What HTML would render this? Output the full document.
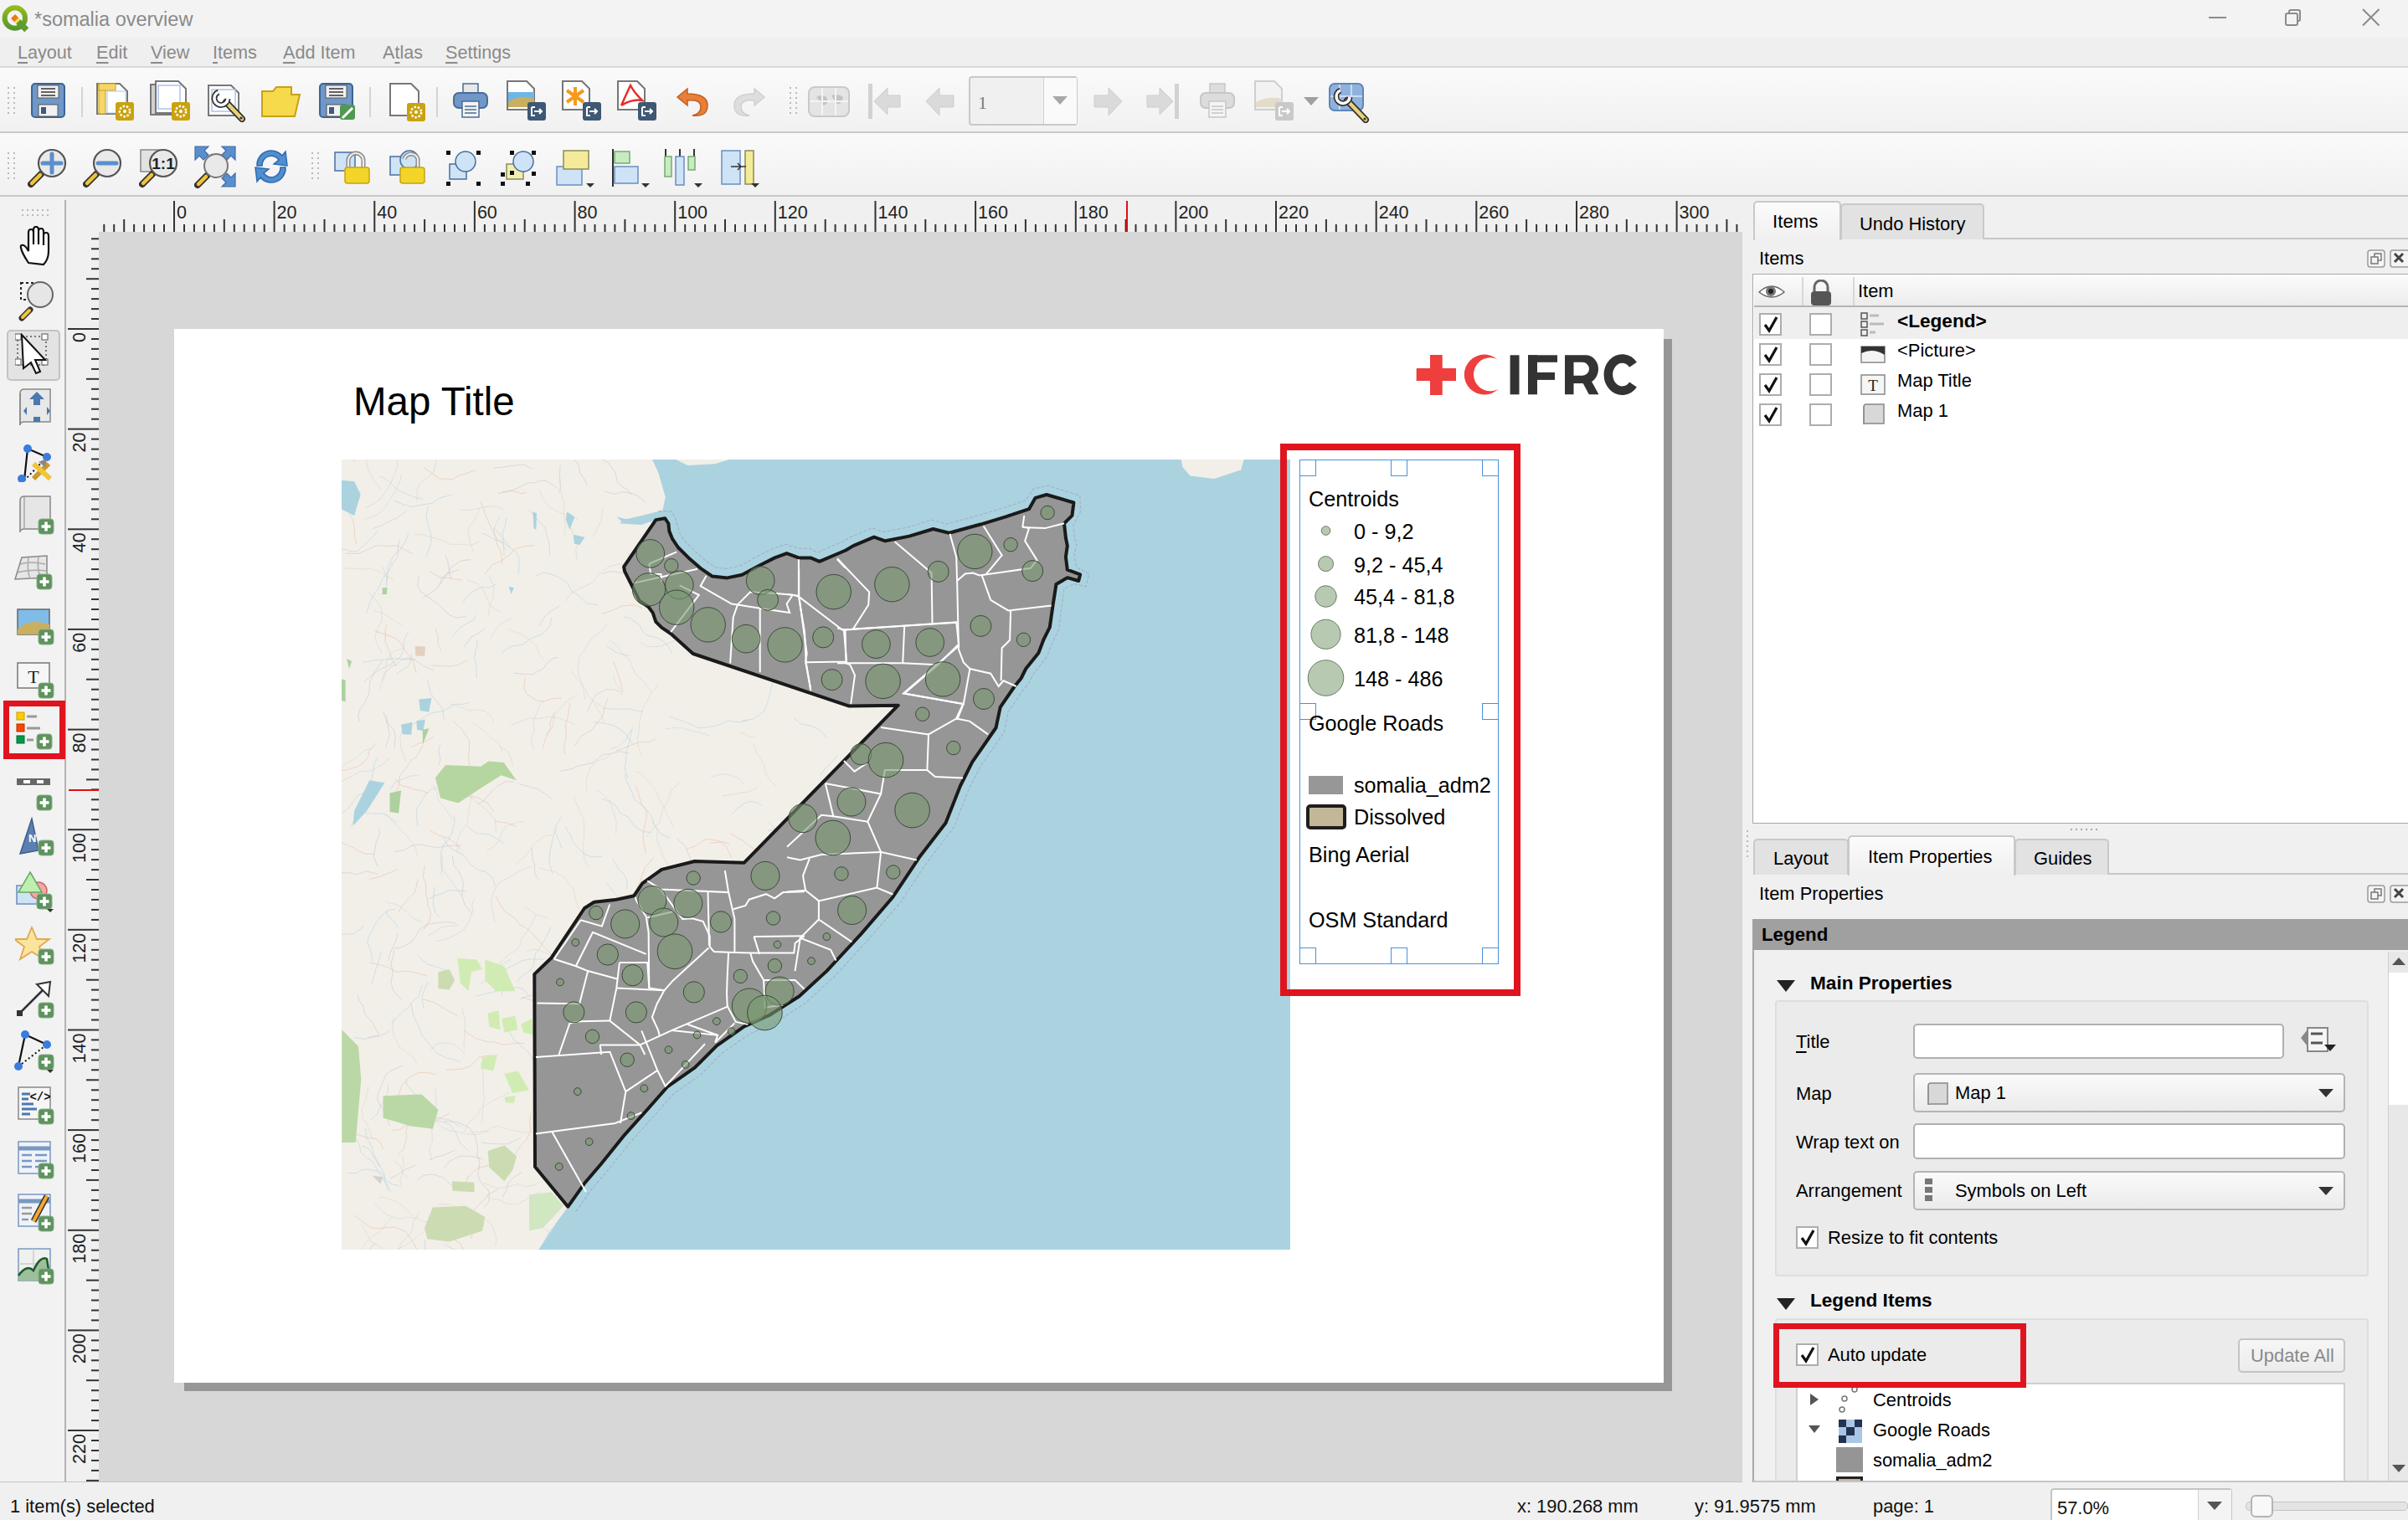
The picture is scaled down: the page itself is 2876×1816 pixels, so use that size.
<!DOCTYPE html>
<html><head><meta charset="utf-8"><title>somalia overview</title>
<style>
html,body{margin:0;padding:0;width:2876px;height:1816px;overflow:hidden;background:#f0f0f0;font-family:"Liberation Sans",sans-serif;}
u{text-decoration:underline;text-underline-offset:4px;text-decoration-thickness:1.5px;}
</style></head><body>
<div style="position:absolute;left:0px;top:0px;width:2876px;height:45px;background:#f3f3f3"></div><div style="position:absolute;left:0px;top:45px;width:2876px;height:36px;background:#efefef;border-bottom:2px solid #d8d8d8;box-sizing:border-box"></div><div style="position:absolute;left:0px;top:81px;width:2876px;height:78px;background:linear-gradient(#fafafa,#f1f1f1);border-bottom:2px solid #c9c9c9;box-sizing:border-box"></div><div style="position:absolute;left:0px;top:159px;width:2876px;height:76px;background:linear-gradient(#fafafa,#f1f1f1);border-bottom:2px solid #c9c9c9;box-sizing:border-box"></div><svg style="position:absolute;left:0px;top:0px;" width="40" height="45" viewBox="0 0 40 45"><defs><linearGradient id="qg" x1="0" y1="0" x2="0" y2="1"><stop offset="0" stop-color="#93b91c"/><stop offset="1" stop-color="#589632"/></linearGradient></defs><circle cx="17.8" cy="21.5" r="12.2" fill="none" stroke="url(#qg)" stroke-width="6"/><g transform="translate(15.5,19.5) rotate(45)"><rect x="0" y="-3.6" width="6" height="7.2" fill="#ee7913"/><rect x="6" y="-3.6" width="3" height="7.2" fill="#f3e04a"/><rect x="9" y="-3.6" width="14" height="7.2" fill="#5d9c2f"/></g></svg><div style="position:absolute;left:41px;top:11.8px;font-size:23.5px;line-height:1;color:#8a8a8a;font-weight:400;white-space:nowrap;">*somalia overview</div><div style="position:absolute;left:2638px;top:20px;width:21px;height:2px;background:#8a8a8a"></div><svg style="position:absolute;left:2727px;top:9px;" width="26" height="24" viewBox="0 0 26 24"><rect x="3" y="7" width="14" height="14" rx="2" fill="none" stroke="#8a8a8a" stroke-width="2"/><path d="M7 7 V5 a2 2 0 0 1 2 -2 H18 a2 2 0 0 1 2 2 V14 a2 2 0 0 1 -2 2 H17" fill="none" stroke="#8a8a8a" stroke-width="2"/></svg><svg style="position:absolute;left:2820px;top:9px;" width="24" height="24" viewBox="0 0 24 24"><path d="M2 2 L21.5 21.5 M21.5 2 L2 21.5" stroke="#8a8a8a" stroke-width="2"/></svg><div style="position:absolute;left:21px;top:51.8px;font-size:21.6px;line-height:1;color:#8a8a8a;font-weight:400;white-space:nowrap;"><u>L</u>ayout</div><div style="position:absolute;left:115px;top:51.8px;font-size:21.6px;line-height:1;color:#8a8a8a;font-weight:400;white-space:nowrap;"><u>E</u>dit</div><div style="position:absolute;left:180px;top:51.8px;font-size:21.6px;line-height:1;color:#8a8a8a;font-weight:400;white-space:nowrap;"><u>V</u>iew</div><div style="position:absolute;left:254px;top:51.8px;font-size:21.6px;line-height:1;color:#8a8a8a;font-weight:400;white-space:nowrap;"><u>I</u>tems</div><div style="position:absolute;left:338px;top:51.8px;font-size:21.6px;line-height:1;color:#8a8a8a;font-weight:400;white-space:nowrap;"><u>A</u>dd Item</div><div style="position:absolute;left:457px;top:51.8px;font-size:21.6px;line-height:1;color:#8a8a8a;font-weight:400;white-space:nowrap;">A<u>t</u>las</div><div style="position:absolute;left:532px;top:51.8px;font-size:21.6px;line-height:1;color:#8a8a8a;font-weight:400;white-space:nowrap;"><u>S</u>ettings</div><svg style="position:absolute;left:9px;top:104px;" width="14" height="36" viewBox="0 0 14 36"><rect x="0" y="0" width="2" height="2" fill="#b9b9b9"/><rect x="7" y="0" width="2" height="2" fill="#b9b9b9"/><rect x="0" y="6" width="2" height="2" fill="#b9b9b9"/><rect x="7" y="6" width="2" height="2" fill="#b9b9b9"/><rect x="0" y="12" width="2" height="2" fill="#b9b9b9"/><rect x="7" y="12" width="2" height="2" fill="#b9b9b9"/><rect x="0" y="18" width="2" height="2" fill="#b9b9b9"/><rect x="7" y="18" width="2" height="2" fill="#b9b9b9"/><rect x="0" y="24" width="2" height="2" fill="#b9b9b9"/><rect x="7" y="24" width="2" height="2" fill="#b9b9b9"/><rect x="0" y="30" width="2" height="2" fill="#b9b9b9"/><rect x="7" y="30" width="2" height="2" fill="#b9b9b9"/></svg><svg style="position:absolute;left:37px;top:99px;" width="45" height="46" viewBox="0 0 45 46"><rect x="1" y="1" width="39" height="40" rx="4" fill="#6f98c8" stroke="#3c6496" stroke-width="2"/><rect x="8" y="3" width="25" height="15" fill="#f1f1f1" stroke="#555" stroke-width="1"/><path d="M12 7 H29 M12 11 H29 M12 15 H29" stroke="#333" stroke-width="1.5"/><rect x="9" y="26" width="23" height="14" fill="#f1f1f1" stroke="#555" stroke-width="1"/><rect x="12" y="29" width="6" height="8" fill="#3c5a82"/></svg><div style="position:absolute;left:97px;top:104px;width:2px;height:36px;background:#d4d4d4"></div><svg style="position:absolute;left:115px;top:99px;" width="50" height="46" viewBox="0 0 50 46"><path d="M1 1 H28 L37 10 V37 H1 Z" fill="#fff" stroke="#777" stroke-width="2"/><rect x="3" y="1" width="8" height="36" fill="#f5d66a" stroke="#c9a20f"/><rect x="3" y="1" width="20" height="8" fill="#f5d66a" stroke="#c9a20f"/><rect x="13" y="10" width="22" height="26" fill="none" stroke="#a8c4f0"/><rect x="23" y="23" width="22" height="22" rx="3" fill="#c9a20f"/><circle cx="34.0" cy="34.0" r="6.16" fill="none" stroke="#fff" stroke-width="2.5" stroke-dasharray="2.5 1.8"/><circle cx="34.0" cy="34.0" r="2" fill="#fff"/></svg><svg style="position:absolute;left:179px;top:96px;" width="50" height="50" viewBox="0 0 50 50"><rect x="1" y="5" width="28" height="36" fill="#d0d0d0" stroke="#777" stroke-width="2"/><g transform="translate(6,0)"><path d="M1 1 H28 L37 10 V39 H1 Z" fill="#fff" stroke="#777" stroke-width="2"/><rect x="4" y="6" width="26" height="28" fill="none" stroke="#a8c4f0" stroke-width="1.5"/></g><rect x="26" y="26" width="22" height="22" rx="3" fill="#c9a20f"/><circle cx="37.0" cy="37.0" r="6.16" fill="none" stroke="#fff" stroke-width="2.5" stroke-dasharray="2.5 1.8"/><circle cx="37.0" cy="37.0" r="2" fill="#fff"/></svg><svg style="position:absolute;left:248px;top:101px;" width="50" height="48" viewBox="0 0 50 48"><path d="M1 1 H28 L37 10 V37 H1 Z" fill="#fff" stroke="#777" stroke-width="2"/><rect x="5" y="6" width="28" height="26" fill="none" stroke="#a8c4f0" stroke-width="1.5"/><path d="M22 21 L41 41" stroke="#333" stroke-width="8" stroke-linecap="round"/><path d="M22 21 L41 41" stroke="#e8d27a" stroke-width="4.5" stroke-linecap="round"/><circle cx="40" cy="40" r="1.6" fill="#333"/><path d="M13 9 A8 8 0 1 0 24 17" fill="none" stroke="#333" stroke-width="7"/><path d="M13 9 A8 8 0 1 0 24 17" fill="none" stroke="#fff" stroke-width="3.5"/></svg><svg style="position:absolute;left:312px;top:103px;" width="48" height="38" viewBox="0 0 48 38"><path d="M1 6 H14 L18 1 H36 V10 H46 L40 36 H1 Z" fill="#f7d94c" stroke="#c6a11a" stroke-width="2"/></svg><svg style="position:absolute;left:381px;top:99px;" width="45" height="46" viewBox="0 0 45 46"><rect x="1" y="1" width="39" height="40" rx="4" fill="#6f98c8" stroke="#3c6496" stroke-width="2"/><rect x="8" y="3" width="25" height="15" fill="#f1f1f1" stroke="#555" stroke-width="1"/><path d="M12 7 H29 M12 11 H29 M12 15 H29" stroke="#333" stroke-width="1.5"/><rect x="9" y="26" width="23" height="14" fill="#f1f1f1" stroke="#555" stroke-width="1"/><rect x="12" y="29" width="6" height="8" fill="#3c5a82"/><rect x="25" y="26" width="18" height="18" rx="3" fill="#4f9a51"/><path d="M28 42 L40 30" stroke="#fff" stroke-width="3"/></svg><div style="position:absolute;left:441px;top:104px;width:2px;height:36px;background:#d4d4d4"></div><svg style="position:absolute;left:465px;top:99px;" width="46" height="46" viewBox="0 0 46 46"><path d="M1 1 H26 L35 10 V39 H1 Z" fill="#fff" stroke="#777" stroke-width="2"/><rect x="21" y="24" width="22" height="22" rx="3" fill="#c9a20f"/><circle cx="32.0" cy="35.0" r="6.16" fill="none" stroke="#fff" stroke-width="2.5" stroke-dasharray="2.5 1.8"/><circle cx="32.0" cy="35.0" r="2" fill="#fff"/></svg><div style="position:absolute;left:521px;top:104px;width:2px;height:36px;background:#d4d4d4"></div><svg style="position:absolute;left:541px;top:99px;" width="44" height="44" viewBox="0 0 44 44"><rect x="12" y="1" width="18" height="12" fill="#e8e8e8" stroke="#4a6c96" stroke-width="1.5"/><rect x="1" y="12" width="40" height="18" rx="6" fill="#6f98c8" stroke="#4a6c96" stroke-width="2"/><rect x="11" y="22" width="20" height="19" fill="#f4f4f4" stroke="#4a6c96" stroke-width="1.5"/><path d="M14 28 H28 M14 32 H28 M14 36 H28" stroke="#4a6c96" stroke-width="1.5"/></svg><svg style="position:absolute;left:605px;top:96px;" width="50" height="50" viewBox="0 0 50 50"><path d="M1 1 H24 L33 10 V35 H1 Z" fill="#fff" stroke="#777" stroke-width="2"/><rect x="2" y="14" width="31" height="18" fill="#6fb6e8"/><path d="M2 32 L2 26 Q16 16 33 22 V32 Z" fill="#c8b060"/><rect x="25" y="26" width="22" height="22" rx="3" fill="#3f5873"/><path d="M30 32 H34 M30 32 V42 H34 M33 37 H42 M39 34 L42 37 L39 40" stroke="#fff" stroke-width="2" fill="none"/></svg><svg style="position:absolute;left:671px;top:96px;" width="50" height="50" viewBox="0 0 50 50"><path d="M1 1 H24 L33 10 V35 H1 Z" fill="#fff" stroke="#777" stroke-width="2"/><path d="M16 8 V30 M6 12 L26 26 M26 12 L6 26" stroke="#f59a1d" stroke-width="4"/><rect x="25" y="26" width="22" height="22" rx="3" fill="#3f5873"/><path d="M30 32 H34 M30 32 V42 H34 M33 37 H42 M39 34 L42 37 L39 40" stroke="#fff" stroke-width="2" fill="none"/></svg><svg style="position:absolute;left:737px;top:96px;" width="50" height="50" viewBox="0 0 50 50"><path d="M1 1 H24 L33 10 V35 H1 Z" fill="#fff" stroke="#777" stroke-width="2"/><path d="M5 30 Q14 10 16 6 Q20 14 30 24 Q18 22 5 30" fill="none" stroke="#e62e25" stroke-width="2.5"/><rect x="25" y="26" width="22" height="22" rx="3" fill="#3f5873"/><path d="M30 32 H34 M30 32 V42 H34 M33 37 H42 M39 34 L42 37 L39 40" stroke="#fff" stroke-width="2" fill="none"/></svg><svg style="position:absolute;left:807px;top:102px;" width="42" height="40" viewBox="0 0 42 40"><path d="M14 4 L2 14 L14 24 V18 Q30 16 30 26 Q30 34 20 36 Q38 38 38 24 Q38 10 14 10 Z" fill="#e77f3a" stroke="#c45e1c" stroke-width="1.5"/></svg><svg style="position:absolute;left:873px;top:102px;" width="42" height="40" viewBox="0 0 42 40"><path d="M28 4 L40 14 L28 24 V18 Q12 16 12 26 Q12 34 22 36 Q4 38 4 24 Q4 10 28 10 Z" fill="#dedede" stroke="#cfcfcf" stroke-width="1.5"/></svg><svg style="position:absolute;left:943px;top:104px;" width="14" height="36" viewBox="0 0 14 36"><rect x="0" y="0" width="2" height="2" fill="#b9b9b9"/><rect x="7" y="0" width="2" height="2" fill="#b9b9b9"/><rect x="0" y="6" width="2" height="2" fill="#b9b9b9"/><rect x="7" y="6" width="2" height="2" fill="#b9b9b9"/><rect x="0" y="12" width="2" height="2" fill="#b9b9b9"/><rect x="7" y="12" width="2" height="2" fill="#b9b9b9"/><rect x="0" y="18" width="2" height="2" fill="#b9b9b9"/><rect x="7" y="18" width="2" height="2" fill="#b9b9b9"/><rect x="0" y="24" width="2" height="2" fill="#b9b9b9"/><rect x="7" y="24" width="2" height="2" fill="#b9b9b9"/><rect x="0" y="30" width="2" height="2" fill="#b9b9b9"/><rect x="7" y="30" width="2" height="2" fill="#b9b9b9"/></svg><svg style="position:absolute;left:965px;top:102px;" width="52" height="40" viewBox="0 0 52 40"><rect x="1" y="2" width="48" height="35" rx="7" fill="#e4e4e4" stroke="#c9c9c9" stroke-width="2"/><path d="M10 14 q6 -4 12 0 q4 8 -4 10 Z M28 12 q8 -3 14 2 q-2 10 -8 8 Z" fill="#c4c4c4"/><path d="M17 3 V36 M33 3 V36 M2 19 H48" stroke="#f4f4f4" stroke-width="2"/></svg><svg style="position:absolute;left:1036px;top:99px;" width="42" height="44" viewBox="0 0 42 44"><rect x="1" y="1" width="5" height="42" fill="#d2d2d2"/><path d="M8 22 L24 6 V15 H39 V29 H24 V38 Z" fill="#dadada" stroke="#cdcdcd"/></svg><svg style="position:absolute;left:1105px;top:104px;" width="36" height="36" viewBox="0 0 36 36"><path d="M1 17 L17 1 V10 H34 V24 H17 V34 Z" fill="#dadada" stroke="#cdcdcd"/></svg><div style="position:absolute;left:1157px;top:91px;width:130px;height:59px;background:#f0f0f0;border:2px solid #c9c9c9;border-radius:4px;box-sizing:border-box"></div><div style="position:absolute;left:1246px;top:93px;width:40px;height:55px;background:#fafafa;border-left:1px solid #d0d0d0;box-sizing:border-box"></div><svg style="position:absolute;left:1257px;top:115px;" width="18" height="10" viewBox="0 0 18 10"><path d="M0 0 H18 L9 10 Z" fill="#a8a8a8"/></svg><div style="position:absolute;left:1168px;top:111.6px;font-size:22px;line-height:1;color:#7a7a7a;font-weight:400;white-space:nowrap;font-family:'Liberation Serif',serif;">1</div><svg style="position:absolute;left:1305px;top:104px;" width="36" height="36" viewBox="0 0 36 36"><path d="M35 17 L19 1 V10 H2 V24 H19 V34 Z" fill="#dadada" stroke="#cdcdcd"/></svg><svg style="position:absolute;left:1368px;top:99px;" width="42" height="44" viewBox="0 0 42 44"><rect x="35" y="1" width="5" height="42" fill="#d2d2d2"/><path d="M33 22 L17 6 V15 H2 V29 H17 V38 Z" fill="#dadada" stroke="#cdcdcd"/></svg><svg style="position:absolute;left:1433px;top:99px;" width="44" height="44" viewBox="0 0 44 44"><rect x="12" y="1" width="18" height="12" fill="#ddd" stroke="#c6c6c6" stroke-width="1.5"/><rect x="1" y="12" width="40" height="18" rx="6" fill="#dcdcdc" stroke="#c6c6c6" stroke-width="2"/><rect x="11" y="22" width="20" height="19" fill="#f4f4f4" stroke="#c6c6c6" stroke-width="1.5"/><path d="M14 28 H28 M14 32 H28 M14 36 H28" stroke="#c6c6c6" stroke-width="1.5"/></svg><svg style="position:absolute;left:1498px;top:96px;" width="50" height="50" viewBox="0 0 50 50"><path d="M1 1 H24 L33 10 V35 H1 Z" fill="#f2f2f2" stroke="#cfcfcf" stroke-width="2"/><path d="M2 32 L2 26 Q16 18 33 22 V32 Z" fill="#e2dcc8"/><rect x="25" y="26" width="22" height="22" rx="3" fill="#c9c9c9"/><path d="M30 32 H34 M30 32 V42 H34 M33 37 H42 M39 34 L42 37 L39 40" stroke="#fff" stroke-width="2" fill="none"/></svg><svg style="position:absolute;left:1557px;top:116px;" width="18" height="10" viewBox="0 0 18 10"><path d="M0 0 H18 L9 10 Z" fill="#a0a0a0"/></svg><svg style="position:absolute;left:1587px;top:99px;" width="52" height="48" viewBox="0 0 52 48"><rect x="1" y="1" width="40" height="32" rx="6" fill="#8fb1dc" stroke="#5f86b8" stroke-width="2"/><path d="M13 2 V32 M27 2 V32 M2 16 H40" stroke="#c9dcf2" stroke-width="2"/><path d="M22 21 L44 44" stroke="#333" stroke-width="8" stroke-linecap="round"/><path d="M22 21 L44 44" stroke="#e8d27a" stroke-width="4.5" stroke-linecap="round"/><circle cx="43" cy="43" r="1.6" fill="#333"/><path d="M14 9 A8 8 0 1 0 25 17" fill="none" stroke="#333" stroke-width="7"/><path d="M14 9 A8 8 0 1 0 25 17" fill="none" stroke="#fff" stroke-width="3.5"/></svg><svg style="position:absolute;left:9px;top:182px;" width="14" height="36" viewBox="0 0 14 36"><rect x="0" y="0" width="2" height="2" fill="#b9b9b9"/><rect x="7" y="0" width="2" height="2" fill="#b9b9b9"/><rect x="0" y="6" width="2" height="2" fill="#b9b9b9"/><rect x="7" y="6" width="2" height="2" fill="#b9b9b9"/><rect x="0" y="12" width="2" height="2" fill="#b9b9b9"/><rect x="7" y="12" width="2" height="2" fill="#b9b9b9"/><rect x="0" y="18" width="2" height="2" fill="#b9b9b9"/><rect x="7" y="18" width="2" height="2" fill="#b9b9b9"/><rect x="0" y="24" width="2" height="2" fill="#b9b9b9"/><rect x="7" y="24" width="2" height="2" fill="#b9b9b9"/><rect x="0" y="30" width="2" height="2" fill="#b9b9b9"/><rect x="7" y="30" width="2" height="2" fill="#b9b9b9"/></svg><svg style="position:absolute;left:33px;top:176px;" width="50" height="50" viewBox="0 0 50 50"><path d="M4 44 L16 32" stroke="#333" stroke-width="8" stroke-linecap="round"/><path d="M5 43 L15 33" stroke="#f2c43a" stroke-width="4.5" stroke-linecap="round"/><circle cx="29" cy="19" r="16" fill="#e9e9e9" stroke="#555" stroke-width="2.2"/><path d="M29 8 V30 M18 19 H40" stroke="#5b8fcc" stroke-width="5" stroke-linecap="round"/></svg><svg style="position:absolute;left:99px;top:176px;" width="50" height="50" viewBox="0 0 50 50"><path d="M4 44 L16 32" stroke="#333" stroke-width="8" stroke-linecap="round"/><path d="M5 43 L15 33" stroke="#f2c43a" stroke-width="4.5" stroke-linecap="round"/><circle cx="29" cy="19" r="16" fill="#e9e9e9" stroke="#555" stroke-width="2.2"/><path d="M18 19 H40" stroke="#5b8fcc" stroke-width="5" stroke-linecap="round"/></svg><svg style="position:absolute;left:166px;top:176px;" width="50" height="50" viewBox="0 0 50 50"><rect x="2" y="3" width="22" height="26" fill="#e2e2e2" stroke="#888" stroke-width="1.5"/><path d="M4 44 L16 32" stroke="#333" stroke-width="8" stroke-linecap="round"/><path d="M5 43 L15 33" stroke="#f2c43a" stroke-width="4.5" stroke-linecap="round"/><circle cx="29" cy="19" r="16" fill="#e9e9e9" stroke="#555" stroke-width="2.2"/><text x="29" y="26" font-size="19" font-weight="700" text-anchor="middle" fill="#222" font-family="Liberation Sans">1:1</text></svg><svg style="position:absolute;left:232px;top:174px;" width="52" height="52" viewBox="0 0 52 52"><path d="M1 1 H17 L12 6 L17 11 L11 17 L6 12 L1 17 Z" fill="#5b8fcc" stroke="#3f6ea8" stroke-width="1.2"/><path d="M49 1 H33 L38 6 L33 11 L39 17 L44 12 L49 17 Z" fill="#5b8fcc" stroke="#3f6ea8" stroke-width="1.2"/><path d="M49 49 H33 L38 44 L33 39 L39 33 L44 38 L49 33 Z" fill="#5b8fcc" stroke="#3f6ea8" stroke-width="1.2"/><path d="M4 47 L15 36" stroke="#333" stroke-width="8" stroke-linecap="round"/><path d="M5 46 L14 37" stroke="#f2c43a" stroke-width="4.5" stroke-linecap="round"/><circle cx="26" cy="24" r="14" fill="#e9e9e9" stroke="#777" stroke-width="2"/></svg><svg style="position:absolute;left:301px;top:176px;" width="46" height="46" viewBox="0 0 46 46"><path d="M6 22 A17 17 0 0 1 36 10 L40 5 L42 22 L26 20 L32 15 A11 11 0 0 0 12 22 Z" fill="#4f8fd0" stroke="#2f6aae" stroke-width="1.5"/><path d="M40 24 A17 17 0 0 1 10 36 L6 41 L4 24 L20 26 L14 31 A11 11 0 0 0 34 24 Z" fill="#4f8fd0" stroke="#2f6aae" stroke-width="1.5"/></svg><svg style="position:absolute;left:372px;top:182px;" width="14" height="36" viewBox="0 0 14 36"><rect x="0" y="0" width="2" height="2" fill="#b9b9b9"/><rect x="7" y="0" width="2" height="2" fill="#b9b9b9"/><rect x="0" y="6" width="2" height="2" fill="#b9b9b9"/><rect x="7" y="6" width="2" height="2" fill="#b9b9b9"/><rect x="0" y="12" width="2" height="2" fill="#b9b9b9"/><rect x="7" y="12" width="2" height="2" fill="#b9b9b9"/><rect x="0" y="18" width="2" height="2" fill="#b9b9b9"/><rect x="7" y="18" width="2" height="2" fill="#b9b9b9"/><rect x="0" y="24" width="2" height="2" fill="#b9b9b9"/><rect x="7" y="24" width="2" height="2" fill="#b9b9b9"/><rect x="0" y="30" width="2" height="2" fill="#b9b9b9"/><rect x="7" y="30" width="2" height="2" fill="#b9b9b9"/></svg><svg style="position:absolute;left:399px;top:178px;" width="50" height="50" viewBox="0 0 50 50"><rect x="1" y="4" width="24" height="22" fill="#cfe3f6" stroke="#4a6f9c" stroke-width="1.5"/><path d="M17 24 V14 a9 9 0 0 1 18 0 V24" fill="none" stroke="#888" stroke-width="5"/><path d="M17 24 V14 a9 9 0 0 1 18 0 V24" fill="none" stroke="#eee" stroke-width="2.2"/><rect x="13" y="22" width="29" height="19" rx="3" fill="#f2d528" stroke="#c9a20f" stroke-width="1.5"/></svg><svg style="position:absolute;left:465px;top:178px;" width="50" height="50" viewBox="0 0 50 50"><rect x="1" y="9" width="24" height="22" fill="#cfe3f6" stroke="#4a6f9c" stroke-width="1.5"/><circle cx="24" cy="13" r="11" fill="#cfe3f6" stroke="#4a6f9c" stroke-width="1.5"/><path d="M18 12 a8 7 0 0 1 16 2 V24" fill="none" stroke="#888" stroke-width="5"/><path d="M18 12 a8 7 0 0 1 16 2 V24" fill="none" stroke="#eee" stroke-width="2.2"/><rect x="13" y="22" width="29" height="19" rx="3" fill="#f2d528" stroke="#c9a20f" stroke-width="1.5"/></svg><svg style="position:absolute;left:531px;top:178px;" width="46" height="48" viewBox="0 0 46 48"><rect x="2" y="2" width="5" height="5" fill="#111"/><rect x="38" y="2" width="5" height="5" fill="#111"/><rect x="2" y="39" width="5" height="5" fill="#111"/><rect x="38" y="39" width="5" height="5" fill="#111"/><rect x="6" y="18" width="20" height="18" fill="#cfe3f6" stroke="#4a6f9c" stroke-width="1.5"/><circle cx="25" cy="15" r="12" fill="#cfe3f6" stroke="#4a6f9c" stroke-width="1.5"/></svg><svg style="position:absolute;left:598px;top:178px;" width="46" height="48" viewBox="0 0 46 48"><rect x="0" y="28" width="5" height="5" fill="#111"/><rect x="11" y="2" width="5" height="5" fill="#111"/><rect x="37" y="2" width="5" height="5" fill="#111"/><rect x="0" y="39" width="5" height="5" fill="#111"/><rect x="30" y="39" width="5" height="5" fill="#111"/><rect x="37" y="27" width="5" height="5" fill="#111"/><rect x="7" y="18" width="20" height="18" fill="#f2eeb0" stroke="#8a8a5a" stroke-width="1.5"/><circle cx="27" cy="15" r="12" fill="#cfe3f6" stroke="#4a6f9c" stroke-width="1.5"/><rect x="11" y="26" width="5" height="5" fill="#111"/></svg><svg style="position:absolute;left:664px;top:177px;" width="50" height="50" viewBox="0 0 50 50"><rect x="1" y="22" width="30" height="22" fill="#cfe3f6" stroke="#6a8fbf" stroke-width="1.5"/><rect x="9" y="3" width="30" height="22" fill="#f4eb9a" stroke="#8a8a5a" stroke-width="1.5"/><path d="M36 42 H46 L41 47 Z" fill="#333"/></svg><svg style="position:absolute;left:730px;top:177px;" width="50" height="50" viewBox="0 0 50 50"><path d="M2 1 V46" stroke="#333" stroke-width="2"/><rect x="4" y="4" width="18" height="14" fill="#c6ecc0" stroke="#7aa874" stroke-width="1.5"/><rect x="4" y="22" width="28" height="20" fill="#cfe3f6" stroke="#6a8fbf" stroke-width="1.5"/><path d="M36 42 H46 L41 47 Z" fill="#333"/></svg><svg style="position:absolute;left:793px;top:177px;" width="50" height="50" viewBox="0 0 50 50"><path d="M2 1 V12 M19 1 V12 M36 1 V12" stroke="#333" stroke-width="2"/><rect x="1" y="10" width="8" height="24" fill="#c6ecc0" stroke="#7aa874" stroke-width="1.5"/><rect x="14" y="10" width="10" height="34" fill="#cfe3f6" stroke="#6a8fbf" stroke-width="1.5"/><rect x="29" y="10" width="8" height="16" fill="#c6ecc0" stroke="#7aa874" stroke-width="1.5"/><path d="M36 42 H46 L41 47 Z" fill="#333"/></svg><svg style="position:absolute;left:861px;top:177px;" width="50" height="50" viewBox="0 0 50 50"><rect x="1" y="3" width="22" height="40" fill="#cfe3f6" stroke="#6a8fbf" stroke-width="1.5"/><rect x="29" y="3" width="10" height="40" fill="#f4eb9a" stroke="#8a8a5a" stroke-width="1.5"/><path d="M12 22 H24 M20 18 L24 22 L20 26 M30 22 H18" stroke="#333" stroke-width="1.5" fill="none"/><path d="M36 42 H46 L41 47 Z" fill="#333"/></svg><div style="position:absolute;left:0px;top:235px;width:78px;height:1536px;background:#f2f2f2"></div><svg style="position:absolute;left:26px;top:250px;" width="36" height="12" viewBox="0 0 36 12"><rect x="0" y="0" width="2" height="2" fill="#b9b9b9"/><rect x="6" y="0" width="2" height="2" fill="#b9b9b9"/><rect x="12" y="0" width="2" height="2" fill="#b9b9b9"/><rect x="18" y="0" width="2" height="2" fill="#b9b9b9"/><rect x="24" y="0" width="2" height="2" fill="#b9b9b9"/><rect x="30" y="0" width="2" height="2" fill="#b9b9b9"/><rect x="0" y="6" width="2" height="2" fill="#b9b9b9"/><rect x="6" y="6" width="2" height="2" fill="#b9b9b9"/><rect x="12" y="6" width="2" height="2" fill="#b9b9b9"/><rect x="18" y="6" width="2" height="2" fill="#b9b9b9"/><rect x="24" y="6" width="2" height="2" fill="#b9b9b9"/><rect x="30" y="6" width="2" height="2" fill="#b9b9b9"/></svg><div style="position:absolute;left:78px;top:235px;width:2003px;height:42px;background:#f0f0f0"></div><div style="position:absolute;left:78px;top:235px;width:40px;height:1536px;background:#f0f0f0"></div><div style="position:absolute;left:77px;top:239px;width:2px;height:1532px;background:#b4b4b4"></div><div style="position:absolute;left:118px;top:277px;width:1963px;height:1494px;background:#d7d7d7"></div><div style="position:absolute;left:0px;top:1770px;width:2081px;height:1px;background:#c4c4c4"></div><div style="position:absolute;left:2081px;top:235px;width:12px;height:1536px;background:#f0f0f0"></div><svg style="position:absolute;left:78px;top:235px;" width="2003" height="42" viewBox="0 0 2003 42"><rect x="45.3" y="33" width="2" height="9" fill="#333"/><rect x="57.2" y="33" width="2" height="9" fill="#333"/><rect x="69.2" y="27" width="2" height="15" fill="#333"/><rect x="81.1" y="33" width="2" height="9" fill="#333"/><rect x="93.1" y="33" width="2" height="9" fill="#333"/><rect x="105.1" y="33" width="2" height="9" fill="#333"/><rect x="117.0" y="33" width="2" height="9" fill="#333"/><rect x="129.0" y="5" width="2" height="37" fill="#333"/><text x="133.0" y="25.5" font-size="21.5" fill="#222" font-family="Liberation Sans">0</text><rect x="141.0" y="33" width="2" height="9" fill="#333"/><rect x="152.9" y="33" width="2" height="9" fill="#333"/><rect x="164.9" y="33" width="2" height="9" fill="#333"/><rect x="176.9" y="33" width="2" height="9" fill="#333"/><rect x="188.8" y="27" width="2" height="15" fill="#333"/><rect x="200.8" y="33" width="2" height="9" fill="#333"/><rect x="212.7" y="33" width="2" height="9" fill="#333"/><rect x="224.7" y="33" width="2" height="9" fill="#333"/><rect x="236.7" y="33" width="2" height="9" fill="#333"/><rect x="248.6" y="5" width="2" height="37" fill="#333"/><text x="252.6" y="25.5" font-size="21.5" fill="#222" font-family="Liberation Sans">20</text><rect x="260.6" y="33" width="2" height="9" fill="#333"/><rect x="272.6" y="33" width="2" height="9" fill="#333"/><rect x="284.5" y="33" width="2" height="9" fill="#333"/><rect x="296.5" y="33" width="2" height="9" fill="#333"/><rect x="308.5" y="27" width="2" height="15" fill="#333"/><rect x="320.4" y="33" width="2" height="9" fill="#333"/><rect x="332.4" y="33" width="2" height="9" fill="#333"/><rect x="344.4" y="33" width="2" height="9" fill="#333"/><rect x="356.3" y="33" width="2" height="9" fill="#333"/><rect x="368.3" y="5" width="2" height="37" fill="#333"/><text x="372.3" y="25.5" font-size="21.5" fill="#222" font-family="Liberation Sans">40</text><rect x="380.2" y="33" width="2" height="9" fill="#333"/><rect x="392.2" y="33" width="2" height="9" fill="#333"/><rect x="404.2" y="33" width="2" height="9" fill="#333"/><rect x="416.1" y="33" width="2" height="9" fill="#333"/><rect x="428.1" y="27" width="2" height="15" fill="#333"/><rect x="440.1" y="33" width="2" height="9" fill="#333"/><rect x="452.0" y="33" width="2" height="9" fill="#333"/><rect x="464.0" y="33" width="2" height="9" fill="#333"/><rect x="476.0" y="33" width="2" height="9" fill="#333"/><rect x="487.9" y="5" width="2" height="37" fill="#333"/><text x="491.9" y="25.5" font-size="21.5" fill="#222" font-family="Liberation Sans">60</text><rect x="499.9" y="33" width="2" height="9" fill="#333"/><rect x="511.8" y="33" width="2" height="9" fill="#333"/><rect x="523.8" y="33" width="2" height="9" fill="#333"/><rect x="535.8" y="33" width="2" height="9" fill="#333"/><rect x="547.7" y="27" width="2" height="15" fill="#333"/><rect x="559.7" y="33" width="2" height="9" fill="#333"/><rect x="571.7" y="33" width="2" height="9" fill="#333"/><rect x="583.6" y="33" width="2" height="9" fill="#333"/><rect x="595.6" y="33" width="2" height="9" fill="#333"/><rect x="607.6" y="5" width="2" height="37" fill="#333"/><text x="611.6" y="25.5" font-size="21.5" fill="#222" font-family="Liberation Sans">80</text><rect x="619.5" y="33" width="2" height="9" fill="#333"/><rect x="631.5" y="33" width="2" height="9" fill="#333"/><rect x="643.5" y="33" width="2" height="9" fill="#333"/><rect x="655.4" y="33" width="2" height="9" fill="#333"/><rect x="667.4" y="27" width="2" height="15" fill="#333"/><rect x="679.3" y="33" width="2" height="9" fill="#333"/><rect x="691.3" y="33" width="2" height="9" fill="#333"/><rect x="703.3" y="33" width="2" height="9" fill="#333"/><rect x="715.2" y="33" width="2" height="9" fill="#333"/><rect x="727.2" y="5" width="2" height="37" fill="#333"/><text x="731.2" y="25.5" font-size="21.5" fill="#222" font-family="Liberation Sans">100</text><rect x="739.2" y="33" width="2" height="9" fill="#333"/><rect x="751.1" y="33" width="2" height="9" fill="#333"/><rect x="763.1" y="33" width="2" height="9" fill="#333"/><rect x="775.1" y="33" width="2" height="9" fill="#333"/><rect x="787.0" y="27" width="2" height="15" fill="#333"/><rect x="799.0" y="33" width="2" height="9" fill="#333"/><rect x="810.9" y="33" width="2" height="9" fill="#333"/><rect x="822.9" y="33" width="2" height="9" fill="#333"/><rect x="834.9" y="33" width="2" height="9" fill="#333"/><rect x="846.8" y="5" width="2" height="37" fill="#333"/><text x="850.8" y="25.5" font-size="21.5" fill="#222" font-family="Liberation Sans">120</text><rect x="858.8" y="33" width="2" height="9" fill="#333"/><rect x="870.8" y="33" width="2" height="9" fill="#333"/><rect x="882.7" y="33" width="2" height="9" fill="#333"/><rect x="894.7" y="33" width="2" height="9" fill="#333"/><rect x="906.7" y="27" width="2" height="15" fill="#333"/><rect x="918.6" y="33" width="2" height="9" fill="#333"/><rect x="930.6" y="33" width="2" height="9" fill="#333"/><rect x="942.6" y="33" width="2" height="9" fill="#333"/><rect x="954.5" y="33" width="2" height="9" fill="#333"/><rect x="966.5" y="5" width="2" height="37" fill="#333"/><text x="970.5" y="25.5" font-size="21.5" fill="#222" font-family="Liberation Sans">140</text><rect x="978.4" y="33" width="2" height="9" fill="#333"/><rect x="990.4" y="33" width="2" height="9" fill="#333"/><rect x="1002.4" y="33" width="2" height="9" fill="#333"/><rect x="1014.3" y="33" width="2" height="9" fill="#333"/><rect x="1026.3" y="27" width="2" height="15" fill="#333"/><rect x="1038.3" y="33" width="2" height="9" fill="#333"/><rect x="1050.2" y="33" width="2" height="9" fill="#333"/><rect x="1062.2" y="33" width="2" height="9" fill="#333"/><rect x="1074.2" y="33" width="2" height="9" fill="#333"/><rect x="1086.1" y="5" width="2" height="37" fill="#333"/><text x="1090.1" y="25.5" font-size="21.5" fill="#222" font-family="Liberation Sans">160</text><rect x="1098.1" y="33" width="2" height="9" fill="#333"/><rect x="1110.0" y="33" width="2" height="9" fill="#333"/><rect x="1122.0" y="33" width="2" height="9" fill="#333"/><rect x="1134.0" y="33" width="2" height="9" fill="#333"/><rect x="1145.9" y="27" width="2" height="15" fill="#333"/><rect x="1157.9" y="33" width="2" height="9" fill="#333"/><rect x="1169.9" y="33" width="2" height="9" fill="#333"/><rect x="1181.8" y="33" width="2" height="9" fill="#333"/><rect x="1193.8" y="33" width="2" height="9" fill="#333"/><rect x="1205.8" y="5" width="2" height="37" fill="#333"/><text x="1209.8" y="25.5" font-size="21.5" fill="#222" font-family="Liberation Sans">180</text><rect x="1217.7" y="33" width="2" height="9" fill="#333"/><rect x="1229.7" y="33" width="2" height="9" fill="#333"/><rect x="1241.7" y="33" width="2" height="9" fill="#333"/><rect x="1253.6" y="33" width="2" height="9" fill="#333"/><rect x="1265.6" y="27" width="2" height="15" fill="#333"/><rect x="1277.5" y="33" width="2" height="9" fill="#333"/><rect x="1289.5" y="33" width="2" height="9" fill="#333"/><rect x="1301.5" y="33" width="2" height="9" fill="#333"/><rect x="1313.4" y="33" width="2" height="9" fill="#333"/><rect x="1325.4" y="5" width="2" height="37" fill="#333"/><text x="1329.4" y="25.5" font-size="21.5" fill="#222" font-family="Liberation Sans">200</text><rect x="1337.4" y="33" width="2" height="9" fill="#333"/><rect x="1349.3" y="33" width="2" height="9" fill="#333"/><rect x="1361.3" y="33" width="2" height="9" fill="#333"/><rect x="1373.3" y="33" width="2" height="9" fill="#333"/><rect x="1385.2" y="27" width="2" height="15" fill="#333"/><rect x="1397.2" y="33" width="2" height="9" fill="#333"/><rect x="1409.1" y="33" width="2" height="9" fill="#333"/><rect x="1421.1" y="33" width="2" height="9" fill="#333"/><rect x="1433.1" y="33" width="2" height="9" fill="#333"/><rect x="1445.0" y="5" width="2" height="37" fill="#333"/><text x="1449.0" y="25.5" font-size="21.5" fill="#222" font-family="Liberation Sans">220</text><rect x="1457.0" y="33" width="2" height="9" fill="#333"/><rect x="1469.0" y="33" width="2" height="9" fill="#333"/><rect x="1480.9" y="33" width="2" height="9" fill="#333"/><rect x="1492.9" y="33" width="2" height="9" fill="#333"/><rect x="1504.9" y="27" width="2" height="15" fill="#333"/><rect x="1516.8" y="33" width="2" height="9" fill="#333"/><rect x="1528.8" y="33" width="2" height="9" fill="#333"/><rect x="1540.8" y="33" width="2" height="9" fill="#333"/><rect x="1552.7" y="33" width="2" height="9" fill="#333"/><rect x="1564.7" y="5" width="2" height="37" fill="#333"/><text x="1568.7" y="25.5" font-size="21.5" fill="#222" font-family="Liberation Sans">240</text><rect x="1576.6" y="33" width="2" height="9" fill="#333"/><rect x="1588.6" y="33" width="2" height="9" fill="#333"/><rect x="1600.6" y="33" width="2" height="9" fill="#333"/><rect x="1612.5" y="33" width="2" height="9" fill="#333"/><rect x="1624.5" y="27" width="2" height="15" fill="#333"/><rect x="1636.5" y="33" width="2" height="9" fill="#333"/><rect x="1648.4" y="33" width="2" height="9" fill="#333"/><rect x="1660.4" y="33" width="2" height="9" fill="#333"/><rect x="1672.4" y="33" width="2" height="9" fill="#333"/><rect x="1684.3" y="5" width="2" height="37" fill="#333"/><text x="1688.3" y="25.5" font-size="21.5" fill="#222" font-family="Liberation Sans">260</text><rect x="1696.3" y="33" width="2" height="9" fill="#333"/><rect x="1708.2" y="33" width="2" height="9" fill="#333"/><rect x="1720.2" y="33" width="2" height="9" fill="#333"/><rect x="1732.2" y="33" width="2" height="9" fill="#333"/><rect x="1744.1" y="27" width="2" height="15" fill="#333"/><rect x="1756.1" y="33" width="2" height="9" fill="#333"/><rect x="1768.1" y="33" width="2" height="9" fill="#333"/><rect x="1780.0" y="33" width="2" height="9" fill="#333"/><rect x="1792.0" y="33" width="2" height="9" fill="#333"/><rect x="1804.0" y="5" width="2" height="37" fill="#333"/><text x="1808.0" y="25.5" font-size="21.5" fill="#222" font-family="Liberation Sans">280</text><rect x="1815.9" y="33" width="2" height="9" fill="#333"/><rect x="1827.9" y="33" width="2" height="9" fill="#333"/><rect x="1839.9" y="33" width="2" height="9" fill="#333"/><rect x="1851.8" y="33" width="2" height="9" fill="#333"/><rect x="1863.8" y="27" width="2" height="15" fill="#333"/><rect x="1875.7" y="33" width="2" height="9" fill="#333"/><rect x="1887.7" y="33" width="2" height="9" fill="#333"/><rect x="1899.7" y="33" width="2" height="9" fill="#333"/><rect x="1911.6" y="33" width="2" height="9" fill="#333"/><rect x="1923.6" y="5" width="2" height="37" fill="#333"/><text x="1927.6" y="25.5" font-size="21.5" fill="#222" font-family="Liberation Sans">300</text><rect x="1935.6" y="33" width="2" height="9" fill="#333"/><rect x="1947.5" y="33" width="2" height="9" fill="#333"/><rect x="1959.5" y="33" width="2" height="9" fill="#333"/><rect x="1971.5" y="33" width="2" height="9" fill="#333"/><rect x="1983.4" y="27" width="2" height="15" fill="#333"/><rect x="1995.4" y="33" width="2" height="9" fill="#333"/></svg><svg style="position:absolute;left:78px;top:277px;" width="40" height="1494" viewBox="0 0 40 1494"><rect x="31" y="7.3" width="9" height="2" fill="#333"/><rect x="31" y="19.3" width="9" height="2" fill="#333"/><rect x="31" y="31.3" width="9" height="2" fill="#333"/><rect x="31" y="43.2" width="9" height="2" fill="#333"/><rect x="25" y="55.2" width="15" height="2" fill="#333"/><rect x="31" y="67.1" width="9" height="2" fill="#333"/><rect x="31" y="79.1" width="9" height="2" fill="#333"/><rect x="31" y="91.1" width="9" height="2" fill="#333"/><rect x="31" y="103.0" width="9" height="2" fill="#333"/><rect x="3" y="115.0" width="37" height="2" fill="#333"/><text transform="translate(24,120.0) rotate(-90)" text-anchor="end" font-size="21.5" fill="#222" font-family="Liberation Sans">0</text><rect x="31" y="127.0" width="9" height="2" fill="#333"/><rect x="31" y="138.9" width="9" height="2" fill="#333"/><rect x="31" y="150.9" width="9" height="2" fill="#333"/><rect x="31" y="162.9" width="9" height="2" fill="#333"/><rect x="25" y="174.8" width="15" height="2" fill="#333"/><rect x="31" y="186.8" width="9" height="2" fill="#333"/><rect x="31" y="198.7" width="9" height="2" fill="#333"/><rect x="31" y="210.7" width="9" height="2" fill="#333"/><rect x="31" y="222.7" width="9" height="2" fill="#333"/><rect x="3" y="234.6" width="37" height="2" fill="#333"/><text transform="translate(24,239.6) rotate(-90)" text-anchor="end" font-size="21.5" fill="#222" font-family="Liberation Sans">20</text><rect x="31" y="246.6" width="9" height="2" fill="#333"/><rect x="31" y="258.6" width="9" height="2" fill="#333"/><rect x="31" y="270.5" width="9" height="2" fill="#333"/><rect x="31" y="282.5" width="9" height="2" fill="#333"/><rect x="25" y="294.5" width="15" height="2" fill="#333"/><rect x="31" y="306.4" width="9" height="2" fill="#333"/><rect x="31" y="318.4" width="9" height="2" fill="#333"/><rect x="31" y="330.4" width="9" height="2" fill="#333"/><rect x="31" y="342.3" width="9" height="2" fill="#333"/><rect x="3" y="354.3" width="37" height="2" fill="#333"/><text transform="translate(24,359.3) rotate(-90)" text-anchor="end" font-size="21.5" fill="#222" font-family="Liberation Sans">40</text><rect x="31" y="366.2" width="9" height="2" fill="#333"/><rect x="31" y="378.2" width="9" height="2" fill="#333"/><rect x="31" y="390.2" width="9" height="2" fill="#333"/><rect x="31" y="402.1" width="9" height="2" fill="#333"/><rect x="25" y="414.1" width="15" height="2" fill="#333"/><rect x="31" y="426.1" width="9" height="2" fill="#333"/><rect x="31" y="438.0" width="9" height="2" fill="#333"/><rect x="31" y="450.0" width="9" height="2" fill="#333"/><rect x="31" y="462.0" width="9" height="2" fill="#333"/><rect x="3" y="473.9" width="37" height="2" fill="#333"/><text transform="translate(24,478.9) rotate(-90)" text-anchor="end" font-size="21.5" fill="#222" font-family="Liberation Sans">60</text><rect x="31" y="485.9" width="9" height="2" fill="#333"/><rect x="31" y="497.8" width="9" height="2" fill="#333"/><rect x="31" y="509.8" width="9" height="2" fill="#333"/><rect x="31" y="521.8" width="9" height="2" fill="#333"/><rect x="25" y="533.7" width="15" height="2" fill="#333"/><rect x="31" y="545.7" width="9" height="2" fill="#333"/><rect x="31" y="557.7" width="9" height="2" fill="#333"/><rect x="31" y="569.6" width="9" height="2" fill="#333"/><rect x="31" y="581.6" width="9" height="2" fill="#333"/><rect x="3" y="593.6" width="37" height="2" fill="#333"/><text transform="translate(24,598.6) rotate(-90)" text-anchor="end" font-size="21.5" fill="#222" font-family="Liberation Sans">80</text><rect x="31" y="605.5" width="9" height="2" fill="#333"/><rect x="31" y="617.5" width="9" height="2" fill="#333"/><rect x="31" y="629.5" width="9" height="2" fill="#333"/><rect x="31" y="641.4" width="9" height="2" fill="#333"/><rect x="25" y="653.4" width="15" height="2" fill="#333"/><rect x="31" y="665.3" width="9" height="2" fill="#333"/><rect x="31" y="677.3" width="9" height="2" fill="#333"/><rect x="31" y="689.3" width="9" height="2" fill="#333"/><rect x="31" y="701.2" width="9" height="2" fill="#333"/><rect x="3" y="713.2" width="37" height="2" fill="#333"/><text transform="translate(24,718.2) rotate(-90)" text-anchor="end" font-size="21.5" fill="#222" font-family="Liberation Sans">100</text><rect x="31" y="725.2" width="9" height="2" fill="#333"/><rect x="31" y="737.1" width="9" height="2" fill="#333"/><rect x="31" y="749.1" width="9" height="2" fill="#333"/><rect x="31" y="761.1" width="9" height="2" fill="#333"/><rect x="25" y="773.0" width="15" height="2" fill="#333"/><rect x="31" y="785.0" width="9" height="2" fill="#333"/><rect x="31" y="796.9" width="9" height="2" fill="#333"/><rect x="31" y="808.9" width="9" height="2" fill="#333"/><rect x="31" y="820.9" width="9" height="2" fill="#333"/><rect x="3" y="832.8" width="37" height="2" fill="#333"/><text transform="translate(24,837.8) rotate(-90)" text-anchor="end" font-size="21.5" fill="#222" font-family="Liberation Sans">120</text><rect x="31" y="844.8" width="9" height="2" fill="#333"/><rect x="31" y="856.8" width="9" height="2" fill="#333"/><rect x="31" y="868.7" width="9" height="2" fill="#333"/><rect x="31" y="880.7" width="9" height="2" fill="#333"/><rect x="25" y="892.7" width="15" height="2" fill="#333"/><rect x="31" y="904.6" width="9" height="2" fill="#333"/><rect x="31" y="916.6" width="9" height="2" fill="#333"/><rect x="31" y="928.6" width="9" height="2" fill="#333"/><rect x="31" y="940.5" width="9" height="2" fill="#333"/><rect x="3" y="952.5" width="37" height="2" fill="#333"/><text transform="translate(24,957.5) rotate(-90)" text-anchor="end" font-size="21.5" fill="#222" font-family="Liberation Sans">140</text><rect x="31" y="964.4" width="9" height="2" fill="#333"/><rect x="31" y="976.4" width="9" height="2" fill="#333"/><rect x="31" y="988.4" width="9" height="2" fill="#333"/><rect x="31" y="1000.3" width="9" height="2" fill="#333"/><rect x="25" y="1012.3" width="15" height="2" fill="#333"/><rect x="31" y="1024.3" width="9" height="2" fill="#333"/><rect x="31" y="1036.2" width="9" height="2" fill="#333"/><rect x="31" y="1048.2" width="9" height="2" fill="#333"/><rect x="31" y="1060.2" width="9" height="2" fill="#333"/><rect x="3" y="1072.1" width="37" height="2" fill="#333"/><text transform="translate(24,1077.1) rotate(-90)" text-anchor="end" font-size="21.5" fill="#222" font-family="Liberation Sans">160</text><rect x="31" y="1084.1" width="9" height="2" fill="#333"/><rect x="31" y="1096.0" width="9" height="2" fill="#333"/><rect x="31" y="1108.0" width="9" height="2" fill="#333"/><rect x="31" y="1120.0" width="9" height="2" fill="#333"/><rect x="25" y="1131.9" width="15" height="2" fill="#333"/><rect x="31" y="1143.9" width="9" height="2" fill="#333"/><rect x="31" y="1155.9" width="9" height="2" fill="#333"/><rect x="31" y="1167.8" width="9" height="2" fill="#333"/><rect x="31" y="1179.8" width="9" height="2" fill="#333"/><rect x="3" y="1191.8" width="37" height="2" fill="#333"/><text transform="translate(24,1196.8) rotate(-90)" text-anchor="end" font-size="21.5" fill="#222" font-family="Liberation Sans">180</text><rect x="31" y="1203.7" width="9" height="2" fill="#333"/><rect x="31" y="1215.7" width="9" height="2" fill="#333"/><rect x="31" y="1227.7" width="9" height="2" fill="#333"/><rect x="31" y="1239.6" width="9" height="2" fill="#333"/><rect x="25" y="1251.6" width="15" height="2" fill="#333"/><rect x="31" y="1263.5" width="9" height="2" fill="#333"/><rect x="31" y="1275.5" width="9" height="2" fill="#333"/><rect x="31" y="1287.5" width="9" height="2" fill="#333"/><rect x="31" y="1299.4" width="9" height="2" fill="#333"/><rect x="3" y="1311.4" width="37" height="2" fill="#333"/><text transform="translate(24,1316.4) rotate(-90)" text-anchor="end" font-size="21.5" fill="#222" font-family="Liberation Sans">200</text><rect x="31" y="1323.4" width="9" height="2" fill="#333"/><rect x="31" y="1335.3" width="9" height="2" fill="#333"/><rect x="31" y="1347.3" width="9" height="2" fill="#333"/><rect x="31" y="1359.3" width="9" height="2" fill="#333"/><rect x="25" y="1371.2" width="15" height="2" fill="#333"/><rect x="31" y="1383.2" width="9" height="2" fill="#333"/><rect x="31" y="1395.1" width="9" height="2" fill="#333"/><rect x="31" y="1407.1" width="9" height="2" fill="#333"/><rect x="31" y="1419.1" width="9" height="2" fill="#333"/><rect x="3" y="1431.0" width="37" height="2" fill="#333"/><text transform="translate(24,1436.0) rotate(-90)" text-anchor="end" font-size="21.5" fill="#222" font-family="Liberation Sans">220</text><rect x="31" y="1443.0" width="9" height="2" fill="#333"/><rect x="31" y="1455.0" width="9" height="2" fill="#333"/><rect x="31" y="1466.9" width="9" height="2" fill="#333"/><rect x="31" y="1478.9" width="9" height="2" fill="#333"/><rect x="25" y="1490.9" width="15" height="2" fill="#333"/></svg><div style="position:absolute;left:1345px;top:240px;width:2px;height:37px;background:#e01010"></div><div style="position:absolute;left:82px;top:943px;width:36px;height:2px;background:#e01010"></div><div style="position:absolute;left:220px;top:405px;width:1777px;height:1257px;background:#979797"></div><div style="position:absolute;left:208px;top:393px;width:1779px;height:1259px;background:#fff"></div><svg style="position:absolute;left:22px;top:270px;" width="42" height="48" viewBox="0 0 42 48"><path d="M12 44 Q4 32 3 26 Q2 22 6 23 Q9 24 12 30 V8 Q12 4 15 4 Q18 4 18 8 V22 V5 Q18 1 21 1 Q24 1 24 5 V22 V6 Q24 3 27 3 Q30 3 30 7 V23 V11 Q30 8 33 8 Q36 8 36 12 V30 Q36 40 30 46 Z" fill="#fff" stroke="#111" stroke-width="2.2"/></svg><svg style="position:absolute;left:22px;top:334px;" width="44" height="50" viewBox="0 0 44 50"><rect x="3" y="4" width="20" height="20" fill="none" stroke="#222" stroke-width="2" stroke-dasharray="3 3"/><circle cx="26" cy="18" r="15" fill="#e6e6e6" stroke="#666" stroke-width="2"/><path d="M4 46 L14 36" stroke="#333" stroke-width="7" stroke-linecap="round"/><path d="M5 45 L13 37" stroke="#f2c43a" stroke-width="4" stroke-linecap="round"/></svg><div style="position:absolute;left:8px;top:394px;width:64px;height:61px;background:#e3e3e3;border:2px solid #c3c3c3;border-radius:5px;box-sizing:border-box"></div><svg style="position:absolute;left:18px;top:398px;" width="44" height="52" viewBox="0 0 44 52"><rect x="3" y="4" width="34" height="34" fill="none" stroke="#777" stroke-width="2" stroke-dasharray="2 3"/><rect x="0" y="1" width="7" height="7" fill="#fff" stroke="#555"/><rect x="32" y="1" width="7" height="7" fill="#fff" stroke="#555"/><rect x="0" y="31" width="7" height="7" fill="#fff" stroke="#555"/><rect x="32" y="31" width="7" height="7" fill="#fff" stroke="#555"/><path d="M8 2 L36 32 L24 32 L30 46 L25 48 L19 35 L10 42 Z" fill="#fff" stroke="#111" stroke-width="2"/></svg><svg style="position:absolute;left:20px;top:464px;" width="44" height="46" viewBox="0 0 44 46"><path d="M4 6 Q4 1 9 1 H40 V40 H9 Q4 40 4 44 Z" fill="#e8e8e8" stroke="#888" stroke-width="1.5"/><path d="M4 6 V44" stroke="#888" stroke-width="1.5"/><path d="M24 4 L33 13 H28 V20 H20 V13 H15 Z M12 22 L8 27 L12 32 Z M36 22 L40 27 L36 32 Z M20 34 H28 V40 H20 Z" fill="#4a78b0"/></svg><svg style="position:absolute;left:18px;top:528px;" width="46" height="48" viewBox="0 0 46 48"><path d="M11 46 L15 8 L38 18" fill="none" stroke="#111" stroke-width="2.2"/><path d="M11 46 L38 18" stroke="#111" stroke-width="2" stroke-dasharray="2 3"/><circle cx="15" cy="8" r="5" fill="#3a7be0"/><circle cx="38" cy="18" r="5" fill="#3a7be0"/><circle cx="8" cy="44" r="5" fill="#3a7be0"/><path d="M22 44 L40 26" stroke="#c99a2a" stroke-width="6"/><path d="M22 26 L42 44" stroke="#f2c43a" stroke-width="6"/><path d="M28 24 L38 20 L36 30 Z" fill="#888"/></svg><svg style="position:absolute;left:20px;top:592px;" width="48" height="50" viewBox="0 0 48 50"><path d="M4 6 Q4 1 9 1 H40 V40 H9 Q4 40 4 44 Z" fill="#e6e6e6" stroke="#888" stroke-width="1.5"/><path d="M4 6 V44 M9 1 V40" stroke="#999" stroke-width="1.2"/><rect x="26" y="28" width="18" height="18" rx="3.5" fill="#5e925e" stroke="#86b086" stroke-width="1"/><path d="M35.0 31.5 V42.5 M29.5 37.0 H40.5" stroke="#fff" stroke-width="3.6"/></svg><svg style="position:absolute;left:16px;top:660px;" width="50" height="48" viewBox="0 0 50 48"><path d="M2 32 L10 6 L40 4 L40 30 Z" fill="#e6e6e6" stroke="#888" stroke-width="1.5"/><path d="M8 14 Q20 10 38 14 M5 24 Q20 20 40 22 M18 6 Q16 20 20 32 M30 5 Q28 18 32 30" stroke="#aaa" fill="none" stroke-width="1.5"/><rect x="28" y="26" width="18" height="18" rx="3.5" fill="#5e925e" stroke="#86b086" stroke-width="1"/><path d="M37.0 29.5 V40.5 M31.5 35.0 H42.5" stroke="#fff" stroke-width="3.6"/></svg><svg style="position:absolute;left:20px;top:726px;" width="48" height="48" viewBox="0 0 48 48"><rect x="1" y="2" width="38" height="30" fill="#7fbde8" stroke="#666" stroke-width="1.5"/><path d="M1 32 V26 Q14 12 39 20 V32 Z" fill="#c8b060"/><rect x="26" y="26" width="18" height="18" rx="3.5" fill="#5e925e" stroke="#86b086" stroke-width="1"/><path d="M35.0 29.5 V40.5 M29.5 35.0 H40.5" stroke="#fff" stroke-width="3.6"/></svg><svg style="position:absolute;left:20px;top:790px;" width="48" height="48" viewBox="0 0 48 48"><rect x="1" y="2" width="38" height="30" fill="#f6f6f6" stroke="#777" stroke-width="1.5"/><text x="20" y="26" font-size="22" text-anchor="middle" font-family="Liberation Serif" fill="#222">T</text><rect x="26" y="26" width="18" height="18" rx="3.5" fill="#5e925e" stroke="#86b086" stroke-width="1"/><path d="M35.0 29.5 V40.5 M29.5 35.0 H40.5" stroke="#fff" stroke-width="3.6"/></svg><div style="position:absolute;left:4px;top:837px;width:74px;height:70px;border:7px solid #e0141e;box-sizing:border-box"></div><svg style="position:absolute;left:18px;top:849px;" width="46" height="48" viewBox="0 0 46 48"><rect x="2" y="2" width="9" height="9" fill="#ffcc00" stroke="#c90" /><rect x="2" y="16" width="9" height="9" fill="#ff4400" stroke="#a30"/><rect x="2" y="30" width="9" height="9" fill="#009944" stroke="#063"/><path d="M14 7 H26 M14 21 H30 M14 35 H22" stroke="#999" stroke-width="3"/><rect x="26" y="28" width="18" height="18" rx="3.5" fill="#5e925e" stroke="#86b086" stroke-width="1"/><path d="M35.0 31.5 V42.5 M29.5 37.0 H40.5" stroke="#fff" stroke-width="3.6"/></svg><svg style="position:absolute;left:18px;top:928px;" width="48" height="48" viewBox="0 0 48 48"><rect x="2" y="2" width="40" height="8" fill="#666"/><rect x="10" y="4" width="8" height="4" fill="#fff"/><rect x="26" y="4" width="8" height="4" fill="#fff"/><rect x="26" y="22" width="18" height="18" rx="3.5" fill="#5e925e" stroke="#86b086" stroke-width="1"/><path d="M35.0 25.5 V36.5 M29.5 31.0 H40.5" stroke="#fff" stroke-width="3.6"/></svg><svg style="position:absolute;left:20px;top:976px;" width="48" height="50" viewBox="0 0 48 50"><path d="M4 44 L18 2 L26 40 Z" fill="#5b7fb0" stroke="#3e5e8a" stroke-width="1.5"/><text x="14" y="30" font-size="13" font-weight="700" fill="#fff" font-family="Liberation Sans">N</text><rect x="26" y="28" width="18" height="18" rx="3.5" fill="#5e925e" stroke="#86b086" stroke-width="1"/><path d="M35.0 31.5 V42.5 M29.5 37.0 H40.5" stroke="#fff" stroke-width="3.6"/></svg><svg style="position:absolute;left:18px;top:1040px;" width="50" height="50" viewBox="0 0 50 50"><rect x="2" y="18" width="30" height="22" fill="#cfe3f6" stroke="#6a8fbf" stroke-width="1.5"/><circle cx="28" cy="24" r="10" fill="#f4a8a8" stroke="#c66" stroke-width="1.5"/><path d="M18 2 L32 26 H4 Z" fill="#bdf0b0" stroke="#6aa860" stroke-width="1.5"/><rect x="26" y="28" width="18" height="18" rx="3.5" fill="#5e925e" stroke="#86b086" stroke-width="1"/><path d="M35.0 31.5 V42.5 M29.5 37.0 H40.5" stroke="#fff" stroke-width="3.6"/><path d="M38 46 H46 L42 50 Z" fill="#333"/></svg><svg style="position:absolute;left:18px;top:1106px;" width="50" height="50" viewBox="0 0 50 50"><path d="M20 2 L26 16 L41 16 L29 25 L34 40 L20 31 L6 40 L11 25 L-1 16 L14 16 Z" fill="#fbe49c" stroke="#e0a850" stroke-width="1.8"/><rect x="28" y="28" width="18" height="18" rx="3.5" fill="#5e925e" stroke="#86b086" stroke-width="1"/><path d="M37.0 31.5 V42.5 M31.5 37.0 H42.5" stroke="#fff" stroke-width="3.6"/></svg><svg style="position:absolute;left:18px;top:1170px;" width="50" height="50" viewBox="0 0 50 50"><path d="M6 40 L38 8" stroke="#333" stroke-width="2.5"/><path d="M26 6 L42 3 L40 20 Z" fill="#fff" stroke="#333" stroke-width="2"/><rect x="2" y="37" width="7" height="7" fill="#333"/><rect x="28" y="28" width="18" height="18" rx="3.5" fill="#5e925e" stroke="#86b086" stroke-width="1"/><path d="M37.0 31.5 V42.5 M31.5 37.0 H42.5" stroke="#fff" stroke-width="3.6"/></svg><svg style="position:absolute;left:16px;top:1230px;" width="52" height="52" viewBox="0 0 52 52"><path d="M6 44 L14 6 L40 18" fill="none" stroke="#111" stroke-width="2.2"/><path d="M6 44 L40 18" stroke="#111" stroke-width="2" stroke-dasharray="2 3"/><circle cx="14" cy="6" r="5" fill="#3a7be0"/><circle cx="40" cy="18" r="5" fill="#3a7be0"/><circle cx="6" cy="44" r="5" fill="#3a7be0"/><rect x="30" y="30" width="18" height="18" rx="3.5" fill="#5e925e" stroke="#86b086" stroke-width="1"/><path d="M39.0 33.5 V44.5 M33.5 39.0 H44.5" stroke="#fff" stroke-width="3.6"/><path d="M40 48 H48 L44 52 Z" fill="#333"/></svg><svg style="position:absolute;left:20px;top:1297px;" width="48" height="50" viewBox="0 0 48 50"><rect x="2" y="2" width="38" height="38" fill="#f6f6f6" stroke="#888" stroke-width="1.5"/><path d="M6 10 H16 M6 16 H14 M6 22 H20 M6 28 H24 M6 34 H16" stroke="#4a78b0" stroke-width="3"/><text x="28" y="18" font-size="14" text-anchor="middle" font-family="Liberation Mono" font-weight="700" fill="#111">&lt;/&gt;</text><rect x="26" y="28" width="18" height="18" rx="3.5" fill="#5e925e" stroke="#86b086" stroke-width="1"/><path d="M35.0 31.5 V42.5 M29.5 37.0 H40.5" stroke="#fff" stroke-width="3.6"/></svg><svg style="position:absolute;left:20px;top:1362px;" width="48" height="50" viewBox="0 0 48 50"><rect x="2" y="2" width="38" height="38" fill="#eef3fa" stroke="#7a98c0" stroke-width="1.5"/><path d="M2 10 H40" stroke="#7a98c0" stroke-width="5"/><path d="M6 18 H18 M22 18 H36 M6 25 H18 M22 25 H36 M6 32 H18 M22 32 H36" stroke="#7a98c0" stroke-width="2.5"/><rect x="26" y="28" width="18" height="18" rx="3.5" fill="#5e925e" stroke="#86b086" stroke-width="1"/><path d="M35.0 31.5 V42.5 M29.5 37.0 H40.5" stroke="#fff" stroke-width="3.6"/></svg><svg style="position:absolute;left:20px;top:1425px;" width="48" height="50" viewBox="0 0 48 50"><rect x="2" y="2" width="38" height="38" fill="#eef3fa" stroke="#7a98c0" stroke-width="1.5"/><path d="M2 10 H40" stroke="#7a98c0" stroke-width="5"/><path d="M6 18 H18 M6 25 H18 M6 32 H14" stroke="#999" stroke-width="2.5"/><path d="M20 34 L36 4" stroke="#333" stroke-width="7"/><path d="M20 34 L36 4" stroke="#f2a92e" stroke-width="4"/><rect x="26" y="28" width="18" height="18" rx="3.5" fill="#5e925e" stroke="#86b086" stroke-width="1"/><path d="M35.0 31.5 V42.5 M29.5 37.0 H40.5" stroke="#fff" stroke-width="3.6"/></svg><svg style="position:absolute;left:20px;top:1490px;" width="48" height="48" viewBox="0 0 48 48"><rect x="2" y="2" width="38" height="38" fill="#eef1ee" stroke="#7a98c0" stroke-width="1.5"/><path d="M2 20 H40 M20 2 V40" stroke="#ccc" stroke-width="1.5"/><path d="M2 34 Q12 20 20 28 Q28 10 36 14 L40 40 H2 Z" fill="#9cc09c"/><path d="M2 34 Q12 20 20 28 Q28 10 36 14 L40 40" fill="none" stroke="#1d5a2a" stroke-width="2.5"/><rect x="26" y="26" width="18" height="18" rx="3.5" fill="#5e925e" stroke="#86b086" stroke-width="1"/><path d="M35.0 29.5 V40.5 M29.5 35.0 H40.5" stroke="#fff" stroke-width="3.6"/></svg><div style="position:absolute;left:422px;top:455.5px;font-size:47.5px;line-height:1;color:#000;font-weight:400;white-space:nowrap;">Map Title</div><svg style="position:absolute;left:408px;top:549px;overflow:hidden" width="1133" height="944" viewBox="0 0 1133 944"><rect x="0" y="0" width="1133" height="944" fill="#aad3df"/><path d="M0.0 0.0 L371.0 0.0 L378.5 16.3 L386.7 44.7 L383.5 60.5 L364.6 65.5 L338.0 71.8 L331.7 76.2 L358.3 78.1 L375.3 72.1 L337.1 128.1 L338.0 133.4 L346.9 151.2 L355.8 168.9 L366.4 176.0 L371.7 183.1 L375.3 193.8 L382.4 200.9 L393.1 208.0 L419.7 232.0 L606.2 294.6 L664.7 293.7 L480.8 481.7 L421.7 480.0 L382.2 489.9 L359.2 506.4 L349.3 521.2 L326.3 526.1 L301.6 528.7 L290.1 536.0 L250.7 595.2 L230.3 614.9 L231.0 845.0 L270.4 892.7 L257.0 911.0 L232.0 949.0 L0.0 949.0 Z" fill="#f2efe9"/><path d="M378.4 61.5 L393.4 61.9 L398.7 69.3 L401.3 80.9 L404.3 88.7 L410.4 97.9 L421.9 109.4 L434.4 120.5 L446.2 129.1 L460.0 130.4 L475.2 127.3 L495.5 116.1 L514.2 106.9 L530.0 101.2 L546.8 106.4 L559.5 106.4 L568.4 111.1 L598.6 98.1 L607.8 92.6 L633.5 81.8 L647.0 86.6 L677.3 80.6 L704.6 72.2 L723.4 77.0 L761.5 66.5 L788.2 58.5 L816.5 49.1 L826.4 35.0 L843.6 31.1 L881.8 43.3 L882.6 62.3 L873.9 78.0 L875.8 95.2 L877.8 102.3 L875.1 112.4 L877.3 128.4 L893.0 136.6 L888.9 151.8 L875.0 148.6 L862.8 154.7 L859.9 177.6 L856.5 203.1 L848.3 220.0 L842.0 236.3 L826.5 255.8 L820.5 267.8 L813.6 276.0 L796.2 301.3 L791.2 325.8 L763.1 366.3 L748.4 395.6 L731.0 439.8 L699.0 481.4 L667.0 529.6 L628.7 574.1 L587.0 619.1 L553.4 649.8 L516.6 673.3 L487.0 686.5 L454.3 709.4 L428.9 735.1 L396.5 757.6 L373.6 783.7 L344.6 816.1 L318.3 848.8 L298.8 871.6 L279.1 899.4" fill="none" stroke="#a7a2c6" stroke-width="1.1" stroke-dasharray="4 2" opacity="0.8"/><path d="M1002.7 -0.1 L1077.7 -0.1 L1074.1 12.4 L1042.0 23.1 L1013.4 19.6 L1004.5 8.9 Z" fill="#f2efe9"/><path d="M399.1 -0.1 L463.4 -0.1 L445.6 5.3 L413.4 7.1 Z" fill="#f2efe9"/><clipPath id="landclip"><path d="M0.0 0.0 L371.0 0.0 L378.5 16.3 L386.7 44.7 L383.5 60.5 L364.6 65.5 L338.0 71.8 L331.7 76.2 L358.3 78.1 L375.3 72.1 L337.1 128.1 L338.0 133.4 L346.9 151.2 L355.8 168.9 L366.4 176.0 L371.7 183.1 L375.3 193.8 L382.4 200.9 L393.1 208.0 L419.7 232.0 L606.2 294.6 L664.7 293.7 L480.8 481.7 L421.7 480.0 L382.2 489.9 L359.2 506.4 L349.3 521.2 L326.3 526.1 L301.6 528.7 L290.1 536.0 L250.7 595.2 L230.3 614.9 L231.0 845.0 L270.4 892.7 L257.0 911.0 L232.0 949.0 L0.0 949.0 Z"/></clipPath><g clip-path="url(#landclip)"><path d="M130.4 142.4 L128.8 135.7 L126.7 120.7 L123.6 114.6" fill="none" stroke="#c9b8cf" stroke-width="0.8" opacity="0.6"/><path d="M42.4 85.6 L37.4 92.2 L26.3 103.0 L18.6 109.3 L12.2 110.0 L3.7 107.2 L-3.4 107.9 L-16.8 112.6" fill="none" stroke="#a9cde0" stroke-width="0.8" opacity="0.6"/><path d="M53.1 539.2 L55.3 545.5 L61.4 550.7 L67.6 558.9" fill="none" stroke="#a9cde0" stroke-width="0.8" opacity="0.6"/><path d="M187.0 871.7 L175.7 878.1 L167.7 886.8 L157.4 897.3 L149.7 901.7" fill="none" stroke="#e9b394" stroke-width="0.8" opacity="0.6"/><path d="M58.1 394.7 L63.5 386.1 L69.6 383.1 L82.5 377.9 L91.9 377.9" fill="none" stroke="#a9cde0" stroke-width="0.8" opacity="0.6"/><path d="M245.3 547.4 L234.9 544.7 L229.0 541.8 L219.5 533.8" fill="none" stroke="#cfcfcf" stroke-width="0.8" opacity="0.6"/><path d="M378.5 268.7 L368.9 280.7 L363.2 291.4 L359.3 298.6 L356.2 311.6 L354.6 326.7 L353.7 334.3 L353.8 343.1 L358.3 352.4" fill="none" stroke="#d8d0c4" stroke-width="0.8" opacity="0.6"/><path d="M113.6 392.0 L106.5 394.5 L100.3 400.1 L94.9 409.5 L89.8 416.4 L89.4 426.6 L90.8 438.2" fill="none" stroke="#a9cde0" stroke-width="0.8" opacity="0.6"/><path d="M295.3 486.6 L289.8 477.6 L288.2 462.1 L289.6 450.6 L289.6 440.7 L289.3 430.7 L283.1 416.1 L279.9 409.7 L277.5 403.1" fill="none" stroke="#d8d0c4" stroke-width="0.8" opacity="0.6"/><path d="M69.1 95.8 L67.5 103.7 L66.9 116.0 L60.2 126.0" fill="none" stroke="#c9b8cf" stroke-width="0.8" opacity="0.6"/><path d="M59.6 801.4 L68.7 800.8 L80.6 794.4 L91.2 792.2 L102.3 792.5 L117.0 787.4 L128.4 781.3" fill="none" stroke="#e9b394" stroke-width="0.8" opacity="0.6"/><path d="M335.2 281.4 L331.6 273.6 L327.3 267.3 L324.3 256.3" fill="none" stroke="#d8d0c4" stroke-width="0.8" opacity="0.6"/><path d="M132.6 210.6 L142.4 200.2 L149.5 196.0 L157.8 191.4 L160.8 185.9" fill="none" stroke="#a9cde0" stroke-width="0.8" opacity="0.6"/><path d="M189.8 182.8 L177.1 174.2 L171.2 159.8 L166.9 152.8 L160.8 147.7 L149.3 143.6" fill="none" stroke="#d8d0c4" stroke-width="0.8" opacity="0.6"/><path d="M392.5 452.6 L381.2 447.0 L373.2 435.7 L369.8 425.5 L360.9 414.9 L349.9 406.2 L346.6 396.8 L339.8 382.9 L338.4 375.3" fill="none" stroke="#a9cde0" stroke-width="0.8" opacity="0.6"/><path d="M26.6 557.7 L15.1 566.3 L2.6 567.1 L-8.6 569.9 L-13.3 573.8 L-25.7 575.3 L-41.0 576.7 L-55.5 579.2 L-63.4 577.5" fill="none" stroke="#a9cde0" stroke-width="0.8" opacity="0.6"/><path d="M90.2 473.1 L88.1 463.1 L79.0 451.1 L71.3 443.8 L61.4 432.5 L50.3 422.2" fill="none" stroke="#d8d0c4" stroke-width="0.8" opacity="0.6"/><path d="M62.3 143.3 L51.1 138.6 L45.5 133.7 L33.9 130.1 L27.3 131.1 L16.1 130.4 L2.3 129.8" fill="none" stroke="#d8d0c4" stroke-width="0.8" opacity="0.6"/><path d="M38.1 180.6 L49.3 183.7 L61.9 192.1 L72.5 198.1" fill="none" stroke="#d8d0c4" stroke-width="0.8" opacity="0.6"/><path d="M251.1 188.2 L248.8 198.8 L240.1 208.4 L225.7 214.1 L216.6 221.2 L202.4 223.2 L196.3 227.1 L190.9 231.1" fill="none" stroke="#a9cde0" stroke-width="0.8" opacity="0.6"/><path d="M171.5 200.8 L166.0 206.0 L155.0 212.1 L146.1 224.0" fill="none" stroke="#c9b8cf" stroke-width="0.8" opacity="0.6"/><path d="M92.6 899.2 L86.2 910.1 L83.7 922.9 L76.5 930.0 L70.4 937.4 L68.5 946.8 L68.4 957.4" fill="none" stroke="#cfcfcf" stroke-width="0.8" opacity="0.6"/><path d="M21.5 312.9 L19.8 306.0 L22.0 298.0 L26.5 292.8 L32.9 279.2 L33.7 265.7 L39.9 252.6 L49.3 240.3" fill="none" stroke="#c9b8cf" stroke-width="0.8" opacity="0.6"/><path d="M68.5 867.7 L59.9 865.6 L53.4 861.2 L49.3 853.6 L43.2 850.4 L31.4 848.0 L22.8 849.1 L17.7 852.5 L7.5 852.4" fill="none" stroke="#a9cde0" stroke-width="0.8" opacity="0.6"/><path d="M258.9 40.8 L261.5 32.6 L260.3 17.3 L261.3 6.0" fill="none" stroke="#a9cde0" stroke-width="0.8" opacity="0.6"/><path d="M117.8 472.1 L119.2 488.0 L123.0 492.9 L132.4 505.6 L137.3 512.5 L145.2 522.2" fill="none" stroke="#cfcfcf" stroke-width="0.8" opacity="0.6"/><path d="M173.0 467.3 L181.1 463.1 L186.8 457.1 L192.5 443.4 L197.0 437.6 L212.1 432.7 L218.2 433.2" fill="none" stroke="#cfcfcf" stroke-width="0.8" opacity="0.6"/><path d="M324.6 241.3 L327.9 250.5 L333.1 265.3 L336.0 277.9" fill="none" stroke="#e9b394" stroke-width="0.8" opacity="0.6"/><path d="M184.4 148.7 L176.3 153.2 L167.1 152.5 L153.9 159.3 L148.6 165.0 L145.0 170.9" fill="none" stroke="#a9cde0" stroke-width="0.8" opacity="0.6"/><path d="M203.0 189.7 L190.3 196.0 L182.9 205.2 L178.1 212.9" fill="none" stroke="#cfcfcf" stroke-width="0.8" opacity="0.6"/><path d="M97.2 552.8 L85.0 548.0 L78.3 540.7 L65.4 531.5 L52.4 528.9" fill="none" stroke="#cfcfcf" stroke-width="0.8" opacity="0.6"/><path d="M66.9 778.7 L66.0 765.4 L68.3 758.3 L71.9 747.9 L81.4 737.5 L92.1 732.4 L104.9 732.8 L112.9 735.0" fill="none" stroke="#e9b394" stroke-width="0.8" opacity="0.6"/><path d="M32.7 601.4 L44.2 603.2 L55.9 606.8 L65.4 612.2 L79.3 611.1 L90.1 613.5 L102.2 616.8" fill="none" stroke="#e9b394" stroke-width="0.8" opacity="0.6"/><path d="M327.5 447.3 L328.3 433.8 L324.9 421.7 L320.4 408.0 L309.3 397.7 L303.6 394.7" fill="none" stroke="#cfcfcf" stroke-width="0.8" opacity="0.6"/><path d="M269.6 73.1 L275.4 84.7 L277.7 91.7 L281.3 101.9 L279.7 108.7 L280.9 119.6" fill="none" stroke="#cfcfcf" stroke-width="0.8" opacity="0.6"/><path d="M209.1 438.6 L198.5 434.4 L191.7 433.3 L182.9 432.2" fill="none" stroke="#e9b394" stroke-width="0.8" opacity="0.6"/><path d="M377.0 913.9 L363.4 920.5 L356.7 920.1 L344.4 925.7 L337.1 932.0 L326.9 938.9" fill="none" stroke="#a9cde0" stroke-width="0.8" opacity="0.6"/><path d="M431.6 664.0 L433.4 671.3 L429.7 683.6 L427.3 696.6 L426.5 706.4 L429.9 715.0 L435.0 722.9" fill="none" stroke="#c9b8cf" stroke-width="0.8" opacity="0.6"/><path d="M58.7 874.5 L54.2 865.9 L45.0 852.8 L40.3 844.4 L35.4 837.2 L29.1 834.2 L23.1 827.6 L21.4 819.3 L16.1 809.5" fill="none" stroke="#a9cde0" stroke-width="0.8" opacity="0.6"/><path d="M344.9 741.2 L332.6 742.2 L318.5 735.9 L306.8 729.9" fill="none" stroke="#e9b394" stroke-width="0.8" opacity="0.6"/><path d="M480.2 387.9 L474.6 381.0 L460.3 375.7 L449.6 376.7 L441.0 379.2" fill="none" stroke="#cfcfcf" stroke-width="0.8" opacity="0.6"/><path d="M323.3 616.3 L315.4 624.8 L311.0 631.1 L309.3 639.0 L302.3 647.4" fill="none" stroke="#a9cde0" stroke-width="0.8" opacity="0.6"/><path d="M181.7 314.2 L178.8 306.8 L171.6 300.7 L163.4 298.9 L151.8 299.8 L139.3 294.7 L129.5 291.8" fill="none" stroke="#d8d0c4" stroke-width="0.8" opacity="0.6"/><path d="M89.2 255.1 L85.3 239.9 L78.2 231.5 L70.5 219.0 L63.8 213.5 L54.5 209.8 L39.7 205.0" fill="none" stroke="#e9b394" stroke-width="0.8" opacity="0.6"/><path d="M61.1 401.4 L67.7 392.7 L69.7 377.5 L76.6 368.6 L82.6 360.0 L89.3 355.2 L97.3 341.6" fill="none" stroke="#e9b394" stroke-width="0.8" opacity="0.6"/><path d="M490.1 681.3 L477.6 675.6 L470.4 676.8 L464.1 677.4 L448.7 674.7 L438.0 671.2 L424.8 667.8" fill="none" stroke="#e9b394" stroke-width="0.8" opacity="0.6"/><path d="M42.5 495.1 L29.0 491.8 L18.4 495.9 L9.8 493.9 L-4.6 493.7 L-15.3 497.1 L-21.5 498.6" fill="none" stroke="#c9b8cf" stroke-width="0.8" opacity="0.6"/><path d="M303.2 290.2 L313.5 297.2 L321.8 298.0 L331.5 298.1 L344.4 298.0 L353.7 300.5 L359.8 301.3" fill="none" stroke="#a9cde0" stroke-width="0.8" opacity="0.6"/><path d="M323.5 476.6 L330.4 489.0 L336.5 494.6 L340.9 502.3 L340.6 513.3" fill="none" stroke="#a9cde0" stroke-width="0.8" opacity="0.6"/><path d="M440.6 457.9 L448.1 457.7 L456.1 456.5 L462.9 459.5" fill="none" stroke="#e9b394" stroke-width="0.8" opacity="0.6"/><path d="M306.2 173.8 L293.0 171.9 L281.7 161.5 L275.0 157.5 L268.4 145.8 L257.3 139.8 L248.1 136.4 L240.5 135.3 L232.6 139.1" fill="none" stroke="#a9cde0" stroke-width="0.8" opacity="0.6"/><path d="M168.1 835.6 L154.8 832.3 L140.8 832.2 L129.3 838.3 L121.7 846.8" fill="none" stroke="#c9b8cf" stroke-width="0.8" opacity="0.6"/><path d="M83.3 343.9 L90.8 339.9 L100.3 336.5 L109.7 331.5" fill="none" stroke="#e9b394" stroke-width="0.8" opacity="0.6"/><path d="M105.9 705.4 L112.4 698.7 L118.6 697.1 L131.5 697.6 L139.1 702.2 L147.3 710.9" fill="none" stroke="#cfcfcf" stroke-width="0.8" opacity="0.6"/><path d="M496.7 61.7 L503.4 47.6 L511.7 42.2 L518.2 34.3" fill="none" stroke="#c9b8cf" stroke-width="0.8" opacity="0.6"/><path d="M62.9 468.7 L75.6 466.4 L82.5 461.7 L93.0 459.9 L104.8 462.0 L114.5 463.9 L124.3 461.7 L135.1 461.2 L142.7 461.3" fill="none" stroke="#c9b8cf" stroke-width="0.8" opacity="0.6"/><path d="M428.5 932.5 L431.1 942.4 L426.0 957.3 L426.4 964.6" fill="none" stroke="#c9b8cf" stroke-width="0.8" opacity="0.6"/><path d="M258.2 636.4 L262.2 623.2 L262.7 614.4 L260.7 606.1 L255.6 597.0 L249.1 591.8 L235.3 585.7 L228.7 585.4 L220.5 587.5" fill="none" stroke="#d8d0c4" stroke-width="0.8" opacity="0.6"/><path d="M96.7 763.2 L87.2 758.1 L77.9 747.1 L76.6 740.9" fill="none" stroke="#a9cde0" stroke-width="0.8" opacity="0.6"/><path d="M97.3 47.6 L90.7 45.8 L83.3 43.7 L70.6 38.3 L65.6 34.8 L56.2 25.8 L50.9 22.2 L44.9 19.8" fill="none" stroke="#a9cde0" stroke-width="0.8" opacity="0.6"/><path d="M31.3 691.2 L41.3 689.6 L52.9 685.9 L57.2 681.3" fill="none" stroke="#c9b8cf" stroke-width="0.8" opacity="0.6"/><path d="M223.4 59.7 L228.5 65.3 L236.5 74.9 L242.9 80.9 L245.8 93.2 L247.9 99.4 L248.5 114.2" fill="none" stroke="#c9b8cf" stroke-width="0.8" opacity="0.6"/><path d="M166.6 815.8 L176.4 817.3 L191.8 817.9 L199.4 817.6 L205.4 814.3 L214.3 810.4" fill="none" stroke="#a9cde0" stroke-width="0.8" opacity="0.6"/><path d="M62.0 48.8 L73.2 53.6 L84.0 56.3 L92.6 54.7 L107.7 52.4 L116.6 46.1 L131.7 42.1" fill="none" stroke="#a9cde0" stroke-width="0.8" opacity="0.6"/><path d="M122.1 790.4 L134.2 791.0 L140.9 792.5 L152.4 798.3 L159.7 808.3 L162.2 820.3 L162.7 828.2" fill="none" stroke="#c9b8cf" stroke-width="0.8" opacity="0.6"/><path d="M79.9 205.9 L75.0 214.2 L73.3 229.8 L69.6 236.8 L57.9 245.2 L46.3 250.4 L38.3 256.2 L27.1 265.3" fill="none" stroke="#a9cde0" stroke-width="0.8" opacity="0.6"/><path d="M272.9 291.0 L271.0 301.2 L270.3 307.4 L267.5 318.0 L268.4 331.6 L265.5 341.8 L266.7 352.4" fill="none" stroke="#e9b394" stroke-width="0.8" opacity="0.6"/><path d="M41.5 338.5 L33.1 347.9 L31.8 355.1 L26.0 362.1 L20.5 366.1 L6.3 370.8 L-7.4 372.6" fill="none" stroke="#e9b394" stroke-width="0.8" opacity="0.6"/><path d="M405.7 940.3 L398.4 926.3 L391.1 912.6 L391.2 904.9" fill="none" stroke="#cfcfcf" stroke-width="0.8" opacity="0.6"/><path d="M476.7 61.8 L473.4 76.4 L474.0 90.6 L479.1 100.4 L478.8 108.5 L481.6 119.2" fill="none" stroke="#a9cde0" stroke-width="0.8" opacity="0.6"/><path d="M149.0 187.8 L136.3 188.9 L129.2 185.9 L123.9 181.1 L115.0 172.5 L102.8 164.2 L93.6 156.9 L90.6 150.5 L92.4 138.4" fill="none" stroke="#c9b8cf" stroke-width="0.8" opacity="0.6"/><path d="M322.8 350.7 L315.3 356.8 L305.6 360.5 L295.9 369.8 L292.1 383.5 L292.4 395.8" fill="none" stroke="#d8d0c4" stroke-width="0.8" opacity="0.6"/><path d="M474.3 845.6 L469.6 839.7 L464.4 830.7 L457.1 817.7 L450.4 812.9 L446.0 808.4 L436.7 806.5 L427.5 809.0 L417.7 815.7" fill="none" stroke="#d8d0c4" stroke-width="0.8" opacity="0.6"/><path d="M63.2 345.7 L64.1 330.4 L62.2 323.1 L53.9 314.0 L49.9 300.7" fill="none" stroke="#c9b8cf" stroke-width="0.8" opacity="0.6"/><path d="M371.0 913.0 L379.1 921.7 L386.4 931.3 L392.9 940.1 L398.0 943.2 L404.3 943.3 L411.4 940.5 L418.4 941.4" fill="none" stroke="#d8d0c4" stroke-width="0.8" opacity="0.6"/><path d="M224.7 888.2 L232.3 898.1 L237.0 907.1 L240.7 917.5 L250.0 925.5" fill="none" stroke="#cfcfcf" stroke-width="0.8" opacity="0.6"/><path d="M351.3 675.3 L361.4 678.8 L369.9 685.0 L376.7 687.0 L383.1 686.9 L396.2 683.9 L410.7 684.0" fill="none" stroke="#cfcfcf" stroke-width="0.8" opacity="0.6"/><path d="M36.7 600.3 L35.6 589.1 L31.0 577.5 L32.4 569.5 L36.0 564.5 L38.9 556.7 L48.1 544.3 L55.6 538.8 L64.7 537.1" fill="none" stroke="#a9cde0" stroke-width="0.8" opacity="0.6"/><path d="M151.8 804.2 L163.2 803.3 L174.4 802.0 L179.2 797.9 L187.4 796.6 L200.7 800.7 L212.3 802.7 L219.8 804.6 L226.6 802.4" fill="none" stroke="#d8d0c4" stroke-width="0.8" opacity="0.6"/><path d="M474.8 325.6 L481.8 327.9 L487.5 331.0 L493.9 330.9" fill="none" stroke="#d8d0c4" stroke-width="0.8" opacity="0.6"/><path d="M337.5 188.2 L344.1 189.4 L356.4 198.2 L359.2 204.7 L364.1 209.8 L378.2 213.4 L388.2 220.6 L394.7 231.0" fill="none" stroke="#a9cde0" stroke-width="0.8" opacity="0.6"/><path d="M191.9 125.2 L191.1 116.1 L190.0 110.0 L185.9 102.1 L183.9 92.7 L177.3 78.4 L171.3 65.2 L169.6 59.2 L165.7 49.6" fill="none" stroke="#e9b394" stroke-width="0.8" opacity="0.6"/><path d="M139.2 665.2 L126.6 658.4 L119.2 653.5 L109.4 648.1 L96.3 644.7" fill="none" stroke="#e9b394" stroke-width="0.8" opacity="0.6"/><path d="M10.6 463.3 L0.1 457.5 L-5.4 447.8 L-8.5 440.9 L-9.1 425.5" fill="none" stroke="#a9cde0" stroke-width="0.8" opacity="0.6"/><path d="M201.1 103.8 L190.5 91.9 L186.3 86.3 L181.0 81.7" fill="none" stroke="#c9b8cf" stroke-width="0.8" opacity="0.6"/><path d="M436.2 703.5 L432.3 710.5 L428.9 725.1 L426.6 734.7 L421.3 741.1 L414.6 750.2 L403.6 758.1 L395.0 762.2 L389.0 766.8" fill="none" stroke="#c9b8cf" stroke-width="0.8" opacity="0.6"/><path d="M279.8 700.4 L282.1 708.7 L287.4 716.4 L292.8 728.2 L296.4 736.1 L298.0 750.3 L297.7 763.5" fill="none" stroke="#a9cde0" stroke-width="0.8" opacity="0.6"/><path d="M314.0 569.1 L310.8 576.4 L299.7 583.7 L292.2 597.4 L291.9 607.2" fill="none" stroke="#a9cde0" stroke-width="0.8" opacity="0.6"/><path d="M359.4 692.2 L349.7 703.9 L343.5 717.4 L341.2 723.0 L333.7 730.2" fill="none" stroke="#a9cde0" stroke-width="0.8" opacity="0.6"/><path d="M202.0 597.0 L190.4 603.6 L186.7 611.2 L176.7 619.5 L166.3 626.4" fill="none" stroke="#a9cde0" stroke-width="0.8" opacity="0.6"/><path d="M282.9 615.9 L295.4 608.6 L307.2 604.8 L315.8 601.5 L322.6 600.0 L335.7 595.8 L348.0 595.1 L357.6 591.5 L368.8 586.7" fill="none" stroke="#c9b8cf" stroke-width="0.8" opacity="0.6"/><path d="M209.9 624.1 L213.2 618.9 L225.6 610.3 L229.6 602.8 L231.6 589.8 L236.7 583.7 L243.8 571.1 L247.4 563.9 L250.0 558.3" fill="none" stroke="#a9cde0" stroke-width="0.8" opacity="0.6"/><path d="M211.4 387.4 L219.0 389.4 L233.7 393.6 L244.1 400.0 L250.5 405.6" fill="none" stroke="#c9b8cf" stroke-width="0.8" opacity="0.6"/><path d="M159.9 12.6 L147.9 17.0 L141.1 18.9 L132.3 23.6 L116.6 22.9 L104.1 13.6 L97.7 9.3" fill="none" stroke="#e9b394" stroke-width="0.8" opacity="0.6"/><path d="M369.6 598.8 L355.5 597.8 L343.6 602.2 L329.7 601.6 L313.7 602.5 L301.6 599.4 L292.7 593.5 L287.7 586.9" fill="none" stroke="#cfcfcf" stroke-width="0.8" opacity="0.6"/><path d="M150.6 239.4 L138.1 245.9 L128.6 247.1 L119.4 246.6 L107.2 246.1" fill="none" stroke="#e9b394" stroke-width="0.8" opacity="0.6"/><path d="M278.3 342.1 L286.2 330.3 L298.4 323.7 L307.1 312.3 L311.5 308.1 L314.9 292.9 L318.3 285.1" fill="none" stroke="#e9b394" stroke-width="0.8" opacity="0.6"/><path d="M237.7 806.3 L241.9 812.6 L243.3 826.4 L250.5 839.5 L255.5 852.4 L258.0 867.1 L255.5 881.3" fill="none" stroke="#a9cde0" stroke-width="0.8" opacity="0.6"/><path d="M199.4 201.2 L204.9 205.8 L214.8 208.2 L223.4 214.6 L231.7 221.6 L236.5 233.7 L241.4 239.6" fill="none" stroke="#d8d0c4" stroke-width="0.8" opacity="0.6"/><path d="M410.5 6.2 L418.4 -1.4 L424.1 -10.4 L431.4 -24.6 L436.3 -30.7 L442.5 -41.5 L442.1 -48.0" fill="none" stroke="#cfcfcf" stroke-width="0.8" opacity="0.6"/><path d="M477.8 312.0 L491.3 310.1 L498.1 305.8 L503.9 301.3 L509.0 289.9 L512.2 276.4 L516.6 262.0 L517.0 252.6" fill="none" stroke="#a9cde0" stroke-width="0.8" opacity="0.6"/><path d="M226.2 780.4 L224.5 791.3 L225.8 802.3 L220.4 813.6 L213.7 820.1 L208.7 827.6 L200.9 837.2" fill="none" stroke="#e9b394" stroke-width="0.8" opacity="0.6"/><path d="M159.6 523.3 L155.7 531.4 L156.9 539.2 L152.7 550.5 L145.6 562.4 L135.1 568.6 L123.8 573.4 L112.0 575.3" fill="none" stroke="#cfcfcf" stroke-width="0.8" opacity="0.6"/><path d="M46.6 37.3 L43.8 30.8 L39.2 26.4 L32.3 12.9 L29.6 3.6 L31.1 -10.2 L32.6 -18.6 L32.0 -28.8 L29.2 -38.8" fill="none" stroke="#cfcfcf" stroke-width="0.8" opacity="0.6"/><path d="M237.6 862.7 L231.5 866.5 L220.0 868.8 L210.0 865.6 L200.5 868.3 L185.3 870.8 L175.5 866.5 L168.8 864.4" fill="none" stroke="#cfcfcf" stroke-width="0.8" opacity="0.6"/><path d="M189.8 845.6 L177.2 843.0 L162.1 846.9 L151.3 856.9 L149.0 862.6 L143.9 869.4 L137.6 874.1" fill="none" stroke="#e9b394" stroke-width="0.8" opacity="0.6"/><path d="M146.5 705.4 L146.1 698.6 L147.1 685.5 L147.7 670.2 L143.7 655.1" fill="none" stroke="#cfcfcf" stroke-width="0.8" opacity="0.6"/><path d="M28.6 57.2 L35.0 54.8 L46.1 47.5 L54.3 35.4 L57.8 29.9 L62.6 19.1 L66.9 7.1 L65.7 -6.8 L62.6 -18.9" fill="none" stroke="#cfcfcf" stroke-width="0.8" opacity="0.6"/><path d="M364.2 450.3 L373.2 439.8 L379.5 433.5 L383.6 418.3 L390.6 405.8 L394.2 394.3 L405.2 385.2" fill="none" stroke="#d8d0c4" stroke-width="0.8" opacity="0.6"/><path d="M386.5 551.9 L398.8 548.2 L413.5 545.6 L422.2 547.3 L430.1 543.9" fill="none" stroke="#c9b8cf" stroke-width="0.8" opacity="0.6"/><path d="M71.1 869.0 L69.9 861.7 L74.6 846.5 L72.6 830.9" fill="none" stroke="#d8d0c4" stroke-width="0.8" opacity="0.6"/><path d="M292.0 862.6 L285.4 871.2 L278.6 883.3 L267.4 894.5" fill="none" stroke="#a9cde0" stroke-width="0.8" opacity="0.6"/><path d="M251.5 639.7 L240.1 636.3 L230.7 639.2 L219.7 641.9 L213.6 644.6" fill="none" stroke="#c9b8cf" stroke-width="0.8" opacity="0.6"/><path d="M238.2 846.7 L244.8 837.8 L247.0 830.0 L244.0 816.2 L238.7 805.7 L230.5 794.6 L228.8 786.3 L232.0 775.9" fill="none" stroke="#e9b394" stroke-width="0.8" opacity="0.6"/><path d="M148.8 437.5 L156.4 443.1 L161.4 446.8 L177.2 448.3 L186.5 453.8 L193.6 458.8" fill="none" stroke="#a9cde0" stroke-width="0.8" opacity="0.6"/><path d="M170.5 893.5 L175.8 886.8 L176.6 878.8 L174.8 872.2 L166.4 864.3 L162.6 854.4 L165.1 839.5 L161.0 828.3" fill="none" stroke="#c9b8cf" stroke-width="0.8" opacity="0.6"/><path d="M467.1 666.8 L477.0 674.3 L481.8 686.0 L486.9 695.2 L499.3 704.7 L501.9 712.5" fill="none" stroke="#e9b394" stroke-width="0.8" opacity="0.6"/><path d="M490.4 888.5 L499.8 899.3 L513.0 903.6 L523.5 910.3 L526.2 916.3 L536.4 925.2 L540.4 937.4 L546.7 947.4" fill="none" stroke="#cfcfcf" stroke-width="0.8" opacity="0.6"/><path d="M53.9 305.8 L54.9 315.5 L57.4 329.4 L52.7 343.5" fill="none" stroke="#c9b8cf" stroke-width="0.8" opacity="0.6"/><path d="M310.5 184.2 L322.2 180.8 L334.4 175.1 L349.9 173.6 L359.0 177.6" fill="none" stroke="#e9b394" stroke-width="0.8" opacity="0.6"/><path d="M262.2 427.0 L256.0 437.6 L255.1 445.7 L260.5 457.7 L263.1 464.7" fill="none" stroke="#a9cde0" stroke-width="0.8" opacity="0.6"/><path d="M109.2 388.7 L113.6 396.6 L114.8 405.1 L120.9 413.7 L125.3 419.8 L132.5 429.8" fill="none" stroke="#cfcfcf" stroke-width="0.8" opacity="0.6"/><path d="M470.6 528.6 L472.5 520.8 L473.8 505.0 L483.4 493.1" fill="none" stroke="#e9b394" stroke-width="0.8" opacity="0.6"/><path d="M156.1 392.4 L155.9 399.8 L153.9 410.0 L151.7 420.9 L149.9 434.7 L144.5 441.7 L141.4 447.3 L138.1 455.4 L138.1 469.9" fill="none" stroke="#d8d0c4" stroke-width="0.8" opacity="0.6"/><path d="M343.1 671.8 L342.2 686.6 L337.7 699.5 L338.1 706.8" fill="none" stroke="#cfcfcf" stroke-width="0.8" opacity="0.6"/><path d="M305.0 766.1 L292.1 767.0 L277.7 767.6 L267.7 762.7 L259.2 760.3" fill="none" stroke="#cfcfcf" stroke-width="0.8" opacity="0.6"/><path d="M411.9 465.4 L423.8 461.2 L433.1 454.2 L439.5 453.8 L451.0 455.9 L458.9 461.4 L465.6 475.5" fill="none" stroke="#e9b394" stroke-width="0.8" opacity="0.6"/><path d="M58.9 674.6 L69.0 663.9 L80.2 653.9 L84.1 648.0 L92.2 641.3 L96.3 627.9" fill="none" stroke="#a9cde0" stroke-width="0.8" opacity="0.6"/><path d="M23.0 913.3 L27.9 921.0 L35.3 934.6 L48.7 941.9 L54.8 948.0" fill="none" stroke="#d8d0c4" stroke-width="0.8" opacity="0.6"/><path d="M266.6 438.0 L274.2 450.5 L276.1 456.7 L283.5 464.7 L289.4 471.2 L298.8 474.9 L310.7 474.2" fill="none" stroke="#a9cde0" stroke-width="0.8" opacity="0.6"/><path d="M67.8 540.8 L70.8 535.4 L78.9 525.3 L87.5 516.9 L91.2 501.6" fill="none" stroke="#e9b394" stroke-width="0.8" opacity="0.6"/><path d="M347.3 319.6 L344.5 333.7 L340.2 349.0 L339.6 359.0 L338.3 368.2 L342.0 380.4" fill="none" stroke="#a9cde0" stroke-width="0.8" opacity="0.6"/><path d="M103.1 398.5 L95.7 395.7 L87.8 394.5 L80.1 391.6 L70.4 389.0 L63.6 381.0" fill="none" stroke="#e9b394" stroke-width="0.8" opacity="0.6"/><path d="M369.4 834.8 L381.1 831.4 L393.0 834.0 L406.2 839.1" fill="none" stroke="#e9b394" stroke-width="0.8" opacity="0.6"/><path d="M258.6 236.5 L252.4 237.7 L244.8 243.5 L241.6 249.2 L228.2 256.6 L221.4 256.7 L206.1 255.3" fill="none" stroke="#c9b8cf" stroke-width="0.8" opacity="0.6"/><path d="M60.0 124.0 L56.9 132.2 L48.7 142.8 L44.7 152.6 L39.9 159.2 L34.4 169.3 L29.6 183.4" fill="none" stroke="#a9cde0" stroke-width="0.8" opacity="0.6"/><path d="M254.4 442.7 L253.0 450.5 L249.3 465.7 L247.6 480.9 L252.1 495.7" fill="none" stroke="#a9cde0" stroke-width="0.8" opacity="0.6"/><path d="M227.4 463.9 L227.8 477.6 L230.6 483.6 L230.5 494.0 L235.4 502.6" fill="none" stroke="#c9b8cf" stroke-width="0.8" opacity="0.6"/><path d="M142.0 720.1 L135.1 717.1 L125.8 715.0 L114.8 709.9 L105.4 699.2 L96.8 688.9 L91.5 676.4 L85.6 663.8 L82.8 649.0" fill="none" stroke="#a9cde0" stroke-width="0.8" opacity="0.6"/><path d="M165.2 97.6 L155.4 102.4 L143.7 101.3 L129.9 101.4 L119.0 96.2 L108.9 93.1 L96.1 89.8 L86.2 89.8" fill="none" stroke="#d8d0c4" stroke-width="0.8" opacity="0.6"/><path d="M245.8 611.9 L255.7 616.8 L262.9 619.8 L270.3 621.0 L281.7 623.9 L296.5 620.3 L309.4 613.9 L325.0 613.1 L334.4 609.1" fill="none" stroke="#e9b394" stroke-width="0.8" opacity="0.6"/><path d="M25.6 242.2 L39.2 240.1 L55.1 238.5 L66.2 237.6 L76.0 238.9 L87.9 238.6" fill="none" stroke="#a9cde0" stroke-width="0.8" opacity="0.6"/><path d="M181.7 9.8 L191.4 9.3 L202.9 7.3 L217.6 6.1 L227.3 11.1" fill="none" stroke="#c9b8cf" stroke-width="0.8" opacity="0.6"/><path d="M341.1 848.8 L329.3 841.0 L320.3 839.2 L310.0 829.4 L304.9 824.4 L300.9 812.1 L301.9 796.3 L307.1 787.5 L308.2 778.6" fill="none" stroke="#d8d0c4" stroke-width="0.8" opacity="0.6"/><path d="M88.5 843.1 L77.3 847.8 L63.9 856.4 L58.0 858.9" fill="none" stroke="#c9b8cf" stroke-width="0.8" opacity="0.6"/><path d="M16.6 2.6 L9.8 -3.4 L4.9 -14.2 L3.0 -21.9 L0.4 -33.1 L-5.8 -44.0 L-13.1 -58.2 L-16.9 -67.6" fill="none" stroke="#e9b394" stroke-width="0.8" opacity="0.6"/><path d="M67.1 489.4 L60.1 492.5 L46.9 498.0 L33.3 501.6" fill="none" stroke="#e9b394" stroke-width="0.8" opacity="0.6"/><path d="M273.4 646.2 L266.5 639.7 L258.4 636.7 L243.4 638.5 L234.0 638.8" fill="none" stroke="#c9b8cf" stroke-width="0.8" opacity="0.6"/><path d="M260.0 18.5 L261.4 34.0 L263.4 46.0 L266.2 51.8 L265.4 66.3 L267.9 81.1 L266.0 89.9" fill="none" stroke="#d8d0c4" stroke-width="0.8" opacity="0.6"/><path d="M104.0 837.2 L113.0 833.0 L121.1 831.5 L134.7 825.7" fill="none" stroke="#c9b8cf" stroke-width="0.8" opacity="0.6"/><path d="M24.0 819.6 L31.3 822.5 L36.5 829.7 L40.2 835.8 L45.0 844.4" fill="none" stroke="#c9b8cf" stroke-width="0.8" opacity="0.6"/><path d="M274.1 907.4 L265.1 911.5 L256.6 915.7 L249.1 920.2 L242.8 932.8 L241.7 940.0" fill="none" stroke="#a9cde0" stroke-width="0.8" opacity="0.6"/><path d="M110.4 788.2 L120.5 797.9 L129.2 802.1 L139.2 803.2 L150.6 806.3 L161.4 806.6 L175.1 801.9" fill="none" stroke="#cfcfcf" stroke-width="0.8" opacity="0.6"/><path d="M62.3 666.9 L60.7 676.4 L62.2 688.4 L69.0 701.5 L77.9 708.2 L84.6 713.7 L89.8 722.1" fill="none" stroke="#cfcfcf" stroke-width="0.8" opacity="0.6"/><path d="M311.1 136.9 L318.2 133.9 L327.4 134.1 L334.3 135.6 L343.6 138.3 L352.2 140.9 L361.0 138.8 L367.2 134.9 L375.6 132.3" fill="none" stroke="#c9b8cf" stroke-width="0.8" opacity="0.6"/><path d="M395.5 438.5 L393.1 431.5 L389.6 426.3 L384.8 414.6 L379.4 406.1 L374.7 394.0 L365.6 382.7 L356.4 374.6 L349.6 372.2" fill="none" stroke="#d8d0c4" stroke-width="0.8" opacity="0.6"/><path d="M320.4 672.7 L330.0 676.5 L335.8 681.4 L342.2 690.9" fill="none" stroke="#cfcfcf" stroke-width="0.8" opacity="0.6"/><path d="M267.3 169.6 L273.3 160.1 L284.4 154.0 L298.5 147.9 L307.2 137.4 L318.8 127.9 L330.3 125.1 L346.1 125.0" fill="none" stroke="#cfcfcf" stroke-width="0.8" opacity="0.6"/><path d="M55.8 747.1 L55.5 754.0 L52.7 763.5 L44.9 775.5 L42.7 782.0 L35.0 788.8" fill="none" stroke="#a9cde0" stroke-width="0.8" opacity="0.6"/><path d="M295.9 697.2 L302.6 688.4 L308.8 683.2 L321.5 676.3 L332.2 674.5 L345.6 666.6 L357.0 664.9 L363.6 661.0 L371.8 659.4" fill="none" stroke="#a9cde0" stroke-width="0.8" opacity="0.6"/><path d="M103.2 56.1 L100.9 68.2 L104.1 80.7 L106.9 91.1 L107.0 97.2 L105.4 104.4 L100.6 116.4" fill="none" stroke="#a9cde0" stroke-width="0.8" opacity="0.6"/><path d="M429.6 133.9 L423.5 130.2 L409.7 123.3 L403.8 118.6 L399.2 104.9 L395.8 97.6" fill="none" stroke="#cfcfcf" stroke-width="0.8" opacity="0.6"/><path d="M117.6 340.3 L115.8 349.2 L118.2 357.9 L116.0 365.2" fill="none" stroke="#c9b8cf" stroke-width="0.8" opacity="0.6"/><path d="M188.3 342.6 L197.6 347.9 L202.7 357.5 L204.4 366.6" fill="none" stroke="#cfcfcf" stroke-width="0.8" opacity="0.6"/><path d="M230.7 102.7 L216.9 103.9 L207.7 106.7 L201.5 113.0 L190.9 121.1 L179.4 126.1 L171.2 136.8" fill="none" stroke="#e9b394" stroke-width="0.8" opacity="0.6"/><path d="M345.7 792.6 L337.3 800.0 L324.9 803.2 L315.0 812.0 L308.0 821.9" fill="none" stroke="#c9b8cf" stroke-width="0.8" opacity="0.6"/><path d="M80.4 779.1 L80.3 794.3 L76.9 802.1 L77.8 809.2 L74.2 823.9 L66.7 830.6" fill="none" stroke="#e9b394" stroke-width="0.8" opacity="0.6"/><path d="M494.6 466.7 L484.6 460.0 L479.1 455.0 L472.4 452.0 L464.0 446.5" fill="none" stroke="#e9b394" stroke-width="0.8" opacity="0.6"/><path d="M400.5 452.6 L410.8 462.6 L415.8 475.6 L419.8 483.5 L422.7 494.2 L426.0 503.0" fill="none" stroke="#c9b8cf" stroke-width="0.8" opacity="0.6"/><path d="M15.0 902.5 L21.8 908.3 L31.2 915.2 L38.3 918.7 L47.6 918.3 L63.2 916.9 L76.7 922.6 L85.6 935.4 L91.8 948.1" fill="none" stroke="#e9b394" stroke-width="0.8" opacity="0.6"/><path d="M313.7 313.0 L306.4 299.3 L300.3 288.4 L293.8 281.5 L292.0 275.5 L284.1 265.5 L279.6 260.3 L274.6 252.0" fill="none" stroke="#d8d0c4" stroke-width="0.8" opacity="0.6"/><path d="M492.3 339.8 L493.6 346.9 L501.6 359.4 L505.1 365.6 L505.8 374.1 L511.8 383.7 L520.1 390.8" fill="none" stroke="#d8d0c4" stroke-width="0.8" opacity="0.6"/><path d="M183.9 510.9 L180.1 499.6 L172.7 492.8 L162.6 490.3 L153.6 483.2 L145.5 472.3 L131.3 465.1 L126.1 460.4 L121.9 451.5" fill="none" stroke="#a9cde0" stroke-width="0.8" opacity="0.6"/><path d="M529.1 180.9 L517.7 188.6 L514.0 196.1 L512.3 202.0" fill="none" stroke="#d8d0c4" stroke-width="0.8" opacity="0.6"/><path d="M509.5 434.0 L521.2 443.2 L531.3 453.9 L540.8 465.7 L542.6 473.1" fill="none" stroke="#cfcfcf" stroke-width="0.8" opacity="0.6"/><path d="M393.3 759.1 L395.4 752.2 L397.4 739.0 L405.8 728.8" fill="none" stroke="#e9b394" stroke-width="0.8" opacity="0.6"/><path d="M374.6 333.6 L368.5 337.3 L355.7 337.7 L348.2 340.3 L334.9 345.8 L328.1 347.8" fill="none" stroke="#e9b394" stroke-width="0.8" opacity="0.6"/><path d="M196.6 69.6 L195.6 78.5 L192.3 87.7 L193.5 102.4 L194.0 115.3" fill="none" stroke="#a9cde0" stroke-width="0.8" opacity="0.6"/><path d="M499.7 13.0 L493.9 22.2 L493.9 36.6 L499.8 47.2 L503.8 58.6" fill="none" stroke="#c9b8cf" stroke-width="0.8" opacity="0.6"/><path d="M528.3 654.1 L516.3 652.6 L507.7 656.1 L496.5 666.0 L491.3 669.7" fill="none" stroke="#a9cde0" stroke-width="0.8" opacity="0.6"/><path d="M376.5 686.5 L373.0 695.4 L375.5 706.9 L378.0 712.6 L385.1 726.8 L391.4 730.7 L397.7 736.8" fill="none" stroke="#a9cde0" stroke-width="0.8" opacity="0.6"/><path d="M40.3 935.8 L30.2 947.7 L24.1 949.4 L10.7 952.2 L-2.6 948.9 L-14.0 944.0 L-22.6 941.9 L-34.8 933.7" fill="none" stroke="#a9cde0" stroke-width="0.8" opacity="0.6"/><path d="M290.2 287.0 L289.0 272.5 L283.5 258.8 L282.3 249.6 L283.7 236.9 L291.3 225.4 L299.5 212.9 L312.5 203.6 L316.6 196.7" fill="none" stroke="#cfcfcf" stroke-width="0.8" opacity="0.6"/><path d="M181.7 420.6 L174.8 410.9 L163.4 404.4 L151.9 401.8 L137.6 395.5 L129.7 396.3" fill="none" stroke="#e9b394" stroke-width="0.8" opacity="0.6"/><path d="M240.8 287.2 L234.4 299.4 L228.8 313.0 L230.2 323.7 L227.2 331.9 L226.8 338.2 L229.7 346.3" fill="none" stroke="#cfcfcf" stroke-width="0.8" opacity="0.6"/><path d="M22.7 45.0 L13.5 51.1 L9.4 58.5 L9.7 65.8 L13.3 71.5 L15.5 83.0 L15.1 89.0 L17.6 101.2" fill="none" stroke="#e9b394" stroke-width="0.8" opacity="0.6"/><path d="M268.1 871.2 L266.9 877.3 L264.6 889.2 L260.6 895.8 L249.0 903.6 L243.3 914.3" fill="none" stroke="#c9b8cf" stroke-width="0.8" opacity="0.6"/><path d="M571.6 377.2 L577.0 369.8 L583.6 363.5 L592.1 353.5" fill="none" stroke="#a9cde0" stroke-width="0.8" opacity="0.6"/><path d="M70.9 17.6 L70.4 24.4 L66.0 33.7 L60.3 44.1 L53.6 54.8 L47.8 62.0 L40.7 66.8 L27.8 71.4" fill="none" stroke="#cfcfcf" stroke-width="0.8" opacity="0.6"/><path d="M125.0 729.3 L134.6 728.7 L143.3 728.3 L154.3 724.6 L163.9 714.3 L171.2 712.6 L181.2 711.7" fill="none" stroke="#e9b394" stroke-width="0.8" opacity="0.6"/><path d="M484.4 589.7 L492.7 597.7 L506.9 603.5 L514.2 605.2 L527.5 603.1 L534.6 605.7 L548.1 602.7 L561.7 594.7" fill="none" stroke="#c9b8cf" stroke-width="0.8" opacity="0.6"/><path d="M90.3 861.3 L97.6 855.5 L104.5 854.2 L111.1 854.8 L120.8 857.5 L125.8 861.8 L133.0 868.9" fill="none" stroke="#c9b8cf" stroke-width="0.8" opacity="0.6"/><path d="M494.6 592.0 L503.4 601.7 L511.7 606.5 L521.4 609.6 L536.2 610.3 L552.0 611.1" fill="none" stroke="#a9cde0" stroke-width="0.8" opacity="0.6"/><path d="M192.0 881.6 L196.3 873.9 L199.6 863.5 L204.9 858.1 L214.9 851.6" fill="none" stroke="#c9b8cf" stroke-width="0.8" opacity="0.6"/><path d="M89.9 49.2 L90.4 35.4 L94.0 28.4 L106.5 18.6 L110.4 13.7 L113.5 -1.7 L107.7 -15.7 L98.0 -24.9 L90.7 -27.0" fill="none" stroke="#cfcfcf" stroke-width="0.8" opacity="0.6"/><path d="M158.9 391.0 L152.9 377.5 L153.8 371.2 L151.6 357.5 L152.0 351.1 L152.6 342.8 L152.6 335.8 L143.7 322.5 L133.1 312.3" fill="none" stroke="#e9b394" stroke-width="0.8" opacity="0.6"/><path d="M511.7 916.2 L499.2 919.1 L488.6 927.2 L482.9 931.5" fill="none" stroke="#a9cde0" stroke-width="0.8" opacity="0.6"/><path d="M391.8 903.6 L401.5 916.0 L407.1 919.7 L411.3 924.2 L424.7 932.4" fill="none" stroke="#a9cde0" stroke-width="0.8" opacity="0.6"/><path d="M205.7 385.3 L196.4 384.6 L187.1 389.4 L180.2 395.6 L169.6 407.5 L162.2 412.0" fill="none" stroke="#c9b8cf" stroke-width="0.8" opacity="0.6"/><path d="M128.3 395.7 L143.0 397.8 L156.1 405.1 L162.7 410.3 L175.1 420.1 L183.4 430.6 L184.5 444.8" fill="none" stroke="#cfcfcf" stroke-width="0.8" opacity="0.6"/><path d="M57.4 795.8 L53.3 783.6 L46.9 772.9 L42.7 764.8 L43.2 758.8 L48.6 745.3 L53.2 734.3 L60.1 729.7 L72.4 724.1" fill="none" stroke="#c9b8cf" stroke-width="0.8" opacity="0.6"/><path d="M142.4 60.5 L155.2 60.3 L167.1 57.5 L175.2 56.1 L183.9 55.7 L193.6 60.3" fill="none" stroke="#cfcfcf" stroke-width="0.8" opacity="0.6"/><path d="M139.5 556.5 L126.0 557.5 L118.2 559.4 L110.4 565.2 L103.6 568.3" fill="none" stroke="#cfcfcf" stroke-width="0.8" opacity="0.6"/><path d="M184.8 604.7 L189.9 600.8 L200.0 590.7 L206.7 587.8 L212.5 581.6 L215.1 572.4 L221.8 563.4 L225.5 557.6 L232.6 543.3" fill="none" stroke="#cfcfcf" stroke-width="0.8" opacity="0.6"/><path d="M56.0 599.1 L57.4 591.7 L61.2 582.8 L64.7 575.2 L67.3 566.2" fill="none" stroke="#c9b8cf" stroke-width="0.8" opacity="0.6"/><path d="M104.4 525.1 L111.1 521.1 L119.5 518.9 L127.0 515.0 L133.9 514.5 L148.5 515.8" fill="none" stroke="#a9cde0" stroke-width="0.8" opacity="0.6"/><path d="M61.4 904.7 L52.4 914.3 L48.7 919.5 L36.3 929.1 L27.4 937.3 L23.1 944.5" fill="none" stroke="#d8d0c4" stroke-width="0.8" opacity="0.6"/><path d="M61.8 583.9 L68.5 583.6 L81.9 577.9 L88.4 569.7 L93.6 561.0 L104.4 554.9 L111.4 553.8 L126.7 552.5 L136.9 554.2" fill="none" stroke="#c9b8cf" stroke-width="0.8" opacity="0.6"/><path d="M77.6 61.4 L66.1 69.8 L53.8 75.4 L48.4 78.7 L37.4 82.4" fill="none" stroke="#c9b8cf" stroke-width="0.8" opacity="0.6"/><path d="M342.7 111.5 L343.3 117.6 L344.8 132.0 L349.4 141.6" fill="none" stroke="#cfcfcf" stroke-width="0.8" opacity="0.6"/><path d="M85.7 316.8 L93.9 310.8 L107.7 302.7 L122.2 300.5 L130.1 295.4 L135.2 292.2 L144.0 292.5 L152.8 290.2" fill="none" stroke="#a9cde0" stroke-width="0.8" opacity="0.6"/><path d="M280.8 282.0 L272.6 285.9 L265.4 292.6 L257.6 300.9 L254.0 307.3 L252.0 319.7 L244.1 329.4" fill="none" stroke="#cfcfcf" stroke-width="0.8" opacity="0.6"/><path d="M240.2 345.2 L243.7 332.7 L249.7 320.8 L248.9 314.2 L254.7 301.2" fill="none" stroke="#e9b394" stroke-width="0.8" opacity="0.6"/><path d="M111.8 751.5 L113.2 767.2 L112.8 777.2 L110.2 784.9 L110.5 792.7 L107.8 799.4 L108.4 814.1 L104.8 824.5 L108.1 837.3" fill="none" stroke="#cfcfcf" stroke-width="0.8" opacity="0.6"/><path d="M363.4 470.3 L360.8 456.5 L359.8 449.0 L362.3 436.1 L364.6 425.7 L363.6 418.8 L358.4 412.5 L354.7 399.9 L351.2 390.3" fill="none" stroke="#e9b394" stroke-width="0.8" opacity="0.6"/><path d="M469.0 125.9 L475.0 131.7 L481.1 138.6 L485.6 144.6 L486.9 153.8 L485.0 161.0 L475.8 173.9" fill="none" stroke="#c9b8cf" stroke-width="0.8" opacity="0.6"/><path d="M540.4 309.3 L549.5 316.2 L560.1 317.9 L569.4 322.2 L575.1 326.5 L578.7 332.8" fill="none" stroke="#a9cde0" stroke-width="0.8" opacity="0.6"/><path d="M601.4 886.8 L595.3 885.9 L582.2 878.9 L577.8 872.2 L571.0 866.2 L561.8 856.3" fill="none" stroke="#a9cde0" stroke-width="0.8" opacity="0.6"/><path d="M65.2 256.0 L72.8 251.1 L79.0 247.8 L82.7 240.8 L83.4 231.9" fill="none" stroke="#a9cde0" stroke-width="0.8" opacity="0.6"/><path d="M134.0 424.4 L135.2 431.4 L132.2 445.2 L127.2 454.5 L122.2 459.6 L118.5 468.8 L119.7 475.1 L120.5 485.2 L119.0 495.2" fill="none" stroke="#a9cde0" stroke-width="0.8" opacity="0.6"/><path d="M44.4 686.9 L37.1 673.3 L27.8 662.3 L25.1 651.8 L20.8 646.4 L19.3 639.4" fill="none" stroke="#c9b8cf" stroke-width="0.8" opacity="0.6"/><path d="M110.7 510.7 L110.0 522.1 L109.3 531.7 L112.2 541.3 L116.6 547.1" fill="none" stroke="#a9cde0" stroke-width="0.8" opacity="0.6"/><path d="M316.0 504.8 L325.3 517.2 L333.8 528.1 L340.8 538.9" fill="none" stroke="#a9cde0" stroke-width="0.8" opacity="0.6"/><path d="M47.9 161.7 L53.6 150.8 L53.7 139.1 L48.3 127.7" fill="none" stroke="#a9cde0" stroke-width="0.8" opacity="0.6"/><path d="M97.6 562.0 L105.6 550.2 L106.4 540.9 L103.2 533.3 L102.7 525.6 L100.6 519.1 L100.7 507.2 L97.3 498.6 L99.3 484.9" fill="none" stroke="#e9b394" stroke-width="0.8" opacity="0.6"/><path d="M48.2 231.1 L41.5 218.9 L40.1 211.0 L44.3 198.8 L48.0 193.2 L47.8 178.4 L41.7 168.9 L37.0 164.2 L33.0 158.9" fill="none" stroke="#cfcfcf" stroke-width="0.8" opacity="0.6"/><path d="M35.9 345.1 L26.8 347.9 L14.9 358.0 L3.0 364.4 L-5.5 375.9 L-19.3 381.8 L-33.6 383.5 L-45.1 380.5 L-59.1 378.1" fill="none" stroke="#d8d0c4" stroke-width="0.8" opacity="0.6"/><path d="M121.2 907.1 L106.0 911.2 L97.5 910.5 L90.2 906.6 L79.7 905.2 L68.9 907.3 L56.7 903.5 L48.2 898.3 L39.5 887.4" fill="none" stroke="#cfcfcf" stroke-width="0.8" opacity="0.6"/><path d="M345.3 323.5 L339.4 334.7 L330.1 343.2 L320.1 345.7" fill="none" stroke="#a9cde0" stroke-width="0.8" opacity="0.6"/><path d="M10.7 461.7 L19.9 467.3 L28.0 471.3 L39.4 471.5" fill="none" stroke="#e9b394" stroke-width="0.8" opacity="0.6"/><path d="M141.8 797.2 L128.3 788.9 L113.6 786.3 L102.3 785.5 L94.3 787.5 L84.6 788.4" fill="none" stroke="#a9cde0" stroke-width="0.8" opacity="0.6"/><path d="M155.9 314.0 L168.0 322.7 L179.0 332.8 L187.9 339.2 L192.2 349.4" fill="none" stroke="#d8d0c4" stroke-width="0.8" opacity="0.6"/><path d="M82.1 784.1 L95.3 790.2 L103.8 789.8 L116.3 790.2 L128.5 794.2 L136.8 804.6 L141.3 816.4 L151.1 825.8" fill="none" stroke="#a9cde0" stroke-width="0.8" opacity="0.6"/><path d="M282.0 71.7 L274.2 67.4 L261.5 63.9 L248.0 56.7 L243.6 51.7 L238.2 42.3 L236.4 36.4" fill="none" stroke="#cfcfcf" stroke-width="0.8" opacity="0.6"/><path d="M58.4 356.1 L48.4 364.8 L42.6 367.4 L36.6 371.7 L21.7 372.9 L11.4 378.7 L5.5 381.4 L-6.0 388.4" fill="none" stroke="#cfcfcf" stroke-width="0.8" opacity="0.6"/><path d="M557.2 592.2 L563.9 601.5 L568.5 606.6 L570.8 618.8 L574.0 634.2 L579.4 648.2 L587.2 660.2 L590.8 665.6" fill="none" stroke="#d8d0c4" stroke-width="0.8" opacity="0.6"/><path d="M139.3 132.1 L126.6 136.1 L119.6 141.9 L116.7 150.4" fill="none" stroke="#c9b8cf" stroke-width="0.8" opacity="0.6"/><path d="M347.4 339.9 L338.9 327.1 L331.4 321.7 L325.4 318.0 L315.8 315.4 L300.3 313.5" fill="none" stroke="#a9cde0" stroke-width="0.8" opacity="0.6"/><path d="M56.2 874.0 L51.4 862.5 L50.9 853.4 L44.6 841.4 L38.9 831.3 L34.8 818.4 L29.6 810.3 L28.7 799.1" fill="none" stroke="#a9cde0" stroke-width="0.8" opacity="0.6"/><path d="M401.1 114.3 L391.9 125.2 L385.2 131.9 L376.8 134.2" fill="none" stroke="#a9cde0" stroke-width="0.8" opacity="0.6"/><path d="M430.7 826.6 L437.6 834.0 L440.2 840.6 L447.4 850.7 L448.1 863.1 L445.6 876.6 L444.9 892.0 L441.7 900.9" fill="none" stroke="#c9b8cf" stroke-width="0.8" opacity="0.6"/><path d="M201.7 318.0 L212.2 313.5 L224.0 308.9 L231.3 309.6 L237.9 309.0 L248.7 306.9 L261.0 309.8 L270.6 313.0 L278.6 316.5" fill="none" stroke="#cfcfcf" stroke-width="0.8" opacity="0.6"/><path d="M355.0 791.5 L356.7 799.7 L362.0 806.7 L376.7 812.2 L383.0 819.7 L393.2 827.0 L397.9 835.6 L398.2 848.8 L394.6 860.3" fill="none" stroke="#d8d0c4" stroke-width="0.8" opacity="0.6"/><path d="M111.6 201.1 L115.5 212.2 L114.6 218.9 L119.3 229.0" fill="none" stroke="#e9b394" stroke-width="0.8" opacity="0.6"/><path d="M391.0 306.9 L400.9 310.4 L415.8 315.7 L426.5 320.9 L437.8 319.7 L448.6 318.0 L462.7 312.1 L473.9 313.9 L485.3 312.1" fill="none" stroke="#a9cde0" stroke-width="0.8" opacity="0.6"/><path d="M114.8 919.4 L101.1 920.4 L92.2 927.0 L87.3 931.5 L76.2 938.7 L67.3 943.3 L56.7 948.6 L46.3 959.0 L32.6 961.7" fill="none" stroke="#d8d0c4" stroke-width="0.8" opacity="0.6"/><path d="M132.6 931.0 L141.4 936.3 L148.1 949.5 L150.6 957.0 L152.0 964.0 L159.5 975.3 L172.9 982.1" fill="none" stroke="#e9b394" stroke-width="0.8" opacity="0.6"/><path d="M175.7 186.6 L176.0 178.6 L180.8 165.1 L182.2 151.3 L176.1 139.4" fill="none" stroke="#d8d0c4" stroke-width="0.8" opacity="0.6"/><path d="M311.8 59.2 L310.3 71.5 L305.6 81.9 L299.9 92.8" fill="none" stroke="#d8d0c4" stroke-width="0.8" opacity="0.6"/><path d="M264.2 935.9 L256.5 946.3 L253.3 951.7 L243.4 961.3" fill="none" stroke="#a9cde0" stroke-width="0.8" opacity="0.6"/><path d="M54.3 145.3 L55.4 138.5 L55.0 129.3 L61.7 115.1 L70.2 107.7 L75.5 99.3 L80.2 87.6" fill="none" stroke="#a9cde0" stroke-width="0.8" opacity="0.6"/><path d="M306.4 892.4 L319.4 895.1 L334.1 892.1 L341.2 890.1 L350.9 881.1 L355.7 877.1 L370.6 872.0" fill="none" stroke="#e9b394" stroke-width="0.8" opacity="0.6"/><path d="M186.2 40.8 L200.5 37.9 L211.2 33.5 L223.6 27.6 L229.6 27.9 L238.7 25.0 L245.6 26.0 L258.4 34.7" fill="none" stroke="#c9b8cf" stroke-width="0.8" opacity="0.6"/><path d="M183.1 552.7 L180.2 539.4 L178.4 526.4 L180.7 519.0 L187.5 506.1 L199.1 499.8 L211.8 492.2 L218.4 489.4 L227.4 485.4" fill="none" stroke="#cfcfcf" stroke-width="0.8" opacity="0.6"/><path d="M99.3 931.6 L100.0 945.0 L105.0 957.4 L106.8 965.7 L104.6 973.3 L107.9 983.5 L114.4 997.5" fill="none" stroke="#a9cde0" stroke-width="0.8" opacity="0.6"/><path d="M346.3 41.8 L340.6 35.2 L335.0 32.6 L329.9 27.8 L326.6 15.1 L318.3 3.8 L308.7 -1.9 L294.9 -2.8" fill="none" stroke="#c9b8cf" stroke-width="0.8" opacity="0.6"/><path d="M460.8 2.1 L465.8 -2.6 L475.2 -10.2 L485.9 -13.9 L498.5 -15.0 L509.1 -14.4 L520.3 -11.5 L528.1 -12.2" fill="none" stroke="#d8d0c4" stroke-width="0.8" opacity="0.6"/><path d="M371.0 432.3 L377.3 443.4 L376.6 455.5 L381.3 465.6 L382.9 472.3 L390.4 485.1 L390.1 491.9 L392.2 500.8 L397.2 510.5" fill="none" stroke="#d8d0c4" stroke-width="0.8" opacity="0.6"/><path d="M549.3 725.7 L560.5 719.5 L568.5 718.1 L583.5 713.1" fill="none" stroke="#d8d0c4" stroke-width="0.8" opacity="0.6"/><path d="M235.8 199.0 L243.3 186.8 L247.9 182.4 L260.3 174.9" fill="none" stroke="#c9b8cf" stroke-width="0.8" opacity="0.6"/><path d="M363.7 51.7 L353.5 43.6 L345.1 40.2 L336.0 38.4 L326.0 41.4 L314.0 37.8" fill="none" stroke="#c9b8cf" stroke-width="0.8" opacity="0.6"/><path d="M337.9 790.0 L346.0 787.4 L351.7 784.9 L362.7 774.9 L371.8 772.8 L385.4 774.1" fill="none" stroke="#a9cde0" stroke-width="0.8" opacity="0.6"/><path d="M359.2 502.2 L367.0 507.3 L374.3 507.6 L382.4 507.6 L393.2 501.1 L403.3 489.7" fill="none" stroke="#d8d0c4" stroke-width="0.8" opacity="0.6"/><path d="M294.9 913.3 L308.1 916.3 L318.2 924.6 L324.1 928.7 L329.2 939.7" fill="none" stroke="#d8d0c4" stroke-width="0.8" opacity="0.6"/><path d="M293.2 652.0 L290.5 643.8 L280.4 635.8 L272.3 633.0 L264.4 623.4 L257.6 612.8 L251.8 601.2" fill="none" stroke="#a9cde0" stroke-width="0.8" opacity="0.6"/><path d="M45.0 688.7 L37.6 688.3 L27.5 692.6 L14.8 690.6" fill="none" stroke="#a9cde0" stroke-width="0.8" opacity="0.6"/><path d="M465.5 424.8 L472.1 417.1 L480.4 410.9 L486.9 408.5 L496.2 409.9 L501.6 413.2" fill="none" stroke="#a9cde0" stroke-width="0.8" opacity="0.6"/><path d="M54.3 197.2 L52.1 202.9 L52.2 217.9 L57.3 229.4 L61.1 241.4 L65.9 247.1" fill="none" stroke="#e9b394" stroke-width="0.8" opacity="0.6"/><path d="M389.7 54.0 L388.8 62.2 L391.3 67.8 L391.2 75.1" fill="none" stroke="#a9cde0" stroke-width="0.8" opacity="0.6"/><path d="M145.7 682.2 L153.8 687.4 L159.7 691.4 L173.0 695.5 L182.8 695.9 L190.5 698.8 L198.7 698.7 L208.3 697.2 L219.0 697.5" fill="none" stroke="#e9b394" stroke-width="0.8" opacity="0.6"/><path d="M36.0 626.5 L39.0 616.2 L40.8 609.3 L44.4 599.0 L46.7 588.4" fill="none" stroke="#a9cde0" stroke-width="0.8" opacity="0.6"/><path d="M453.9 402.0 L463.5 400.7 L478.6 398.0 L485.3 397.3 L497.4 391.5" fill="none" stroke="#d8d0c4" stroke-width="0.8" opacity="0.6"/><path d="M253.6 943.9 L263.0 931.6 L268.3 925.1 L272.4 911.1 L272.0 904.3 L266.9 889.9 L261.9 877.6" fill="none" stroke="#e9b394" stroke-width="0.8" opacity="0.6"/><path d="M367.6 595.7 L374.2 602.6 L389.1 608.1 L396.4 610.7 L408.6 607.5 L414.6 606.1" fill="none" stroke="#c9b8cf" stroke-width="0.8" opacity="0.6"/><path d="M293.3 30.4 L290.1 23.7 L284.5 15.6 L283.2 6.5 L274.0 -4.8 L267.9 -15.7 L266.4 -21.7" fill="none" stroke="#c9b8cf" stroke-width="0.8" opacity="0.6"/><path d="M445.6 77.4 L452.7 91.5 L453.2 100.5 L455.4 108.2" fill="none" stroke="#e9b394" stroke-width="0.8" opacity="0.6"/><path d="M160.8 641.1 L171.3 638.5 L186.3 635.0 L201.8 631.3 L209.9 630.6 L217.6 633.0 L224.1 641.3" fill="none" stroke="#a9cde0" stroke-width="0.8" opacity="0.6"/><path d="M541.9 713.5 L554.6 713.6 L562.8 708.4 L570.9 696.7 L571.0 684.6" fill="none" stroke="#a9cde0" stroke-width="0.8" opacity="0.6"/><path d="M251.4 448.5 L243.0 449.6 L230.1 458.3 L226.1 464.5 L219.6 474.3 L213.9 477.6 L208.8 483.3" fill="none" stroke="#d8d0c4" stroke-width="0.8" opacity="0.6"/><path d="M376.7 745.8 L373.6 760.0 L367.6 766.3 L357.9 769.1 L347.5 780.1 L345.8 786.1 L345.5 795.0 L337.4 807.2" fill="none" stroke="#c9b8cf" stroke-width="0.8" opacity="0.6"/><path d="M43.5 355.7 L38.1 365.5 L37.8 373.9 L35.1 385.5 L26.8 397.9 L19.5 401.2 L10.6 413.2 L5.5 419.1 L-1.5 424.1" fill="none" stroke="#a9cde0" stroke-width="0.8" opacity="0.6"/><path d="M164.8 902.7 L163.0 909.0 L159.0 916.2 L154.5 930.7" fill="none" stroke="#c9b8cf" stroke-width="0.8" opacity="0.6"/><path d="M191.1 640.0 L193.4 629.6 L193.4 613.8 L197.1 608.1 L207.5 603.3 L213.7 599.4 L223.1 597.0 L232.9 597.0 L242.6 596.8" fill="none" stroke="#a9cde0" stroke-width="0.8" opacity="0.6"/><path d="M268.1 829.7 L277.8 832.4 L284.4 833.6 L299.3 837.8 L308.2 841.3 L316.7 847.3 L327.2 849.7 L339.2 845.3" fill="none" stroke="#a9cde0" stroke-width="0.8" opacity="0.6"/><path d="M157.6 110.6 L153.3 98.9 L150.8 86.1 L153.6 78.7 L159.3 71.7 L164.8 58.6" fill="none" stroke="#d8d0c4" stroke-width="0.8" opacity="0.6"/><path d="M182.5 628.6 L180.9 622.6 L178.1 609.7 L175.0 603.8" fill="none" stroke="#e9b394" stroke-width="0.8" opacity="0.6"/><path d="M389.9 81.0 L392.7 89.2 L393.9 105.0 L398.3 110.7 L400.4 126.2" fill="none" stroke="#a9cde0" stroke-width="0.8" opacity="0.6"/><path d="M188.8 69.2 L183.4 78.6 L181.9 85.0 L183.9 92.3 L192.3 101.2 L196.6 108.7" fill="none" stroke="#cfcfcf" stroke-width="0.8" opacity="0.6"/><path d="M132.3 473.7 L134.2 485.1 L139.1 490.8 L143.7 499.6 L145.4 507.7 L143.5 521.6 L147.5 532.7 L156.1 542.6" fill="none" stroke="#c9b8cf" stroke-width="0.8" opacity="0.6"/><path d="M356.9 218.3 L365.7 223.7 L381.0 223.2 L394.4 218.0 L406.8 212.4 L417.0 207.8 L422.3 204.0 L425.9 198.9 L430.8 192.4" fill="none" stroke="#cfcfcf" stroke-width="0.8" opacity="0.6"/><path d="M295.7 580.3 L311.6 579.8 L318.2 582.9 L328.8 582.0 L341.3 578.5" fill="none" stroke="#cfcfcf" stroke-width="0.8" opacity="0.6"/><path d="M514.1 749.9 L510.5 758.2 L504.4 765.0 L500.1 773.2 L498.8 780.9 L496.1 788.9" fill="none" stroke="#e9b394" stroke-width="0.8" opacity="0.6"/><path d="M85.0 112.9 L73.6 106.9 L65.4 102.8 L52.8 103.5 L42.5 102.5 L29.7 108.3 L20.1 112.4 L4.7 112.2" fill="none" stroke="#c9b8cf" stroke-width="0.8" opacity="0.6"/><path d="M343.0 350.9 L331.0 348.6 L320.9 351.6 L312.2 352.7 L299.9 362.6 L292.7 363.9 L280.8 366.7 L274.9 369.7 L261.4 372.0" fill="none" stroke="#c9b8cf" stroke-width="0.8" opacity="0.6"/><path d="M210.6 136.7 L212.0 130.4 L211.7 116.7 L208.5 110.4 L202.1 106.1 L190.5 97.7 L183.0 96.0 L174.2 90.6 L167.5 88.1" fill="none" stroke="#a9cde0" stroke-width="0.8" opacity="0.6"/><path d="M183.8 521.0 L189.8 532.8 L194.5 539.6 L206.2 547.5 L212.4 555.2 L224.2 562.4 L234.3 573.7 L244.2 584.5 L253.5 595.0" fill="none" stroke="#e9b394" stroke-width="0.8" opacity="0.6"/><path d="M105.2 442.9 L115.8 448.9 L128.5 452.7 L138.3 461.0 L142.4 466.1" fill="none" stroke="#e9b394" stroke-width="0.8" opacity="0.6"/><path d="M410.7 542.7 L425.4 545.6 L432.3 551.8 L438.0 564.8 L444.2 572.2 L451.4 578.5" fill="none" stroke="#c9b8cf" stroke-width="0.8" opacity="0.6"/><path d="M115.6 890.0 L128.0 889.6 L140.3 895.3 L155.3 897.3 L169.3 904.9 L179.1 914.3 L182.6 922.1 L184.9 931.6 L183.7 938.8" fill="none" stroke="#d8d0c4" stroke-width="0.8" opacity="0.6"/><path d="M308.2 633.3 L318.9 643.5 L333.4 648.5 L343.8 655.9 L348.3 660.6" fill="none" stroke="#d8d0c4" stroke-width="0.8" opacity="0.6"/><path d="M550.6 893.2 L536.1 891.0 L526.8 892.8 L520.7 896.1 L515.9 900.1 L508.1 902.9 L503.7 907.9" fill="none" stroke="#cfcfcf" stroke-width="0.8" opacity="0.6"/><path d="M36.7 811.8 L31.7 797.0 L25.2 786.6 L24.3 775.9 L29.4 763.6 L32.0 749.1" fill="none" stroke="#d8d0c4" stroke-width="0.8" opacity="0.6"/><path d="M458.8 566.3 L467.9 561.0 L474.7 547.0 L475.7 539.0 L478.4 523.9 L483.6 510.3 L489.8 500.3 L495.4 490.1" fill="none" stroke="#e9b394" stroke-width="0.8" opacity="0.6"/><path d="M310.6 405.3 L321.2 408.9 L326.9 413.0 L333.6 422.9 L342.3 427.1 L349.8 438.2 L360.3 444.8 L370.4 445.4" fill="none" stroke="#a9cde0" stroke-width="0.8" opacity="0.6"/><path d="M122.2 310.6 L120.5 297.2 L111.0 286.0 L105.6 277.9 L102.8 263.1" fill="none" stroke="#a9cde0" stroke-width="0.8" opacity="0.6"/><path d="M80.0 859.2 L73.1 852.6 L70.7 844.8 L62.3 837.7" fill="none" stroke="#cfcfcf" stroke-width="0.8" opacity="0.6"/><path d="M444.5 901.5 L437.1 900.5 L423.7 896.3 L411.9 893.9 L403.2 894.6" fill="none" stroke="#c9b8cf" stroke-width="0.8" opacity="0.6"/><path d="M91.5 593.3 L102.9 603.0 L116.1 607.1 L124.0 610.0" fill="none" stroke="#a9cde0" stroke-width="0.8" opacity="0.6"/><path d="M97.0 165.1 L103.1 161.5 L113.1 154.9 L121.8 143.5 L127.6 134.0 L130.7 128.9 L143.0 120.8 L154.5 119.6" fill="none" stroke="#c9b8cf" stroke-width="0.8" opacity="0.6"/><path d="M66.0 434.2 L55.4 425.7 L47.9 422.8 L37.8 423.2 L28.8 422.2 L21.0 424.7 L15.5 430.4 L9.7 439.8" fill="none" stroke="#a9cde0" stroke-width="0.8" opacity="0.6"/><path d="M167.1 792.9 L168.7 777.5 L169.2 769.6 L170.5 762.2 L169.0 755.7 L169.4 740.0 L168.5 730.5 L166.7 721.1" fill="none" stroke="#cfcfcf" stroke-width="0.8" opacity="0.6"/><path d="M392.3 609.3 L386.0 610.4 L375.4 608.4 L362.5 605.9 L348.3 599.8 L341.8 595.9 L331.8 586.9 L319.1 585.1" fill="none" stroke="#cfcfcf" stroke-width="0.8" opacity="0.6"/><path d="M146.5 803.9 L149.3 796.2 L154.2 790.4 L162.9 781.4 L166.5 775.0 L179.7 766.4 L192.4 760.5 L200.1 756.2" fill="none" stroke="#d8d0c4" stroke-width="0.8" opacity="0.6"/><path d="M439.3 330.2 L429.3 326.4 L419.6 324.7 L406.3 320.7 L396.6 320.6 L387.1 321.8" fill="none" stroke="#cfcfcf" stroke-width="0.8" opacity="0.6"/><path d="M219.2 260.4 L217.8 273.2 L221.4 280.3 L233.1 288.0 L241.3 289.2 L249.4 286.1 L262.5 284.8" fill="none" stroke="#e9b394" stroke-width="0.8" opacity="0.6"/><path d="M497.3 520.0 L504.6 518.8 L510.9 520.4 L523.8 523.5" fill="none" stroke="#c9b8cf" stroke-width="0.8" opacity="0.6"/><path d="M49.9 824.0 L46.2 815.8 L40.1 811.3 L30.9 810.4 L23.6 807.9 L16.8 806.0 L7.2 806.8 L0.0 803.3" fill="none" stroke="#e9b394" stroke-width="0.8" opacity="0.6"/><path d="M550.2 410.1 L542.3 417.5 L539.1 429.8 L534.0 435.6 L521.0 440.6 L508.8 443.3" fill="none" stroke="#c9b8cf" stroke-width="0.8" opacity="0.6"/><path d="M215.3 642.6 L229.6 646.5 L239.5 643.3 L247.2 633.7 L255.8 626.6 L258.6 620.8 L266.6 612.9" fill="none" stroke="#c9b8cf" stroke-width="0.8" opacity="0.6"/><path d="M77.2 361.8 L71.6 347.7 L69.6 332.4 L72.3 323.2" fill="none" stroke="#cfcfcf" stroke-width="0.8" opacity="0.6"/><path d="M283.7 538.0 L280.1 527.8 L276.4 512.4 L267.4 500.5 L253.8 492.1 L241.4 489.5 L235.7 487.5" fill="none" stroke="#d8d0c4" stroke-width="0.8" opacity="0.6"/><path d="M293.9 300.5 L297.6 291.9 L303.1 281.8 L315.6 274.4 L326.5 275.0 L332.4 277.8" fill="none" stroke="#c9b8cf" stroke-width="0.8" opacity="0.6"/><path d="M337.1 541.2 L348.0 534.1 L352.7 523.2 L352.3 513.4 L357.2 502.4 L362.1 488.4 L366.5 483.2 L372.3 475.5" fill="none" stroke="#e9b394" stroke-width="0.8" opacity="0.6"/><path d="M199.1 681.4 L205.9 693.4 L214.4 700.6 L222.9 707.9 L229.6 719.0 L232.8 727.2 L234.5 736.2 L234.2 749.1 L230.7 754.6" fill="none" stroke="#a9cde0" stroke-width="0.8" opacity="0.6"/><path d="M370.8 278.6 L361.6 266.4 L350.9 256.5 L347.6 248.6 L343.7 238.9 L338.1 235.0 L329.6 222.8 L319.9 215.8" fill="none" stroke="#cfcfcf" stroke-width="0.8" opacity="0.6"/><path d="M45.8 274.7 L47.2 267.5 L51.0 261.4 L53.1 250.6 L53.0 242.9 L58.2 233.6 L64.6 227.9 L72.6 226.1" fill="none" stroke="#d8d0c4" stroke-width="0.8" opacity="0.6"/><path d="M122.3 937.9 L135.4 944.0 L142.0 946.6 L151.1 957.3 L157.4 969.1 L165.1 976.5 L171.5 990.7" fill="none" stroke="#a9cde0" stroke-width="0.8" opacity="0.6"/><path d="M72.2 645.6 L61.7 634.6 L58.7 624.4 L61.5 613.1 L58.8 602.4 L61.7 593.6 L62.6 586.7" fill="none" stroke="#c9b8cf" stroke-width="0.8" opacity="0.6"/><path d="M515.7 926.7 L523.3 932.1 L529.2 937.2 L533.8 945.1 L542.4 958.1 L548.1 965.9 L552.7 980.6 L553.4 991.4" fill="none" stroke="#cfcfcf" stroke-width="0.8" opacity="0.6"/><path d="M85.0 904.5 L77.2 895.3 L64.5 886.1 L49.6 881.1 L43.6 882.3" fill="none" stroke="#d8d0c4" stroke-width="0.8" opacity="0.6"/><path d="M42.7 486.1 L38.3 474.0 L41.0 458.3 L45.8 446.1 L44.4 439.8" fill="none" stroke="#c9b8cf" stroke-width="0.8" opacity="0.6"/><path d="M48.1 264.8 L51.3 255.2 L59.9 246.9 L65.6 244.7 L71.4 239.5 L78.0 237.2 L86.5 238.7 L95.5 245.4 L109.7 251.9" fill="none" stroke="#c9b8cf" stroke-width="0.8" opacity="0.6"/><path d="M586.9 25.4 L584.2 18.8 L583.4 10.1 L578.7 1.7 L573.8 -13.0 L578.1 -28.4 L583.2 -39.8 L583.4 -53.1 L584.1 -62.6" fill="none" stroke="#a9cde0" stroke-width="0.8" opacity="0.6"/><path d="M105.2 133.7 L117.2 140.7 L126.3 141.4 L133.2 142.5 L143.7 144.1" fill="none" stroke="#e9b394" stroke-width="0.8" opacity="0.6"/><path d="M316.5 223.0 L328.5 230.7 L335.1 232.5 L344.7 234.8" fill="none" stroke="#a9cde0" stroke-width="0.8" opacity="0.6"/><path d="M191.6 39.2 L202.4 36.9 L213.9 40.5 L220.6 39.9" fill="none" stroke="#e9b394" stroke-width="0.8" opacity="0.6"/><path d="M345.4 712.2 L341.3 720.4 L334.2 734.0 L332.9 741.4" fill="none" stroke="#a9cde0" stroke-width="0.8" opacity="0.6"/><path d="M173.0 879.3 L179.4 883.6 L186.6 883.8 L197.8 889.3 L210.0 889.8 L219.8 884.6 L225.2 880.1 L237.4 875.1" fill="none" stroke="#d8d0c4" stroke-width="0.8" opacity="0.6"/><path d="M161.8 216.1 L162.2 223.0 L159.7 228.5 L158.8 238.5 L160.7 245.1 L161.5 261.0" fill="none" stroke="#a9cde0" stroke-width="0.8" opacity="0.6"/><path d="M102.7 624.4 L97.9 636.3 L95.6 643.5 L98.0 654.7" fill="none" stroke="#a9cde0" stroke-width="0.8" opacity="0.6"/></g><path d="M0.0 24.7 L15.2 26.3 L22.7 41.4 L15.2 67.1 L0.0 59.5 Z" fill="#aad3df" opacity="1.0"/><path d="M112.0 380.3 L124.1 365.1 L166.4 366.7 L175.5 360.6 L193.7 362.1 L208.8 383.3 L190.6 377.2 L166.4 392.4 L139.2 410.5 L118.0 404.5 Z" fill="#b5d6a1" opacity="1.0"/><path d="M92.3 286.5 L107.4 285.0 L104.4 301.6 L93.8 300.1 Z" fill="#aad3df" opacity="1.0"/><path d="M71.1 316.7 L84.7 313.7 L83.2 328.8 L72.6 328.2 Z" fill="#aad3df" opacity="1.0"/><path d="M89.3 312.2 L99.9 310.7 L97.5 324.3 L90.2 322.8 Z" fill="#aad3df" opacity="1.0"/><path d="M33.3 383.3 L51.5 386.3 L30.3 419.6 L13.6 437.8 L15.2 419.6 Z" fill="#aad3df" opacity="1.0"/><path d="M276.9 89.8 L290.5 92.8 L284.4 101.9 L277.8 100.4 Z" fill="#aad3df" opacity="1.0"/><path d="M328.3 68.6 L341.9 71.6 L335.9 75.3 Z" fill="#aad3df" opacity="1.0"/><path d="M228.5 62.6 L233.0 64.1 L232.4 83.7 L229.4 82.2 Z" fill="#aad3df" opacity="1.0"/><path d="M269.3 62.6 L278.4 68.6 L272.3 83.7 L267.8 71.6 Z" fill="#aad3df" opacity="1.0"/><path d="M199.7 151.8 L205.8 153.3 L202.7 160.9 Z" fill="#aad3df" opacity="1.0"/><path d="M57.5 398.4 L71.1 395.4 L68.1 422.6 L57.5 421.1 Z" fill="#add19e" opacity="1.0"/><path d="M0.0 262.3 L4.6 263.8 L4.6 289.5 L0.0 288.0 Z" fill="#add19e" opacity="1.0"/><path d="M48.4 153.3 L54.5 153.3 L53.9 160.9 L49.0 160.9 Z" fill="#add19e" opacity="1.0"/><path d="M6.1 238.1 L12.1 241.1 L9.1 250.2 Z" fill="#add19e" opacity="1.0"/><path d="M96.8 322.8 L104.4 321.3 L96.8 340.9 Z" fill="#add19e" opacity="1.0"/><path d="M87.8 222.9 L99.9 223.5 L99.3 235.0 L88.4 234.4 Z" fill="#e0c8b0" opacity="0.8"/><path d="M138.4 595.7 L161.5 597.4 L168.1 608.9 L154.9 612.2 L151.6 635.2 L141.7 625.3 Z" fill="#cdebb0" opacity="0.95"/><path d="M171.3 597.4 L194.4 605.6 L207.5 635.2 L184.5 635.2 L171.3 622.1 Z" fill="#cdebb0" opacity="0.95"/><path d="M115.4 612.2 L128.6 608.9 L135.2 622.1 L128.6 633.6 L115.4 631.9 Z" fill="#c8dab0" opacity="0.95"/><path d="M174.6 661.5 L187.8 658.2 L189.4 681.3 L176.3 678.0 Z" fill="#cdebb0" opacity="0.95"/><path d="M191.1 668.1 L207.5 664.8 L210.2 681.3 L194.4 684.6 Z" fill="#cdebb0" opacity="0.95"/><path d="M214.1 674.7 L227.3 668.1 L228.9 687.8 L217.4 684.6 Z" fill="#cdebb0" opacity="0.95"/><path d="M168.1 714.2 L186.1 710.9 L181.2 730.6 L166.4 727.3 Z" fill="#cdebb0" opacity="0.95"/><path d="M194.4 733.9 L210.8 730.6 L224.0 753.6 L204.2 756.9 Z" fill="#cdebb0" opacity="0.95"/><path d="M194.4 761.9 L207.5 760.2 L205.9 768.4 L196.0 768.4 Z" fill="#cdebb0" opacity="0.95"/><path d="M49.6 760.2 L95.7 758.6 L115.4 776.7 L108.8 799.7 L82.5 796.4 L49.6 786.5 Z" fill="#b5d6a1" opacity="0.95"/><path d="M0.3 681.3 L20.0 701.0 L23.3 740.5 L16.7 816.1 L0.3 816.1 Z" fill="#b5d6a1" opacity="0.95"/><path d="M174.6 826.0 L194.4 819.4 L209.2 832.6 L204.2 849.0 L194.4 862.2 L176.3 845.7 Z" fill="#c8dab0" opacity="0.95"/><path d="M131.9 862.2 L158.2 863.8 L158.8 875.3 L132.5 873.7 Z" fill="#c8dab0" opacity="0.95"/><path d="M108.8 893.4 L148.3 891.8 L171.3 904.9 L168.1 921.4 L128.6 934.6 L102.3 931.3 L99.0 918.1 Z" fill="#c8dab0" opacity="0.95"/><path d="M224.0 878.6 L250.3 875.3 L265.1 891.8 L240.4 918.1 L224.0 921.4 Z" fill="#cfe6c0" opacity="0.95"/><path d="M36.5 855.6 L49.6 857.2 L46.3 865.5 Z" fill="#d0d0d0" opacity="0.95"/><path d="M337.1 128.1 L375.3 72.1 L386.3 70.3 L390.4 76.5 L391.3 85.4 L394.8 94.3 L401.9 105.0 L414.4 117.4 L428.6 129.8 L442.8 139.6 L460.6 141.4 L478.3 137.8 L499.7 126.3 L517.4 117.4 L531.6 112.1 L545.9 117.4 L560.1 117.4 L570.7 121.8 L602.0 108.5 L611.1 103.1 L635.9 92.6 L649.3 97.3 L677.9 91.6 L706.5 83.0 L725.6 87.8 L763.8 77.3 L792.4 68.7 L821.0 59.2 L828.6 45.8 L842.0 42.0 L874.4 51.5 L872.5 66.8 L863.0 76.3 L864.9 93.5 L866.8 103.1 L864.9 116.4 L866.8 131.7 L882.1 137.4 L880.2 145.0 L866.8 141.2 L853.5 148.9 L849.6 173.7 L845.8 200.4 L838.2 215.7 L832.5 230.9 L817.2 250.0 L811.5 261.5 L803.8 271.0 L786.7 295.8 L781.5 320.5 L753.1 361.6 L738.9 390.0 L721.5 434.2 L689.9 475.3 L658.4 522.7 L620.4 566.9 L579.4 611.1 L546.6 641.2 L510.4 664.2 L480.8 677.4 L448.0 700.4 L421.7 726.7 L388.8 749.7 L365.7 776.0 L336.2 808.9 L309.8 841.8 L290.1 864.8 L270.4 892.7 L231.0 845.0 L230.3 614.9 L250.7 595.2 L290.1 536.0 L301.6 528.7 L326.3 526.1 L349.3 521.2 L359.2 506.4 L382.2 489.9 L421.7 480.0 L480.8 481.7 L664.7 293.7 L606.2 294.6 L419.7 232.0 L393.1 208.0 L382.4 200.9 L375.3 193.8 L371.7 183.1 L366.4 176.0 L355.8 168.9 L346.9 151.2 L338.0 133.4 Z" fill="#969696" stroke="#1a1a1a" stroke-width="4" stroke-linejoin="round"/><path d="M365.2 503.3 L381.1 513.4 L462.1 517.1 L457.8 491.0" fill="none" stroke="#fff" stroke-width="2"/><path d="M381.1 513.4 L407.1 548.9 L418.7 548.2 L431.7 551.8 L439.7 569.2 L439.7 582.2 L444.8 588.0 L462.1 588.7 L488.2 589.4 L540.3 589.4 L541.7 577.8 L549.0 572.1 L552.6 569.2" fill="none" stroke="#fff" stroke-width="2"/><path d="M437.5 517.1 L439.0 580.7" fill="none" stroke="#fff" stroke-width="2"/><path d="M462.1 517.1 L469.4 548.9 L469.4 588.0" fill="none" stroke="#fff" stroke-width="2"/><path d="M467.9 537.3 L482.4 533.0 L486.7 525.7 L507.0 519.2 L517.1 524.3 L527.3 517.1 L552.6 516.3" fill="none" stroke="#fff" stroke-width="2"/><path d="M492.5 569.9 L552.6 569.2" fill="none" stroke="#fff" stroke-width="2"/><path d="M492.5 569.9 L499.0 590.9" fill="none" stroke="#fff" stroke-width="2"/><path d="M488.2 589.4 L491.1 599.6 L504.1 622.0 L541.7 622.0 L552.6 632.8" fill="none" stroke="#fff" stroke-width="2"/><path d="M462.1 588.7 L460.7 616.9 L460.0 637.2 L460.7 653.1 L470.8 671.9 L485.3 674.8" fill="none" stroke="#fff" stroke-width="2"/><path d="M504.1 622.0 L505.6 654.6 L527.3 651.7" fill="none" stroke="#fff" stroke-width="2"/><path d="M438.3 583.6 L395.6 622.7 L385.4 634.3 L376.7 650.2 L370.9 666.1 L378.2 682.1 L379.6 687.8" fill="none" stroke="#fff" stroke-width="2"/><path d="M350.7 522.8 L352.1 527.2 L363.7 546.0 L366.6 564.8 L367.3 631.4 L385.4 634.3" fill="none" stroke="#fff" stroke-width="2"/><path d="M328.3 631.4 L385.4 634.3" fill="none" stroke="#fff" stroke-width="2"/><path d="M331.9 601.0 L365.2 601.0 L367.3 631.4" fill="none" stroke="#fff" stroke-width="2"/><path d="M331.9 601.0 L328.3 631.4 L320.3 670.5 L356.5 699.4 L394.1 682.1 L462.1 653.1" fill="none" stroke="#fff" stroke-width="2"/><path d="M320.3 670.5 L285.6 671.2 L272.5 673.4 L259.5 711.0" fill="none" stroke="#fff" stroke-width="2"/><path d="M233.4 649.5 L284.1 650.2 L294.2 611.1 L329.0 620.5" fill="none" stroke="#fff" stroke-width="2"/><path d="M253.7 596.7 L279.8 605.3 L294.2 611.1" fill="none" stroke="#fff" stroke-width="2"/><path d="M279.8 605.3 L300.0 564.8 L363.7 590.9" fill="none" stroke="#fff" stroke-width="2"/><path d="M285.6 550.3 L310.9 557.6 L320.3 531.5" fill="none" stroke="#fff" stroke-width="2"/><path d="M285.6 550.3 L253.7 596.7" fill="none" stroke="#fff" stroke-width="2"/><path d="M365.2 547.4 L395.6 540.2" fill="none" stroke="#fff" stroke-width="2"/><path d="M394.1 682.1 L449.1 687.8 L446.2 696.5 L469.4 673.4" fill="none" stroke="#fff" stroke-width="2"/><path d="M412.9 674.8 L449.1 687.8" fill="none" stroke="#fff" stroke-width="2"/><path d="M356.5 699.4 L362.3 711.0" fill="none" stroke="#fff" stroke-width="2"/><path d="M308.7 699.4 L356.5 699.4" fill="none" stroke="#fff" stroke-width="2"/><path d="M308.7 699.4 L310.2 711.0" fill="none" stroke="#fff" stroke-width="2"/><path d="M367.3 124.5 L400.2 110.3" fill="none" stroke="#fff" stroke-width="2"/><path d="M367.3 124.5 L369.1 136.9 L381.5 136.9 L382.4 145.8" fill="none" stroke="#fff" stroke-width="2"/><path d="M348.6 147.6 L425.0 130.7" fill="none" stroke="#fff" stroke-width="2"/><path d="M403.7 150.3 L426.8 161.8 L393.1 206.2" fill="none" stroke="#fff" stroke-width="2"/><path d="M435.7 138.7 L428.6 151.2 L465.9 172.5 L473.0 173.4 L499.7 177.8 L535.2 183.1 L531.6 172.5 L538.8 161.8 L545.9 163.6" fill="none" stroke="#fff" stroke-width="2"/><path d="M473.0 173.4 L488.1 158.3 L519.2 160.0 L538.8 161.8" fill="none" stroke="#fff" stroke-width="2"/><path d="M473.0 173.4 L467.7 188.5 L464.1 243.5" fill="none" stroke="#fff" stroke-width="2"/><path d="M499.7 177.8 L499.7 254.2" fill="none" stroke="#fff" stroke-width="2"/><path d="M545.9 119.2 L545.9 163.6 L553.0 206.2 L554.7 242.6 L560.1 273.7" fill="none" stroke="#fff" stroke-width="2"/><path d="M592.0 119.2 L602.0 129.8" fill="none" stroke="#fff" stroke-width="2"/><path d="M592.0 118.3 L630.2 158.4 L629.2 173.7 L611.1 202.3" fill="none" stroke="#fff" stroke-width="2"/><path d="M660.7 98.3 L704.6 135.5 L705.5 195.6" fill="none" stroke="#fff" stroke-width="2"/><path d="M592.0 201.3 L599.6 203.3 L735.1 194.7" fill="none" stroke="#fff" stroke-width="2"/><path d="M726.5 88.7 L734.2 116.4 L735.1 145.0 L737.0 227.1 L742.8 242.4 L750.4 250.0 L775.2 255.7 L784.7 271.0 L790.5 264.3 L805.7 271.0" fill="none" stroke="#fff" stroke-width="2"/><path d="M735.1 145.0 L744.7 136.5 L754.2 135.5 L761.8 138.4 L822.9 129.8 L830.5 120.2 L816.2 97.3 L821.0 82.1 L813.4 80.2 L815.3 66.8" fill="none" stroke="#fff" stroke-width="2"/><path d="M766.6 79.2 L788.6 114.5 L769.5 137.4" fill="none" stroke="#fff" stroke-width="2"/><path d="M813.4 81.1 L840.1 82.1 L863.0 76.3" fill="none" stroke="#fff" stroke-width="2"/><path d="M764.7 138.4 L775.2 167.9 L796.2 180.4 L847.7 174.6" fill="none" stroke="#fff" stroke-width="2"/><path d="M799.1 180.4 L798.1 215.7 L788.6 225.2 L787.6 264.3" fill="none" stroke="#fff" stroke-width="2"/><path d="M601.5 203.3 L602.5 243.3 L670.2 243.3 L672.2 199.4" fill="none" stroke="#fff" stroke-width="2"/><path d="M602.5 243.3 L607.3 245.2 L613.0 257.6 L608.2 292.0" fill="none" stroke="#fff" stroke-width="2"/><path d="M670.2 243.3 L712.2 245.2 L736.1 221.4" fill="none" stroke="#fff" stroke-width="2"/><path d="M592.0 243.3 L602.5 243.3" fill="none" stroke="#fff" stroke-width="2"/><path d="M712.2 245.2 L672.2 279.6 L742.8 292.0 L750.4 250.0" fill="none" stroke="#fff" stroke-width="2"/><path d="M742.8 292.0 L735.1 311.1" fill="none" stroke="#fff" stroke-width="2"/><path d="M546.2 131.0 L546.2 162.6 L555.7 232.1 L554.1 241.6 L560.4 276.3" fill="none" stroke="#fff" stroke-width="2"/><path d="M532.0 161.0 L544.6 162.6 L598.3 203.7 L734.2 194.2 L737.3 222.6 L671.0 279.5 L742.1 292.1 L734.2 309.5 L701.0 328.4 L699.4 371.1 L708.9 379.0 L742.1 380.5" fill="none" stroke="#fff" stroke-width="2"/><path d="M599.9 203.7 L603.1 241.6 L554.1 242.2" fill="none" stroke="#fff" stroke-width="2"/><path d="M644.1 319.9 L701.0 328.4" fill="none" stroke="#fff" stroke-width="2"/><path d="M734.2 309.5 L750.0 312.6 L772.1 328.4" fill="none" stroke="#fff" stroke-width="2"/><path d="M577.8 386.9 L644.1 399.5 L648.9 371.1 L699.4 371.1" fill="none" stroke="#fff" stroke-width="2"/><path d="M577.8 386.9 L587.3 426.3 L628.3 432.7 L644.1 399.5" fill="none" stroke="#fff" stroke-width="2"/><path d="M628.3 432.7 L644.1 469.0 L686.8 478.5" fill="none" stroke="#fff" stroke-width="2"/><path d="M587.3 426.3 L573.1 424.8 L532.0 462.7" fill="none" stroke="#fff" stroke-width="2"/><path d="M532.0 475.3 L547.8 478.5 L573.1 472.1 L644.1 469.0" fill="none" stroke="#fff" stroke-width="2"/><path d="M644.1 469.0 L639.4 511.6 L658.4 519.5" fill="none" stroke="#fff" stroke-width="2"/><path d="M639.4 511.6 L569.9 527.4 L554.1 514.8 L532.0 516.4" fill="none" stroke="#fff" stroke-width="2"/><path d="M554.1 514.8 L551.0 497.4 L558.8 476.9" fill="none" stroke="#fff" stroke-width="2"/><path d="M569.9 527.4 L569.9 549.5 L609.4 576.4" fill="none" stroke="#fff" stroke-width="2"/><path d="M569.9 549.5 L547.8 571.6 L584.1 585.9 L590.4 598.5" fill="none" stroke="#fff" stroke-width="2"/><path d="M547.8 571.6 L541.5 611.1" fill="none" stroke="#fff" stroke-width="2"/><path d="M599.9 360.0 L612.5 372.6 L626.8 363.2" fill="none" stroke="#fff" stroke-width="2"/><path d="M232.0 714.0 L320.4 707.7 L339.3 755.1 L333.0 793.0" fill="none" stroke="#fff" stroke-width="2"/><path d="M339.3 755.1 L377.2 729.8 L358.3 682.5" fill="none" stroke="#fff" stroke-width="2"/><path d="M377.2 729.8 L386.7 748.8 L434.0 698.2" fill="none" stroke="#fff" stroke-width="2"/><path d="M232.0 805.6 L326.7 793.0 L358.3 780.3" fill="none" stroke="#fff" stroke-width="2"/><path d="M250.9 802.4 L291.9 875.1" fill="none" stroke="#fff" stroke-width="2"/><circle cx="368.8" cy="112.4" r="16.8" fill="#7a9a70" fill-opacity="0.6" stroke="#3c4a3a" stroke-width="1"/><circle cx="393.8" cy="126.7" r="8.2" fill="#7a9a70" fill-opacity="0.6" stroke="#3c4a3a" stroke-width="1"/><circle cx="367.0" cy="155.3" r="19.6" fill="#7a9a70" fill-opacity="0.6" stroke="#3c4a3a" stroke-width="1"/><circle cx="403.4" cy="149.9" r="16.8" fill="#7a9a70" fill-opacity="0.6" stroke="#3c4a3a" stroke-width="1"/><circle cx="400.2" cy="176.7" r="20.7" fill="#7a9a70" fill-opacity="0.6" stroke="#3c4a3a" stroke-width="1"/><circle cx="437.7" cy="197.4" r="20.7" fill="#7a9a70" fill-opacity="0.6" stroke="#3c4a3a" stroke-width="1"/><circle cx="500.2" cy="144.6" r="16.8" fill="#7a9a70" fill-opacity="0.6" stroke="#3c4a3a" stroke-width="1"/><circle cx="509.1" cy="167.8" r="12.5" fill="#7a9a70" fill-opacity="0.6" stroke="#3c4a3a" stroke-width="1"/><circle cx="483.1" cy="214.2" r="16.8" fill="#7a9a70" fill-opacity="0.6" stroke="#3c4a3a" stroke-width="1"/><circle cx="529.5" cy="221.4" r="20.7" fill="#7a9a70" fill-opacity="0.6" stroke="#3c4a3a" stroke-width="1"/><circle cx="575.2" cy="212.4" r="12.5" fill="#7a9a70" fill-opacity="0.6" stroke="#3c4a3a" stroke-width="1"/><circle cx="587.7" cy="158.1" r="20.7" fill="#7a9a70" fill-opacity="0.6" stroke="#3c4a3a" stroke-width="1"/><circle cx="657.4" cy="149.2" r="20.7" fill="#7a9a70" fill-opacity="0.6" stroke="#3c4a3a" stroke-width="1"/><circle cx="712.7" cy="133.9" r="12.5" fill="#7a9a70" fill-opacity="0.6" stroke="#3c4a3a" stroke-width="1"/><circle cx="756.3" cy="109.9" r="20.7" fill="#7a9a70" fill-opacity="0.6" stroke="#3c4a3a" stroke-width="1"/><circle cx="799.1" cy="101.7" r="8.2" fill="#7a9a70" fill-opacity="0.6" stroke="#3c4a3a" stroke-width="1"/><circle cx="843.1" cy="63.5" r="8.2" fill="#7a9a70" fill-opacity="0.6" stroke="#3c4a3a" stroke-width="1"/><circle cx="825.2" cy="133.1" r="12.5" fill="#7a9a70" fill-opacity="0.6" stroke="#3c4a3a" stroke-width="1"/><circle cx="763.4" cy="198.9" r="12.5" fill="#7a9a70" fill-opacity="0.6" stroke="#3c4a3a" stroke-width="1"/><circle cx="814.5" cy="215.3" r="8.2" fill="#7a9a70" fill-opacity="0.6" stroke="#3c4a3a" stroke-width="1"/><circle cx="638.4" cy="220.6" r="16.8" fill="#7a9a70" fill-opacity="0.6" stroke="#3c4a3a" stroke-width="1"/><circle cx="702.7" cy="218.5" r="16.8" fill="#7a9a70" fill-opacity="0.6" stroke="#3c4a3a" stroke-width="1"/><circle cx="585.6" cy="263.1" r="12.5" fill="#7a9a70" fill-opacity="0.6" stroke="#3c4a3a" stroke-width="1"/><circle cx="646.6" cy="264.9" r="20.7" fill="#7a9a70" fill-opacity="0.6" stroke="#3c4a3a" stroke-width="1"/><circle cx="718.1" cy="262.4" r="20.7" fill="#7a9a70" fill-opacity="0.6" stroke="#3c4a3a" stroke-width="1"/><circle cx="767.0" cy="286.0" r="12.5" fill="#7a9a70" fill-opacity="0.6" stroke="#3c4a3a" stroke-width="1"/><circle cx="693.8" cy="304.2" r="8.2" fill="#7a9a70" fill-opacity="0.6" stroke="#3c4a3a" stroke-width="1"/><circle cx="730.8" cy="344.6" r="8.2" fill="#7a9a70" fill-opacity="0.6" stroke="#3c4a3a" stroke-width="1"/><circle cx="620.3" cy="352.2" r="12.6" fill="#7a9a70" fill-opacity="0.6" stroke="#3c4a3a" stroke-width="1"/><circle cx="650.0" cy="359.1" r="20.8" fill="#7a9a70" fill-opacity="0.6" stroke="#3c4a3a" stroke-width="1"/><circle cx="608.9" cy="409.0" r="17.0" fill="#7a9a70" fill-opacity="0.6" stroke="#3c4a3a" stroke-width="1"/><circle cx="550.9" cy="428.6" r="17.0" fill="#7a9a70" fill-opacity="0.6" stroke="#3c4a3a" stroke-width="1"/><circle cx="586.8" cy="452.0" r="20.8" fill="#7a9a70" fill-opacity="0.6" stroke="#3c4a3a" stroke-width="1"/><circle cx="681.6" cy="419.1" r="20.8" fill="#7a9a70" fill-opacity="0.6" stroke="#3c4a3a" stroke-width="1"/><circle cx="597.0" cy="494.9" r="8.2" fill="#7a9a70" fill-opacity="0.6" stroke="#3c4a3a" stroke-width="1"/><circle cx="658.8" cy="493.0" r="8.2" fill="#7a9a70" fill-opacity="0.6" stroke="#3c4a3a" stroke-width="1"/><circle cx="506.0" cy="497.4" r="17.0" fill="#7a9a70" fill-opacity="0.6" stroke="#3c4a3a" stroke-width="1"/><circle cx="420.1" cy="500.0" r="8.2" fill="#7a9a70" fill-opacity="0.6" stroke="#3c4a3a" stroke-width="1"/><circle cx="370.9" cy="526.5" r="17.0" fill="#7a9a70" fill-opacity="0.6" stroke="#3c4a3a" stroke-width="1"/><circle cx="413.8" cy="530.3" r="17.0" fill="#7a9a70" fill-opacity="0.6" stroke="#3c4a3a" stroke-width="1"/><circle cx="303.9" cy="541.6" r="8.2" fill="#7a9a70" fill-opacity="0.6" stroke="#3c4a3a" stroke-width="1"/><circle cx="338.7" cy="554.9" r="17.0" fill="#7a9a70" fill-opacity="0.6" stroke="#3c4a3a" stroke-width="1"/><circle cx="384.8" cy="553.0" r="17.0" fill="#7a9a70" fill-opacity="0.6" stroke="#3c4a3a" stroke-width="1"/><circle cx="453.0" cy="552.4" r="12.6" fill="#7a9a70" fill-opacity="0.6" stroke="#3c4a3a" stroke-width="1"/><circle cx="515.5" cy="548.0" r="8.2" fill="#7a9a70" fill-opacity="0.6" stroke="#3c4a3a" stroke-width="1"/><circle cx="609.6" cy="538.5" r="17.0" fill="#7a9a70" fill-opacity="0.6" stroke="#3c4a3a" stroke-width="1"/><circle cx="398.0" cy="587.7" r="20.8" fill="#7a9a70" fill-opacity="0.6" stroke="#3c4a3a" stroke-width="1"/><circle cx="279.3" cy="577.0" r="4.4" fill="#7a9a70" fill-opacity="0.6" stroke="#3c4a3a" stroke-width="1"/><circle cx="317.8" cy="591.5" r="12.6" fill="#7a9a70" fill-opacity="0.6" stroke="#3c4a3a" stroke-width="1"/><circle cx="347.5" cy="616.2" r="12.6" fill="#7a9a70" fill-opacity="0.6" stroke="#3c4a3a" stroke-width="1"/><circle cx="520.5" cy="579.5" r="4.4" fill="#7a9a70" fill-opacity="0.6" stroke="#3c4a3a" stroke-width="1"/><circle cx="579.3" cy="570.1" r="4.4" fill="#7a9a70" fill-opacity="0.6" stroke="#3c4a3a" stroke-width="1"/><circle cx="517.4" cy="604.8" r="8.2" fill="#7a9a70" fill-opacity="0.6" stroke="#3c4a3a" stroke-width="1"/><circle cx="561.0" cy="599.1" r="4.4" fill="#7a9a70" fill-opacity="0.6" stroke="#3c4a3a" stroke-width="1"/><circle cx="476.3" cy="617.4" r="8.2" fill="#7a9a70" fill-opacity="0.6" stroke="#3c4a3a" stroke-width="1"/><circle cx="420.8" cy="636.4" r="12.6" fill="#7a9a70" fill-opacity="0.6" stroke="#3c4a3a" stroke-width="1"/><circle cx="261.0" cy="624.4" r="4.4" fill="#7a9a70" fill-opacity="0.6" stroke="#3c4a3a" stroke-width="1"/><circle cx="277.4" cy="660.4" r="12.6" fill="#7a9a70" fill-opacity="0.6" stroke="#3c4a3a" stroke-width="1"/><circle cx="351.9" cy="660.4" r="12.6" fill="#7a9a70" fill-opacity="0.6" stroke="#3c4a3a" stroke-width="1"/><circle cx="523.1" cy="635.1" r="17.0" fill="#7a9a70" fill-opacity="0.6" stroke="#3c4a3a" stroke-width="1"/><circle cx="487.1" cy="652.8" r="20.8" fill="#7a9a70" fill-opacity="0.6" stroke="#3c4a3a" stroke-width="1"/><circle cx="505.4" cy="661.0" r="20.8" fill="#7a9a70" fill-opacity="0.6" stroke="#3c4a3a" stroke-width="1"/><circle cx="447.9" cy="671.1" r="4.4" fill="#7a9a70" fill-opacity="0.6" stroke="#3c4a3a" stroke-width="1"/><circle cx="465.6" cy="683.1" r="4.4" fill="#7a9a70" fill-opacity="0.6" stroke="#3c4a3a" stroke-width="1"/><circle cx="424.6" cy="687.5" r="4.4" fill="#7a9a70" fill-opacity="0.6" stroke="#3c4a3a" stroke-width="1"/><circle cx="299.5" cy="689.4" r="8.2" fill="#7a9a70" fill-opacity="0.6" stroke="#3c4a3a" stroke-width="1"/><circle cx="390.5" cy="705.2" r="4.4" fill="#7a9a70" fill-opacity="0.6" stroke="#3c4a3a" stroke-width="1"/><circle cx="341.2" cy="717.2" r="8.2" fill="#7a9a70" fill-opacity="0.6" stroke="#3c4a3a" stroke-width="1"/><circle cx="410.7" cy="722.9" r="4.4" fill="#7a9a70" fill-opacity="0.6" stroke="#3c4a3a" stroke-width="1"/><circle cx="281.8" cy="755.1" r="4.4" fill="#7a9a70" fill-opacity="0.6" stroke="#3c4a3a" stroke-width="1"/><circle cx="361.4" cy="751.3" r="4.4" fill="#7a9a70" fill-opacity="0.6" stroke="#3c4a3a" stroke-width="1"/><circle cx="345.6" cy="784.1" r="4.4" fill="#7a9a70" fill-opacity="0.6" stroke="#3c4a3a" stroke-width="1"/><circle cx="295.7" cy="815.1" r="4.4" fill="#7a9a70" fill-opacity="0.6" stroke="#3c4a3a" stroke-width="1"/><circle cx="259.7" cy="844.8" r="4.4" fill="#7a9a70" fill-opacity="0.6" stroke="#3c4a3a" stroke-width="1"/></svg><svg style="position:absolute;left:1688px;top:420px;" width="275" height="56" viewBox="0 0 275 56"><rect x="3.7" y="20" width="47.3" height="15" fill="#ee3e3e"/><rect x="20" y="4" width="14.7" height="48" fill="#ee3e3e"/><circle cx="84.8" cy="27.6" r="24" fill="#ee3e3e"/><circle cx="92" cy="27.3" r="20" fill="#fff"/><g fill="#333"><rect x="115.6" y="4.3" width="10.9" height="47"/><rect x="137" y="4.3" width="11" height="47"/><rect x="137" y="4.3" width="35" height="8.5"/><rect x="137" y="24.9" width="32" height="9"/><path fill-rule="evenodd" d="M181 4.3 H206 A15 16.8 0 0 1 206 37.9 H191.5 V51.3 H181 Z M191.5 12.8 H202 A8 7.95 0 0 1 202 28.7 H191.5 Z"/><path d="M200.6 34 L212 34 L221.5 51.3 L209.8 51.3 Z"/></g><path d="M262.5 15.8 A16.6 19.1 0 1 0 262.5 39.4" fill="none" stroke="#333" stroke-width="10.6"/></svg><div style="position:absolute;left:1529px;top:530px;width:287px;height:660px;border:8px solid #e0141e;box-sizing:border-box"></div><div style="position:absolute;left:1552px;top:549px;width:238px;height:603px;border:1.5px solid #4a90d9;box-sizing:border-box"></div><div style="position:absolute;left:1552px;top:549px;width:20px;height:20px;border:1.5px solid #4a90d9;box-sizing:border-box;background:rgba(255,255,255,0.0)"></div><div style="position:absolute;left:1552px;top:840px;width:20px;height:20px;border:1.5px solid #4a90d9;box-sizing:border-box;background:rgba(255,255,255,0.0)"></div><div style="position:absolute;left:1552px;top:1132px;width:20px;height:20px;border:1.5px solid #4a90d9;box-sizing:border-box;background:rgba(255,255,255,0.0)"></div><div style="position:absolute;left:1661px;top:549px;width:20px;height:20px;border:1.5px solid #4a90d9;box-sizing:border-box;background:rgba(255,255,255,0.0)"></div><div style="position:absolute;left:1661px;top:1132px;width:20px;height:20px;border:1.5px solid #4a90d9;box-sizing:border-box;background:rgba(255,255,255,0.0)"></div><div style="position:absolute;left:1770px;top:549px;width:20px;height:20px;border:1.5px solid #4a90d9;box-sizing:border-box;background:rgba(255,255,255,0.0)"></div><div style="position:absolute;left:1770px;top:840px;width:20px;height:20px;border:1.5px solid #4a90d9;box-sizing:border-box;background:rgba(255,255,255,0.0)"></div><div style="position:absolute;left:1770px;top:1132px;width:20px;height:20px;border:1.5px solid #4a90d9;box-sizing:border-box;background:rgba(255,255,255,0.0)"></div><div style="position:absolute;left:1563px;top:583.9px;font-size:25.2px;line-height:1;color:#000;font-weight:400;white-space:nowrap;">Centroids</div><svg style="position:absolute;left:1560px;top:611px;" width="46" height="46" viewBox="0 0 46 46"><circle cx="23.5" cy="23.0" r="5.3" fill="#b8c9b2" stroke="#6a7a66" stroke-width="1"/></svg><div style="position:absolute;left:1617px;top:622.9px;font-size:25.2px;line-height:1;color:#000;font-weight:400;white-space:nowrap;">0 - 9,2</div><svg style="position:absolute;left:1560px;top:651px;" width="46" height="46" viewBox="0 0 46 46"><circle cx="23.5" cy="22.6" r="9" fill="#b8c9b2" stroke="#6a7a66" stroke-width="1"/></svg><div style="position:absolute;left:1617px;top:662.5px;font-size:25.2px;line-height:1;color:#000;font-weight:400;white-space:nowrap;">9,2 - 45,4</div><svg style="position:absolute;left:1560px;top:689px;" width="46" height="46" viewBox="0 0 46 46"><circle cx="23.5" cy="23.5" r="12.8" fill="#b8c9b2" stroke="#6a7a66" stroke-width="1"/></svg><div style="position:absolute;left:1617px;top:701.4px;font-size:25.2px;line-height:1;color:#000;font-weight:400;white-space:nowrap;">45,4 - 81,8</div><svg style="position:absolute;left:1560px;top:735px;" width="46" height="46" viewBox="0 0 46 46"><circle cx="23.5" cy="22.8" r="17.6" fill="#b8c9b2" stroke="#6a7a66" stroke-width="1"/></svg><div style="position:absolute;left:1617px;top:746.7px;font-size:25.2px;line-height:1;color:#000;font-weight:400;white-space:nowrap;">81,8 - 148</div><svg style="position:absolute;left:1560px;top:787px;" width="46" height="46" viewBox="0 0 46 46"><circle cx="23.5" cy="23.0" r="21.3" fill="#b8c9b2" stroke="#6a7a66" stroke-width="1"/></svg><div style="position:absolute;left:1617px;top:798.9px;font-size:25.2px;line-height:1;color:#000;font-weight:400;white-space:nowrap;">148 - 486</div><div style="position:absolute;left:1563px;top:851.9px;font-size:25.2px;line-height:1;color:#000;font-weight:400;white-space:nowrap;">Google Roads</div><div style="position:absolute;left:1563px;top:927px;width:41px;height:22px;background:#979797"></div><div style="position:absolute;left:1617px;top:926.4px;font-size:25.2px;line-height:1;color:#000;font-weight:400;white-space:nowrap;">somalia_adm2</div><div style="position:absolute;left:1560px;top:961px;width:48px;height:30px;background:#c2b898;border:4.5px solid #1e1e1e;border-radius:5px;box-sizing:border-box"></div><div style="position:absolute;left:1617px;top:964.4px;font-size:25.2px;line-height:1;color:#000;font-weight:400;white-space:nowrap;">Dissolved</div><div style="position:absolute;left:1563px;top:1008.9px;font-size:25.2px;line-height:1;color:#000;font-weight:400;white-space:nowrap;">Bing Aerial</div><div style="position:absolute;left:1563px;top:1086.9px;font-size:25.2px;line-height:1;color:#000;font-weight:400;white-space:nowrap;">OSM Standard</div><div style="position:absolute;left:2094px;top:235px;width:782px;height:1536px;background:#f0f0f0"></div><div style="position:absolute;left:2094px;top:284px;width:782px;height:2px;background:#c6c6c6"></div><div style="position:absolute;left:2198px;top:243px;width:172px;height:43px;background:#e2e2e2;border:2px solid #c9c9c9;border-bottom:none;border-radius:5px 5px 0 0;box-sizing:border-box"></div><div style="position:absolute;left:2094px;top:240px;width:105px;height:47px;background:linear-gradient(#fbfbfb,#f0f0f0);border:2px solid #c9c9c9;border-bottom:none;border-radius:5px 5px 0 0;box-sizing:border-box"></div><div style="position:absolute;left:2117px;top:254.4px;font-size:22.3px;line-height:1;color:#000;font-weight:400;white-space:nowrap;">Items</div><div style="position:absolute;left:2221px;top:256.6px;font-size:21.9px;line-height:1;color:#000;font-weight:400;white-space:nowrap;">Undo History</div><div style="position:absolute;left:2101px;top:297.6px;font-size:21.9px;line-height:1;color:#000;font-weight:400;white-space:nowrap;">Items</div><svg style="position:absolute;left:2827px;top:298px;" width="22" height="22" viewBox="0 0 22 22"><rect x="1" y="1" width="20" height="20" rx="3" fill="#f4f4f4" stroke="#9a9a9a" stroke-width="1.5"/><rect x="5" y="9" width="8" height="8" fill="none" stroke="#777" stroke-width="1.5"/><path d="M9 9 V5 H17 V13 H13" fill="none" stroke="#777" stroke-width="1.5"/></svg><svg style="position:absolute;left:2854px;top:298px;" width="22" height="22" viewBox="0 0 22 22"><rect x="1" y="1" width="24" height="20" rx="3" fill="#f4f4f4" stroke="#9a9a9a" stroke-width="1.5"/><path d="M6 5 L16 15 M16 5 L6 15" stroke="#444" stroke-width="3"/></svg><div style="position:absolute;left:2093px;top:327px;width:783px;height:657px;background:#fff;border:1.5px solid #a8a8a8;border-right:none;box-sizing:border-box"></div><div style="position:absolute;left:2095px;top:329px;width:781px;height:38px;background:linear-gradient(#fbfbfb,#ececec);border-bottom:2px solid #b4b4b4;box-sizing:border-box"></div><div style="position:absolute;left:2152px;top:331px;width:2px;height:34px;background:#d8d8d8"></div><div style="position:absolute;left:2213px;top:331px;width:2px;height:34px;background:#d8d8d8"></div><svg style="position:absolute;left:2100px;top:337px;" width="32" height="24" viewBox="0 0 32 24"><path d="M1 12 Q16 -2 31 12 Q16 24 1 12 Z" fill="#fff" stroke="#666" stroke-width="1.5"/><circle cx="15" cy="11" r="6" fill="#777"/><circle cx="15" cy="11" r="3" fill="#222"/></svg><svg style="position:absolute;left:2162px;top:334px;" width="26" height="32" viewBox="0 0 26 32"><path d="M5 14 V9 a8 8 0 0 1 16 0 V14" fill="none" stroke="#666" stroke-width="3"/><rect x="1" y="14" width="24" height="17" rx="4" fill="#555"/></svg><div style="position:absolute;left:2219px;top:336.6px;font-size:21.9px;line-height:1;color:#000;font-weight:400;white-space:nowrap;">Item</div><div style="position:absolute;left:2095px;top:367px;width:781px;height:38px;background:#efefef"></div><svg style="position:absolute;left:2101px;top:374px;" width="28" height="28" viewBox="0 0 28 28"><rect x="1" y="1" width="25" height="25" fill="#fff" stroke="#adadad" stroke-width="2"/><path d="M7 14 L12 21 L21 5" fill="none" stroke="#111" stroke-width="3.2"/></svg><svg style="position:absolute;left:2161px;top:374px;" width="28" height="28" viewBox="0 0 28 28"><rect x="1" y="1" width="25" height="25" fill="#fff" stroke="#adadad" stroke-width="2"/></svg><div style="position:absolute;left:2266px;top:373.2px;font-size:22.6px;line-height:1;color:#000;font-weight:700;white-space:nowrap;">&lt;Legend&gt;</div><svg style="position:absolute;left:2101px;top:410px;" width="28" height="28" viewBox="0 0 28 28"><rect x="1" y="1" width="25" height="25" fill="#fff" stroke="#adadad" stroke-width="2"/><path d="M7 14 L12 21 L21 5" fill="none" stroke="#111" stroke-width="3.2"/></svg><svg style="position:absolute;left:2161px;top:410px;" width="28" height="28" viewBox="0 0 28 28"><rect x="1" y="1" width="25" height="25" fill="#fff" stroke="#adadad" stroke-width="2"/></svg><div style="position:absolute;left:2266px;top:408.1px;font-size:21.9px;line-height:1;color:#000;font-weight:400;white-space:nowrap;">&lt;Picture&gt;</div><svg style="position:absolute;left:2101px;top:446px;" width="28" height="28" viewBox="0 0 28 28"><rect x="1" y="1" width="25" height="25" fill="#fff" stroke="#adadad" stroke-width="2"/><path d="M7 14 L12 21 L21 5" fill="none" stroke="#111" stroke-width="3.2"/></svg><svg style="position:absolute;left:2161px;top:446px;" width="28" height="28" viewBox="0 0 28 28"><rect x="1" y="1" width="25" height="25" fill="#fff" stroke="#adadad" stroke-width="2"/></svg><div style="position:absolute;left:2266px;top:444.1px;font-size:21.9px;line-height:1;color:#000;font-weight:400;white-space:nowrap;">Map Title</div><svg style="position:absolute;left:2101px;top:482px;" width="28" height="28" viewBox="0 0 28 28"><rect x="1" y="1" width="25" height="25" fill="#fff" stroke="#adadad" stroke-width="2"/><path d="M7 14 L12 21 L21 5" fill="none" stroke="#111" stroke-width="3.2"/></svg><svg style="position:absolute;left:2161px;top:482px;" width="28" height="28" viewBox="0 0 28 28"><rect x="1" y="1" width="25" height="25" fill="#fff" stroke="#adadad" stroke-width="2"/></svg><div style="position:absolute;left:2266px;top:480.1px;font-size:21.9px;line-height:1;color:#000;font-weight:400;white-space:nowrap;">Map 1</div><svg style="position:absolute;left:2222px;top:373px;" width="30" height="30" viewBox="0 0 30 30"><rect x="1" y="1" width="7" height="7" fill="#eee" stroke="#555" stroke-width="1.5"/><rect x="1" y="11" width="7" height="7" fill="#eee" stroke="#555" stroke-width="1.5"/><rect x="1" y="21" width="7" height="7" fill="#eee" stroke="#555" stroke-width="1.5"/><path d="M11 4 H22 M11 14 H28 M11 24 H18" stroke="#bbb" stroke-width="3"/></svg><svg style="position:absolute;left:2222px;top:413px;" width="30" height="22" viewBox="0 0 30 22"><rect x="1" y="1" width="28" height="19" fill="#f4f4f4" stroke="#888" stroke-width="1.5"/><path d="M1 1 H29 V11 Q15 2 1 9 Z" fill="#333"/></svg><svg style="position:absolute;left:2222px;top:447px;" width="30" height="26" viewBox="0 0 30 26"><rect x="1" y="1" width="28" height="23" fill="#f6f6f6" stroke="#888" stroke-width="1.5"/><text x="15" y="20" font-size="19" text-anchor="middle" font-family="Liberation Serif" fill="#222">T</text></svg><svg style="position:absolute;left:2222px;top:482px;" width="30" height="26" viewBox="0 0 30 26"><path d="M4 4 Q4 1 7 1 H28 V24 H7 Q4 24 4 25 Z" fill="#d8d8d8" stroke="#888" stroke-width="1.5"/><path d="M4 4 V25" stroke="#888"/></svg><svg style="position:absolute;left:2473px;top:990px;" width="36" height="6" viewBox="0 0 36 6"><rect x="0" y="0" width="2" height="2" fill="#a8a8a8"/><rect x="6" y="0" width="2" height="2" fill="#a8a8a8"/><rect x="12" y="0" width="2" height="2" fill="#a8a8a8"/><rect x="18" y="0" width="2" height="2" fill="#a8a8a8"/><rect x="24" y="0" width="2" height="2" fill="#a8a8a8"/><rect x="30" y="0" width="2" height="2" fill="#a8a8a8"/></svg><svg style="position:absolute;left:2086px;top:992px;" width="6" height="36" viewBox="0 0 6 36"><rect x="0" y="0" width="2" height="2" fill="#b8b8b8"/><rect x="0" y="6" width="2" height="2" fill="#b8b8b8"/><rect x="0" y="12" width="2" height="2" fill="#b8b8b8"/><rect x="0" y="18" width="2" height="2" fill="#b8b8b8"/><rect x="0" y="24" width="2" height="2" fill="#b8b8b8"/><rect x="0" y="30" width="2" height="2" fill="#b8b8b8"/></svg><div style="position:absolute;left:2094px;top:1043px;width:782px;height:2px;background:#c6c6c6"></div><div style="position:absolute;left:2094px;top:1002px;width:114px;height:43px;background:#e2e2e2;border:2px solid #c9c9c9;border-bottom:none;border-radius:5px 5px 0 0;box-sizing:border-box"></div><div style="position:absolute;left:2406px;top:1002px;width:113px;height:43px;background:#e2e2e2;border:2px solid #c9c9c9;border-bottom:none;border-radius:5px 5px 0 0;box-sizing:border-box"></div><div style="position:absolute;left:2207px;top:998px;width:200px;height:48px;background:linear-gradient(#fbfbfb,#f0f0f0);border:2px solid #c9c9c9;border-bottom:none;border-radius:5px 5px 0 0;box-sizing:border-box"></div><div style="position:absolute;left:2118px;top:1014.6px;font-size:21.9px;line-height:1;color:#000;font-weight:400;white-space:nowrap;">Layout</div><div style="position:absolute;left:2231px;top:1012.6px;font-size:21.9px;line-height:1;color:#000;font-weight:400;white-space:nowrap;">Item Properties</div><div style="position:absolute;left:2429px;top:1014.6px;font-size:21.9px;line-height:1;color:#000;font-weight:400;white-space:nowrap;">Guides</div><div style="position:absolute;left:2101px;top:1056.6px;font-size:21.9px;line-height:1;color:#000;font-weight:400;white-space:nowrap;">Item Properties</div><svg style="position:absolute;left:2827px;top:1057px;" width="22" height="22" viewBox="0 0 22 22"><rect x="1" y="1" width="20" height="20" rx="3" fill="#f4f4f4" stroke="#9a9a9a" stroke-width="1.5"/><rect x="5" y="9" width="8" height="8" fill="none" stroke="#777" stroke-width="1.5"/><path d="M9 9 V5 H17 V13 H13" fill="none" stroke="#777" stroke-width="1.5"/></svg><svg style="position:absolute;left:2854px;top:1057px;" width="22" height="22" viewBox="0 0 22 22"><rect x="1" y="1" width="24" height="20" rx="3" fill="#f4f4f4" stroke="#9a9a9a" stroke-width="1.5"/><path d="M6 5 L16 15 M16 5 L6 15" stroke="#444" stroke-width="3"/></svg><div style="position:absolute;left:2093px;top:1098px;width:783px;height:37px;background:#a0a0a0"></div><div style="position:absolute;left:2104px;top:1106.4px;font-size:22.3px;line-height:1;color:#000;font-weight:700;white-space:nowrap;">Legend</div><div style="position:absolute;left:2093px;top:1135px;width:1.5px;height:636px;background:#a8a8a8"></div><div style="position:absolute;left:2852px;top:1137px;width:24px;height:634px;background:#e8e8e8;border-left:1px solid #d0d0d0;box-sizing:border-box"></div><div style="position:absolute;left:2853px;top:1162px;width:23px;height:158px;background:#fff"></div><svg style="position:absolute;left:2855px;top:1141px;" width="20" height="14" viewBox="0 0 20 14"><path d="M2 12 H18 L10 3 Z" fill="#555"/></svg><svg style="position:absolute;left:2855px;top:1748px;" width="20" height="14" viewBox="0 0 20 14"><path d="M2 2 H18 L10 11 Z" fill="#555"/></svg><svg style="position:absolute;left:2121px;top:1170px;" width="24" height="16" viewBox="0 0 24 16"><path d="M1 1 H23 L12 15 Z" fill="#222"/></svg><div style="position:absolute;left:2162px;top:1164.2px;font-size:22.6px;line-height:1;color:#000;font-weight:700;white-space:nowrap;">Main Properties</div><div style="position:absolute;left:2120px;top:1195px;width:709px;height:330px;background:#ebebeb;border:2px solid #dedede;border-radius:4px;box-sizing:border-box"></div><div style="position:absolute;left:2145px;top:1233.6px;font-size:21.9px;line-height:1;color:#000;font-weight:400;white-space:nowrap;"><u>T</u>itle</div><div style="position:absolute;left:2285px;top:1223px;width:443px;height:42px;background:#fff;border:2px solid #b0b0b0;border-radius:5px;box-sizing:border-box"></div><svg style="position:absolute;left:2746px;top:1226px;" width="50" height="36" viewBox="0 0 50 36"><path d="M10 4 L2 14 L10 24 Z" fill="#888"/><rect x="10" y="2" width="24" height="28" fill="#f4f4f4" stroke="#888" stroke-width="2"/><path d="M14 9 H28 M14 20 H28" stroke="#555" stroke-width="3"/><path d="M30 22 H44 L37 30 Z" fill="#222"/></svg><div style="position:absolute;left:2145px;top:1295.6px;font-size:21.9px;line-height:1;color:#000;font-weight:400;white-space:nowrap;">Map</div><div style="position:absolute;left:2285px;top:1282px;width:516px;height:47px;background:linear-gradient(#fafafa,#ebebeb);border:2px solid #b4b4b4;border-radius:5px;box-sizing:border-box"></div><svg style="position:absolute;left:2769px;top:1300.5px;" width="18" height="10" viewBox="0 0 18 10"><path d="M0 0 H18 L9 10 Z" fill="#333"/></svg><svg style="position:absolute;left:2299px;top:1293px;" width="28" height="28" viewBox="0 0 28 28"><path d="M4 4 Q4 1 7 1 H27 V26 H7 Q4 26 4 27 Z" fill="#d8d8d8" stroke="#888" stroke-width="1.5"/><path d="M4 4 V27" stroke="#888"/></svg><div style="position:absolute;left:2335px;top:1294.6px;font-size:21.9px;line-height:1;color:#000;font-weight:400;white-space:nowrap;">Map 1</div><div style="position:absolute;left:2145px;top:1353.6px;font-size:21.9px;line-height:1;color:#000;font-weight:400;white-space:nowrap;">Wrap text on</div><div style="position:absolute;left:2285px;top:1342px;width:516px;height:43px;background:#fff;border:2px solid #b0b0b0;border-radius:5px;box-sizing:border-box"></div><div style="position:absolute;left:2145px;top:1411.6px;font-size:21.9px;line-height:1;color:#000;font-weight:400;white-space:nowrap;">Arrangement</div><div style="position:absolute;left:2285px;top:1399px;width:516px;height:47px;background:linear-gradient(#fafafa,#ebebeb);border:2px solid #b4b4b4;border-radius:5px;box-sizing:border-box"></div><svg style="position:absolute;left:2769px;top:1417.5px;" width="18" height="10" viewBox="0 0 18 10"><path d="M0 0 H18 L9 10 Z" fill="#333"/></svg><svg style="position:absolute;left:2299px;top:1408px;" width="10" height="28" viewBox="0 0 10 28"><rect x="0" y="0" width="9" height="7" fill="#777"/><rect x="0" y="10" width="9" height="7" fill="#777"/><rect x="0" y="20" width="9" height="7" fill="#777"/></svg><div style="position:absolute;left:2335px;top:1411.6px;font-size:21.9px;line-height:1;color:#000;font-weight:400;white-space:nowrap;">Symbols on Left</div><svg style="position:absolute;left:2145px;top:1465px;" width="28" height="28" viewBox="0 0 28 28"><rect x="1" y="1" width="25" height="25" fill="#fff" stroke="#adadad" stroke-width="2"/><path d="M7 14 L12 21 L21 5" fill="none" stroke="#111" stroke-width="3.2"/></svg><div style="position:absolute;left:2183px;top:1467.6px;font-size:21.9px;line-height:1;color:#000;font-weight:400;white-space:nowrap;">Resize to fit contents</div><svg style="position:absolute;left:2121px;top:1550px;" width="24" height="16" viewBox="0 0 24 16"><path d="M1 1 H23 L12 15 Z" fill="#222"/></svg><div style="position:absolute;left:2162px;top:1543.2px;font-size:22.6px;line-height:1;color:#000;font-weight:700;white-space:nowrap;">Legend Items</div><div style="position:absolute;left:2120px;top:1575px;width:709px;height:220px;background:#ebebeb;border:2px solid #dedede;border-radius:4px;box-sizing:border-box"></div><svg style="position:absolute;left:2145px;top:1605px;" width="28" height="28" viewBox="0 0 28 28"><rect x="1" y="1" width="25" height="25" fill="#fff" stroke="#adadad" stroke-width="2"/><path d="M7 14 L12 21 L21 5" fill="none" stroke="#111" stroke-width="3.2"/></svg><div style="position:absolute;left:2183px;top:1607.6px;font-size:21.9px;line-height:1;color:#000;font-weight:400;white-space:nowrap;">Auto update</div><div style="position:absolute;left:2673px;top:1599px;width:128px;height:41px;background:linear-gradient(#f6f6f6,#ececec);border:2px solid #c4c4c4;border-radius:5px;box-sizing:border-box"></div><div style="position:absolute;left:2688px;top:1608.6px;font-size:21.9px;line-height:1;color:#8a8a8a;font-weight:400;white-space:nowrap;">Update All</div><div style="position:absolute;left:2145px;top:1652px;width:656px;height:160px;background:#fff;border:2px solid #cfcfcf;box-sizing:border-box"></div><svg style="position:absolute;left:2161px;top:1664px;" width="12" height="16" viewBox="0 0 12 16"><path d="M1 1 V15 L11 8 Z" fill="#555"/></svg><svg style="position:absolute;left:2193px;top:1656px;" width="32" height="32" viewBox="0 0 32 32"><circle cx="22" cy="4" r="3" fill="none" stroke="#777" stroke-width="1.5"/><circle cx="10" cy="15" r="3" fill="none" stroke="#777" stroke-width="1.5"/><circle cx="7" cy="28" r="3" fill="none" stroke="#777" stroke-width="1.5"/></svg><div style="position:absolute;left:2237px;top:1661.6px;font-size:21.9px;line-height:1;color:#000;font-weight:400;white-space:nowrap;">Centroids</div><svg style="position:absolute;left:2159px;top:1702px;" width="16" height="12" viewBox="0 0 16 12"><path d="M1 1 H15 L8 10 Z" fill="#555"/></svg><svg style="position:absolute;left:2196px;top:1696px;" width="28" height="28" viewBox="0 0 28 28"><rect x="0" y="0" width="28" height="28" fill="#a9c6e6"/><rect x="0" y="0" width="9" height="9" fill="#223350"/><rect x="19" y="0" width="9" height="9" fill="#223350"/><rect x="9" y="9" width="10" height="10" fill="#223350"/><rect x="0" y="19" width="9" height="9" fill="#223350"/></svg><div style="position:absolute;left:2237px;top:1697.6px;font-size:21.9px;line-height:1;color:#000;font-weight:400;white-space:nowrap;">Google Roads</div><div style="position:absolute;left:2193px;top:1729px;width:32px;height:30px;background:#959595"></div><div style="position:absolute;left:2237px;top:1733.6px;font-size:21.9px;line-height:1;color:#000;font-weight:400;white-space:nowrap;">somalia_adm2</div><div style="position:absolute;left:2193px;top:1764px;width:32px;height:10px;background:#c2b898;border:3px solid #222;border-bottom:none;box-sizing:border-box"></div><div style="position:absolute;left:2094px;top:1769px;width:782px;height:2px;background:#c6c6c6"></div><div style="position:absolute;left:2118px;top:1581px;width:302px;height:77px;border:7px solid #e0141e;box-sizing:border-box"></div><div style="position:absolute;left:0px;top:1771px;width:2876px;height:45px;background:#f0f0f0"></div><div style="position:absolute;left:12px;top:1788.6px;font-size:21.9px;line-height:1;color:#111;font-weight:400;white-space:nowrap;">1 item(s) selected</div><div style="position:absolute;left:1812px;top:1788.6px;font-size:21.9px;line-height:1;color:#111;font-weight:400;white-space:nowrap;">x: 190.268 mm</div><div style="position:absolute;left:2024px;top:1788.6px;font-size:21.9px;line-height:1;color:#111;font-weight:400;white-space:nowrap;">y: 91.9575 mm</div><div style="position:absolute;left:2237px;top:1788.6px;font-size:21.9px;line-height:1;color:#111;font-weight:400;white-space:nowrap;">page: 1</div><div style="position:absolute;left:2449px;top:1778px;width:217px;height:45px;background:#fff;border:2px solid #c4c4c4;border-radius:4px;box-sizing:border-box"></div><div style="position:absolute;left:2625px;top:1780px;width:40px;height:40px;background:#f4f4f4;border-left:1px solid #d0d0d0;box-sizing:border-box"></div><svg style="position:absolute;left:2636px;top:1794px;" width="18" height="10" viewBox="0 0 18 10"><path d="M0 0 H18 L9 10 Z" fill="#555"/></svg><div style="position:absolute;left:2457px;top:1790.6px;font-size:21.9px;line-height:1;color:#111;font-weight:400;white-space:nowrap;">57.0%</div><div style="position:absolute;left:2682px;top:1794px;width:194px;height:11px;background:#e4e4e4;border:1px solid #c4c4c4;border-radius:5px;box-sizing:border-box"></div><div style="position:absolute;left:2688px;top:1786px;width:27px;height:27px;background:#f8f8f8;border:2px solid #b4b4b4;border-radius:6px;box-sizing:border-box"></div>
</body></html>
